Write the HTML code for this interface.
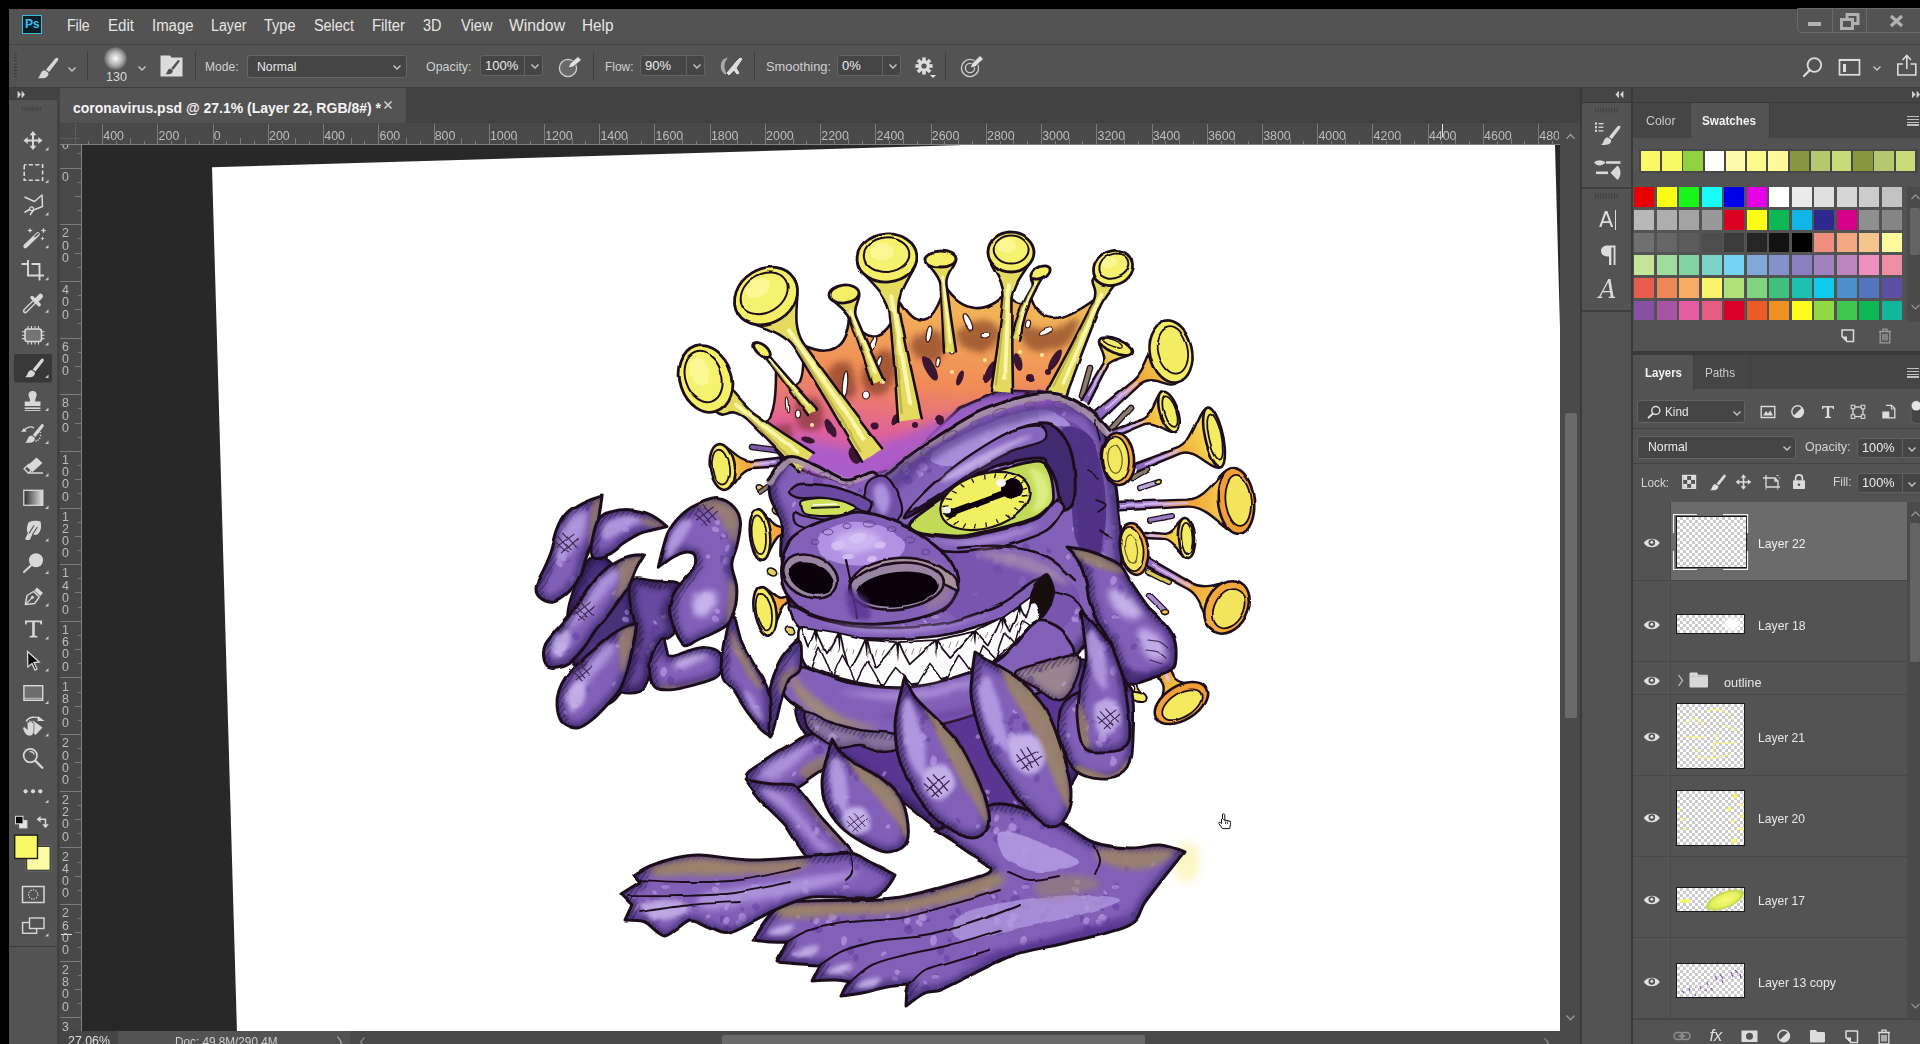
<!DOCTYPE html><html><head><meta charset="utf-8"><title>coronavirus.psd</title><style>
*{box-sizing:border-box;margin:0;padding:0}
html,body{width:1920px;height:1044px;overflow:hidden;background:#000}
body{font-family:"Liberation Sans",sans-serif;color:#ddd;position:relative}
.a{position:absolute}
.t{position:absolute;white-space:nowrap;line-height:1}
svg{position:absolute;overflow:visible}
</style></head><body>
<div class="a" style="left:9px;top:9px;width:1911px;height:1035px;background:#535353;"></div>
<div class="a" style="left:9px;top:44px;width:1911px;height:1px;background:#464646;"></div>
<div class="a" style="left:9px;top:87px;width:1911px;height:1px;background:#3c3c3c;"></div>
<div class="a" style="left:9px;top:88px;width:1911px;height:35px;background:#424242;"></div>
<div class="a" style="left:22px;top:15px;width:20px;height:19px;background:#0a1c26;border:1.5px solid #2fc1e6"></div>
<div class="t" style="left:25px;top:18px;font-size:12px;color:#31c5f0;font-weight:bold;letter-spacing:-0.3px">Ps</div>
<div class="t" style="left:67px;top:18px;font-size:16px;color:#e6e6e6;transform-origin:0 0;transform:scaleX(0.8804);">File</div>
<div class="t" style="left:108px;top:18px;font-size:16px;color:#e6e6e6;transform-origin:0 0;transform:scaleX(0.9430);">Edit</div>
<div class="t" style="left:152px;top:18px;font-size:16px;color:#e6e6e6;transform-origin:0 0;transform:scaleX(0.9332);">Image</div>
<div class="t" style="left:211px;top:18px;font-size:16px;color:#e6e6e6;transform-origin:0 0;transform:scaleX(0.8869);">Layer</div>
<div class="t" style="left:264px;top:18px;font-size:16px;color:#e6e6e6;transform-origin:0 0;transform:scaleX(0.9081);">Type</div>
<div class="t" style="left:314px;top:18px;font-size:16px;color:#e6e6e6;transform-origin:0 0;transform:scaleX(0.8995);">Select</div>
<div class="t" style="left:372px;top:18px;font-size:16px;color:#e6e6e6;transform-origin:0 0;transform:scaleX(0.9281);">Filter</div>
<div class="t" style="left:423px;top:18px;font-size:16px;color:#e6e6e6;transform-origin:0 0;transform:scaleX(0.9045);">3D</div>
<div class="t" style="left:461px;top:18px;font-size:16px;color:#e6e6e6;transform-origin:0 0;transform:scaleX(0.9159);">View</div>
<div class="t" style="left:509px;top:18px;font-size:16px;color:#e6e6e6;transform-origin:0 0;transform:scaleX(0.9841);">Window</div>
<div class="t" style="left:582px;top:18px;font-size:16px;color:#e6e6e6;transform-origin:0 0;transform:scaleX(0.9572);">Help</div>
<div class="a" style="left:1797px;top:8px;width:130px;height:25px;border:1px solid #6a6a6a;border-radius:0 0 0 5px"></div>
<div class="a" style="left:1832px;top:9px;width:1px;height:23px;background:#6a6a6a;"></div>
<div class="a" style="left:1866px;top:9px;width:1px;height:23px;background:#6a6a6a;"></div>
<div class="a" style="left:1808px;top:22px;width:13px;height:4px;background:#b0b0b0;"></div>
<svg style="left:1840px;top:13px" width="20" height="18"><rect x="7" y="1.5" width="11" height="9" fill="none" stroke="#b0b0b0" stroke-width="3"/><rect x="1.5" y="6.5" width="11" height="9" fill="#535353" stroke="#b0b0b0" stroke-width="3"/></svg>
<svg style="left:1889px;top:15px" width="16" height="12"><path d="M2 1 L13 11 M13 1 L2 11" stroke="#b0b0b0" stroke-width="3.2" fill="none"/></svg>
<div class="a" style="left:14px;top:54.0px;width:3px;height:1px;background:#3a3a3a;"></div>
<div class="a" style="left:14px;top:57.2px;width:3px;height:1px;background:#3a3a3a;"></div>
<div class="a" style="left:14px;top:60.4px;width:3px;height:1px;background:#3a3a3a;"></div>
<div class="a" style="left:14px;top:63.6px;width:3px;height:1px;background:#3a3a3a;"></div>
<div class="a" style="left:14px;top:66.8px;width:3px;height:1px;background:#3a3a3a;"></div>
<div class="a" style="left:14px;top:70.0px;width:3px;height:1px;background:#3a3a3a;"></div>
<div class="a" style="left:14px;top:73.2px;width:3px;height:1px;background:#3a3a3a;"></div>
<div class="a" style="left:14px;top:76.4px;width:3px;height:1px;background:#3a3a3a;"></div>
<svg style="left:37px;top:57px" width="22" height="22" viewBox="0 0 21 21"><path d="M19.5 0.8 C20.6 1.4 20.4 2.6 19.8 3.6 L11.6 14.2 L8.6 12.2 L17.2 1.6 C17.9 0.8 18.8 0.4 19.5 0.8 Z M8 13 L10.8 15 C11.4 17 10.2 19.2 7.6 20 C5.4 20.6 2.6 20.2 0.6 20.4 C2.8 18.8 3 16.6 4 14.8 C5 13 6.6 12.6 8 13 Z" fill="#d6d6d6"/></svg>
<svg style="left:68px;top:67px" width="8" height="5"><path d="M0.5 0.5 L4.0 4 L7.5 0.5" fill="none" stroke="#c8c8c8" stroke-width="1.4"/></svg>
<div class="a" style="left:87px;top:52px;width:1px;height:28px;background:#3e3e3e;"></div>
<div class="a" style="left:104px;top:47px;width:23px;height:23px;border-radius:50%;background:radial-gradient(circle,#fff 0%,#e8e8e8 12%,#b4b4b4 40%,#7c7c7c 62%,#535353 74%)"></div>
<div class="t" style="left:106px;top:71px;font-size:12.5px;color:#d8d8d8;">130</div>
<svg style="left:138px;top:66px" width="8" height="5"><path d="M0.5 0.5 L4.0 4 L7.5 0.5" fill="none" stroke="#c8c8c8" stroke-width="1.4"/></svg>
<svg style="left:160px;top:55px" width="23" height="22" viewBox="0 0 23 22"><path d="M0.5 0.5 H10 L11.5 2.5 H22.5 V21.5 H0.5 Z" fill="#dcdcdc"/><g transform="translate(5,4.5) scale(0.72)"><path d="M19.5 0.8 C20.6 1.4 20.4 2.6 19.8 3.6 L11.6 14.2 L8.6 12.2 L17.2 1.6 C17.9 0.8 18.8 0.4 19.5 0.8 Z M8 13 L10.8 15 C11.4 17 10.2 19.2 7.6 20 C5.4 20.6 2.6 20.2 0.6 20.4 C2.8 18.8 3 16.6 4 14.8 C5 13 6.6 12.6 8 13 Z" fill="#505050"/></g></svg>
<div class="a" style="left:195px;top:52px;width:1px;height:28px;background:#3e3e3e;"></div>
<div class="t" style="left:205px;top:59.5px;font-size:13px;color:#d0d0d0;transform-origin:0 0;transform:scaleX(0.9272);">Mode:</div>
<div class="a" style="left:247px;top:55px;width:160px;height:23px;background:#454545;border:1px solid #666;border-radius:3px"></div>
<div class="t" style="left:257px;top:59.5px;font-size:13px;color:#e8e8e8;transform-origin:0 0;transform:scaleX(0.9428);">Normal</div>
<svg style="left:393px;top:65px" width="8" height="5"><path d="M0.5 0.5 L4.0 4 L7.5 0.5" fill="none" stroke="#c8c8c8" stroke-width="1.4"/></svg>
<div class="t" style="left:425.5px;top:59.5px;font-size:13px;color:#d0d0d0;transform-origin:0 0;transform:scaleX(0.9542);">Opacity:</div>
<div class="a" style="left:480px;top:55px;width:63px;height:21px;background:#454545;border:1px solid #636363;border-radius:3px"></div>
<div class="a" style="left:524px;top:56px;width:1px;height:19px;background:#636363;"></div>
<div class="t" style="left:485px;top:59px;font-size:13px;color:#ececec;">100%</div>
<svg style="left:531px;top:64px" width="8" height="5"><path d="M0.5 0.5 L4.0 4 L7.5 0.5" fill="none" stroke="#c8c8c8" stroke-width="1.4"/></svg>
<svg style="left:557px;top:55px" width="28" height="24"><circle cx="11" cy="13" r="8.6" fill="#6a6a6a" stroke="#d0d0d0" stroke-width="1.3"/><path d="M11 13 L13 8.5 L21 1.5 L24.5 5 L16 12 Z" fill="#e0e0e0" stroke="#535353" stroke-width="0.8"/></svg>
<div class="a" style="left:593px;top:52px;width:1px;height:28px;background:#3e3e3e;"></div>
<div class="t" style="left:605px;top:59.5px;font-size:13px;color:#d0d0d0;transform-origin:0 0;transform:scaleX(0.9176);">Flow:</div>
<div class="a" style="left:640px;top:55px;width:65px;height:21px;background:#454545;border:1px solid #636363;border-radius:3px"></div>
<div class="a" style="left:686px;top:56px;width:1px;height:19px;background:#636363;"></div>
<div class="t" style="left:645px;top:59px;font-size:13px;color:#ececec;">90%</div>
<svg style="left:693px;top:64px" width="8" height="5"><path d="M0.5 0.5 L4.0 4 L7.5 0.5" fill="none" stroke="#c8c8c8" stroke-width="1.4"/></svg>
<svg style="left:717px;top:56px" width="28" height="22"><path d="M9 3 C3 5 3 15 9 18 C6 14 6 7 9 3 Z" fill="#a8a8a8" stroke="#a8a8a8" stroke-width="1.5"/><path d="M10 17 L20 5 L23 2 L25 3 L23 6 L19 12 L22 17 L20 18 L17 14 L12 19 Z" fill="#dcdcdc" stroke="#e6e6e6" stroke-width="1" stroke-linejoin="round"/></svg>
<div class="a" style="left:754px;top:52px;width:1px;height:28px;background:#3e3e3e;"></div>
<div class="t" style="left:766px;top:59.5px;font-size:13px;color:#d0d0d0;transform-origin:0 0;transform:scaleX(0.9884);">Smoothing:</div>
<div class="a" style="left:837px;top:55px;width:64px;height:21px;background:#454545;border:1px solid #636363;border-radius:3px"></div>
<div class="a" style="left:882px;top:56px;width:1px;height:19px;background:#636363;"></div>
<div class="t" style="left:842px;top:59px;font-size:13px;color:#ececec;">0%</div>
<svg style="left:889px;top:64px" width="8" height="5"><path d="M0.5 0.5 L4.0 4 L7.5 0.5" fill="none" stroke="#c8c8c8" stroke-width="1.4"/></svg>
<svg style="left:914px;top:56px" width="24" height="24"><g transform="translate(10,10)"><rect x="-1.8" y="-8.6" width="3.6" height="5" fill="#dcdcdc" transform="rotate(0)"/><rect x="-1.8" y="-8.6" width="3.6" height="5" fill="#dcdcdc" transform="rotate(45)"/><rect x="-1.8" y="-8.6" width="3.6" height="5" fill="#dcdcdc" transform="rotate(90)"/><rect x="-1.8" y="-8.6" width="3.6" height="5" fill="#dcdcdc" transform="rotate(135)"/><rect x="-1.8" y="-8.6" width="3.6" height="5" fill="#dcdcdc" transform="rotate(180)"/><rect x="-1.8" y="-8.6" width="3.6" height="5" fill="#dcdcdc" transform="rotate(225)"/><rect x="-1.8" y="-8.6" width="3.6" height="5" fill="#dcdcdc" transform="rotate(270)"/><rect x="-1.8" y="-8.6" width="3.6" height="5" fill="#dcdcdc" transform="rotate(315)"/><circle r="5.8" fill="#dcdcdc"/><circle r="2.6" fill="#535353"/></g><path d="M16 19 H22 L19 22 Z" fill="#e6e6e6"/></svg>
<div class="a" style="left:945px;top:52px;width:1px;height:28px;background:#3e3e3e;"></div>
<svg style="left:958px;top:53px" width="28" height="26"><circle cx="12" cy="15" r="8.6" fill="none" stroke="#d0d0d0" stroke-width="1.3"/><circle cx="12" cy="15" r="4.6" fill="none" stroke="#d0d0d0" stroke-width="1.3"/><path d="M12 15 L14 10.5 L22 2.5 L25.5 6 L17 14 Z" fill="#e0e0e0" stroke="#535353" stroke-width="0.9"/></svg>
<svg style="left:1802px;top:56px" width="22" height="22"><circle cx="12.4" cy="9" r="6.8" fill="none" stroke="#dcdcdc" stroke-width="1.8"/><path d="M7.8 14 L2 20" stroke="#dcdcdc" stroke-width="2.2" stroke-linecap="round"/></svg>
<svg style="left:1838px;top:58px" width="23" height="18"><rect x="1.5" y="1.8" width="20" height="15" fill="none" stroke="#dcdcdc" stroke-width="1.7"/><rect x="1" y="1" width="21" height="2" fill="#dcdcdc"/><rect x="5" y="6" width="3" height="8" fill="#dcdcdc"/></svg>
<svg style="left:1873px;top:66px" width="8" height="5"><path d="M0.5 0.5 L4.0 4 L7.5 0.5" fill="none" stroke="#c8c8c8" stroke-width="1.4"/></svg>
<svg style="left:1896px;top:54px" width="22" height="24"><path d="M7 10 H1.8 V21 H19.8 V10 H14.5" fill="none" stroke="#dcdcdc" stroke-width="1.6"/><path d="M10.8 15 V2 M6.5 6 L10.8 1.5 L15 6" fill="none" stroke="#dcdcdc" stroke-width="1.6"/></svg>
<div class="a" style="left:9px;top:100px;width:48px;height:846px;background:#535353;"></div>
<div class="a" style="left:9px;top:946px;width:48px;height:1px;background:#3c3c3c;"></div>
<div class="a" style="left:9px;top:947px;width:48px;height:97px;background:#535353;"></div>
<div class="a" style="left:57px;top:88px;width:3px;height:956px;background:#424242;"></div>
<div class="a" style="left:9px;top:99px;width:48px;height:1px;background:#3c3c3c;"></div>
<svg style="left:0;top:0" width="60" height="1044">
<path d="M18 91.5 L20.5 94.5 L18 97.5 Z M22 91.5 L24.5 94.5 L22 97.5 Z" fill="#d8d8d8" stroke="#d8d8d8" stroke-width="0.8"/>
<rect x="22.00" y="107" width="1" height="4" fill="#404040"/>
<rect x="24.55" y="107" width="1" height="4" fill="#404040"/>
<rect x="27.10" y="107" width="1" height="4" fill="#404040"/>
<rect x="29.65" y="107" width="1" height="4" fill="#404040"/>
<rect x="32.20" y="107" width="1" height="4" fill="#404040"/>
<rect x="34.75" y="107" width="1" height="4" fill="#404040"/>
<rect x="37.30" y="107" width="1" height="4" fill="#404040"/>
<rect x="39.85" y="107" width="1" height="4" fill="#404040"/>
<path d="M33 131 L36.4 135.2 H34 V139.5 H38.3 V137.1 L42.5 140.5 L38.3 143.9 V141.5 H34 V145.8 H36.4 L33 150 L29.6 145.8 H32 V141.5 H27.7 V143.9 L23.5 140.5 L27.7 137.1 V139.5 H32 V135.2 H29.6 Z" fill="#d8d8d8"/>
<path d="M48.5 147 V150.5 H45 Z" fill="#c8c8c8"/>
<rect x="24.2" y="164.8" width="18.4" height="15.4" fill="none" stroke="#d8d8d8" stroke-width="1.6" stroke-dasharray="4.2 2.3" stroke-dashoffset="2"/>
<path d="M48.5 179.5 V183.0 H45 Z" fill="#c8c8c8"/>
<path d="M24.5 197 L34.5 201.5 L42 195 L42.5 206.5 L33.5 210 L30 215 M32 208 L24.5 212.5" fill="none" stroke="#d8d8d8" stroke-width="1.5" stroke-linejoin="round"/><circle cx="31.6" cy="208.7" r="1.9" fill="#535353" stroke="#d8d8d8" stroke-width="1.2"/>
<path d="M48.5 212 V215.5 H45 Z" fill="#c8c8c8"/>
<path d="M25.3 246.3 L37.8 234.2" stroke="#d8d8d8" stroke-width="4" stroke-linecap="round"/><path d="M35 236.5 L38 233.8" stroke="#535353" stroke-width="1.6" stroke-linecap="round"/>
<path d="M30 227.7 L30.784 229.716 L32.8 230.5 L30.784 231.284 L30 233.3 L29.216 231.284 L27.2 230.5 L29.216 229.716 Z" fill="#d8d8d8"/>
<path d="M43.5 227.5 L44.34 229.66 L46.5 230.5 L44.34 231.34 L43.5 233.5 L42.66 231.34 L40.5 230.5 L42.66 229.66 Z" fill="#d8d8d8"/>
<path d="M42.5 236.3 L43.116 237.884 L44.7 238.5 L43.116 239.116 L42.5 240.7 L41.884 239.116 L40.3 238.5 L41.884 237.884 Z" fill="#d8d8d8"/>
<path d="M48.5 244.8 V248.3 H45 Z" fill="#c8c8c8"/>
<path d="M21.5 264 H28 M28 260 V275.5 H44 M31.5 264 H39.5 V280.5" fill="none" stroke="#d8d8d8" stroke-width="1.9"/>
<path d="M48.5 276.8 V280.3 H45 Z" fill="#c8c8c8"/>
<path d="M25.2 311 L35 301.2" stroke="#d8d8d8" stroke-width="4.6" stroke-linecap="round"/><path d="M25.4 310.8 L34.2 302" stroke="#535353" stroke-width="2" stroke-linecap="round"/><path d="M32 297.5 L39.2 304.7" stroke="#d8d8d8" stroke-width="3.4" stroke-linecap="round"/><path d="M36 300.7 L40.5 296.2" stroke="#d8d8d8" stroke-width="5" stroke-linecap="round"/>
<path d="M48.5 309.3 V312.8 H45 Z" fill="#c8c8c8"/>
<rect x="25" y="329" width="16.5" height="12.5" rx="2.5" fill="#747474" stroke="#d8d8d8" stroke-width="1.6"/>
<path d="M28.0 326 V329 M28.0 341.5 V344.5" stroke="#d8d8d8" stroke-width="1.1"/>
<path d="M31.5 326 V329 M31.5 341.5 V344.5" stroke="#d8d8d8" stroke-width="1.1"/>
<path d="M35.0 326 V329 M35.0 341.5 V344.5" stroke="#d8d8d8" stroke-width="1.1"/>
<path d="M38.5 326 V329 M38.5 341.5 V344.5" stroke="#d8d8d8" stroke-width="1.1"/>
<path d="M22 331.8 H25 M41.5 331.8 H44.5" stroke="#d8d8d8" stroke-width="1.1"/>
<path d="M22 335.2 H25 M41.5 335.2 H44.5" stroke="#d8d8d8" stroke-width="1.1"/>
<path d="M22 338.6 H25 M41.5 338.6 H44.5" stroke="#d8d8d8" stroke-width="1.1"/>
<path d="M48.5 342 V345.5 H45 Z" fill="#c8c8c8"/>
<rect x="14" y="354" width="38" height="28.5" rx="2" fill="#383838"/>
<g transform="translate(24.5,358) scale(0.95)"><path d="M19.5 0.8 C20.6 1.4 20.4 2.6 19.8 3.6 L11.6 14.2 L8.6 12.2 L17.2 1.6 C17.9 0.8 18.8 0.4 19.5 0.8 Z M8 13 L10.8 15 C11.4 17 10.2 19.2 7.6 20 C5.4 20.6 2.6 20.2 0.6 20.4 C2.8 18.8 3 16.6 4 14.8 C5 13 6.6 12.6 8 13 Z" fill="#d8d8d8"/></g>
<path d="M48.5 374.5 V378.0 H45 Z" fill="#c8c8c8"/>
<path d="M32.6 391 C35.6 391 37 393.2 36.6 395.6 C36.3 397.4 35.2 398.8 35.2 400.5 V401.5 H40.5 V406 H24.7 V401.5 H30 V400.5 C30 398.8 28.9 397.4 28.6 395.6 C28.2 393.2 29.6 391 32.6 391 Z" fill="#d8d8d8"/><rect x="24.7" y="407.4" width="15.8" height="1.6" fill="#d8d8d8"/><rect x="24.7" y="410" width="15.8" height="0.9" fill="#d8d8d8"/>
<path d="M48.5 407.5 V411.0 H45 Z" fill="#c8c8c8"/>
<g transform="translate(24.5,423.5) scale(0.95)"><path d="M19.5 0.8 C20.6 1.4 20.4 2.6 19.8 3.6 L11.6 14.2 L8.6 12.2 L17.2 1.6 C17.9 0.8 18.8 0.4 19.5 0.8 Z M8 13 L10.8 15 C11.4 17 10.2 19.2 7.6 20 C5.4 20.6 2.6 20.2 0.6 20.4 C2.8 18.8 3 16.6 4 14.8 C5 13 6.6 12.6 8 13 Z" fill="#d8d8d8"/></g>
<path d="M24.5 430.5 C26.5 427 31 426 34 428" fill="none" stroke="#d8d8d8" stroke-width="1.3"/><path d="M21 431.8 L26.5 431.8 L24 428 Z" fill="#d8d8d8"/>
<circle cx="40.3" cy="432.5" r="0.8" fill="#d8d8d8"/><circle cx="40.5" cy="435.5" r="0.8" fill="#d8d8d8"/><circle cx="39.7" cy="438.2" r="0.8" fill="#d8d8d8"/><circle cx="38" cy="440" r="0.8" fill="#d8d8d8"/><circle cx="36" cy="441" r="0.8" fill="#d8d8d8"/>
<path d="M48.5 440.5 V444.0 H45 Z" fill="#c8c8c8"/>
<path d="M36.5 457.5 L42.5 463 L32.5 472 L26.5 466.5 Z" fill="#d8d8d8"/><path d="M29.5 463.8 L24 468.8 L28.2 473 H43 M28.5 473 L34 468" fill="none" stroke="#d8d8d8" stroke-width="1.4" stroke-linejoin="round"/>
<path d="M48.5 473 V476.5 H45 Z" fill="#c8c8c8"/>
<defs><linearGradient id="gd" x1="0" y1="0" x2="1" y2="0"><stop offset="0" stop-color="#2c2c2c"/><stop offset="1" stop-color="#e2e2e2"/></linearGradient></defs>
<rect x="23.8" y="490.3" width="19" height="15" fill="url(#gd)" stroke="#d8d8d8" stroke-width="1.3"/>
<path d="M48.5 505.5 V509.0 H45 Z" fill="#c8c8c8"/>
<path d="M28.5 522.5 C31 520.5 38.5 520.5 40.5 521.5 C41.5 525 41.5 531 38 534 C36 535.5 33.5 535 32.5 534 L30 539.5 C28.5 540.5 25.5 540 25 539 L28 533 C26.5 531.5 26.5 527 28.5 522.5 Z" fill="#d8d8d8"/><path d="M29 533.5 L34 525.5 M32.5 534.5 L37.5 527" stroke="#535353" stroke-width="1.2" fill="none"/>
<path d="M48.5 538 V541.5 H45 Z" fill="#c8c8c8"/>
<circle cx="36" cy="560.3" r="7" fill="#d8d8d8"/><path d="M31 565.5 L24 572" stroke="#d8d8d8" stroke-width="2" stroke-linecap="round"/>
<path d="M48.5 570.5 V574.0 H45 Z" fill="#c8c8c8"/>
<path d="M37 587.5 L43 593 L40.3 596 L34.3 590.5 Z" fill="#d8d8d8"/><path d="M33.5 591.5 L27 595.5 L25.3 604.5 L34.5 603.5 L39.3 597 Z" fill="none" stroke="#d8d8d8" stroke-width="1.4" stroke-linejoin="round"/><path d="M25.8 604 L32 597.8" stroke="#d8d8d8" stroke-width="1.2"/><circle cx="32.4" cy="597.3" r="1.5" fill="#d8d8d8"/>
<path d="M48.5 603 V606.5 H45 Z" fill="#c8c8c8"/>
<path d="M25 620.5 H42 V624.5 H40.6 L40 622.3 H34.8 V635.5 L37.5 636.2 V637.6 H29.5 V636.2 L32.2 635.5 V622.3 H27 L26.4 624.5 H25 Z" fill="#d8d8d8"/>
<path d="M48.5 636 V639.5 H45 Z" fill="#c8c8c8"/>
<path d="M27.5 651.5 L39.3 662 L34 662.6 L37 669 L35 670 L32 663.6 L27.8 667 Z" fill="#0c0c0c" stroke="#d8d8d8" stroke-width="1.3" stroke-linejoin="miter"/>
<path d="M48.5 668 V671.5 H45 Z" fill="#c8c8c8"/>
<rect x="23.9" y="685.7" width="18.8" height="14.6" fill="#6c6c6c" stroke="#d8d8d8" stroke-width="1.4"/><path d="M24 698.3 H42.5" stroke="#d8d8d8" stroke-width="0.8"/>
<path d="M48.5 700.5 V704.0 H45 Z" fill="#c8c8c8"/>
<path d="M26 721.5 C29 716.5 36 716 40 719" fill="none" stroke="#d8d8d8" stroke-width="1.4"/><path d="M38 716 L44.5 721 H37.5 Z" fill="#d8d8d8"/>
<path d="M33 720.5 L42.5 727.5 L35.5 735 L28 727.5 Z" fill="#d8d8d8"/>
<path d="M25 727 L27.2 729.5 V722.5 C27.2 721.5 28.8 721.5 28.8 722.5 V721 C28.8 720 30.6 720 30.6 721 V721.6 C30.6 720.6 32.3 720.6 32.3 721.6 V723 C32.3 722.2 33.9 722.2 33.9 723 V731 C33.9 734 32 736 29.5 736 C27 736 25.8 734.6 24.5 732.5 L22.8 729 C22.4 727.6 24 726.4 25 727 Z" fill="#d8d8d8" stroke="#535353" stroke-width="0.7"/>
<path d="M48.5 733 V736.5 H45 Z" fill="#c8c8c8"/>
<circle cx="30.3" cy="755.6" r="6.7" fill="none" stroke="#d8d8d8" stroke-width="1.7"/><path d="M35.3 760.8 L42.3 767.8" stroke="#d8d8d8" stroke-width="2.3" stroke-linecap="round"/><path d="M29.5 751.8 C31.6 751.3 33.6 752.6 34.2 754.6" fill="none" stroke="#d8d8d8" stroke-width="1.1"/>
<circle cx="25.6" cy="791.3" r="2.1" fill="#d8d8d8"/>
<circle cx="33" cy="791.3" r="2.1" fill="#d8d8d8"/>
<circle cx="40.3" cy="791.3" r="2.1" fill="#d8d8d8"/>
<path d="M48.5 799.5 V803.0 H45 Z" fill="#c8c8c8"/>
<rect x="19.5" y="820.5" width="7.5" height="7.5" fill="#e4e4e4" stroke="#cfcfcf" stroke-width="1"/><rect x="15.5" y="816.3" width="7.5" height="7.5" fill="#0a0a0a" stroke="#d8d8d8" stroke-width="1"/>
<path d="M40 819.3 H45.5 V824.5" fill="none" stroke="#d8d8d8" stroke-width="1.5"/><path d="M36.6 819.3 L40.6 816 V822.6 Z M45.5 828.3 L42.2 824.2 H48.8 Z" fill="#d8d8d8"/>
<rect x="26.7" y="846.4" width="23.4" height="23.8" fill="#fdfba4" stroke="#2a2a2a" stroke-width="1"/><rect x="25.7" y="845.4" width="25.4" height="25.8" fill="none" stroke="#6a6a6a" stroke-width="0.8"/>
<rect x="14.7" y="835.1" width="22.8" height="23.4" fill="#fbf866" stroke="#1c1c1c" stroke-width="1.4"/>
<rect x="22.5" y="886.5" width="21.5" height="16" fill="none" stroke="#d8d8d8" stroke-width="1.5"/><circle cx="33.2" cy="894.5" r="4.6" fill="none" stroke="#d8d8d8" stroke-width="1.2" stroke-dasharray="1.3 1.3"/>
<rect x="22.6" y="922.5" width="14" height="10.8" fill="#535353" stroke="#d8d8d8" stroke-width="1.4"/><rect x="29.5" y="918" width="14.5" height="10.5" fill="#535353" stroke="#d8d8d8" stroke-width="1.4"/>
<path d="M48.5 933 V936.5 H45 Z" fill="#c8c8c8"/>
</svg>
<div class="a" style="left:60px;top:88px;width:346px;height:35px;background:#535353;"></div>
<div class="t" style="left:73px;top:101px;font-size:14px;color:#f4f4f4;transform-origin:0 0;transform:scaleX(1.0007);font-weight:bold;">coronavirus.psd @ 27.1% (Layer 22, RGB/8#) *</div>
<svg style="left:383px;top:100px" width="10" height="10"><path d="M1.5 1.5 L8.5 8.5 M8.5 1.5 L1.5 8.5" stroke="#d0d0d0" stroke-width="1.6"/></svg>
<div class="a" style="left:60px;top:123px;width:1500px;height:908px;background:#282828;"></div>
<svg style="left:0;top:0" width="1920" height="1044"><defs><clipPath id="cv"><rect x="82" y="145" width="1478" height="886"/></clipPath></defs><g clip-path="url(#cv)"><path id="page" d="M212 167.3 L1554.5 127.5 L1579.6 1040 L237.2 1040 Z" fill="#fff"/>
<filter id="sk" x="0" y="0" width="100%" height="100%" filterUnits="userSpaceOnUse"><feTurbulence type="fractalNoise" baseFrequency="0.035" numOctaves="2" seed="4" result="n"/><feDisplacementMap in="SourceGraphic" in2="n" scale="3.2" xChannelSelector="R" yChannelSelector="G"/></filter>
<g filter="url(#sk)">
<defs>
<filter id="b2" x="-30%" y="-30%" width="160%" height="160%"><feGaussianBlur stdDeviation="2"/></filter>
<filter id="b3" x="-30%" y="-30%" width="160%" height="160%"><feGaussianBlur stdDeviation="3"/></filter>
<filter id="b5" x="-30%" y="-30%" width="160%" height="160%"><feGaussianBlur stdDeviation="5"/></filter>
<filter id="b8" x="-30%" y="-30%" width="160%" height="160%"><feGaussianBlur stdDeviation="8"/></filter>
<linearGradient id="crg" gradientUnits="userSpaceOnUse" x1="900" y1="300" x2="880" y2="480"><stop offset="0" stop-color="#f2b458"/><stop offset="0.45" stop-color="#f08a58"/><stop offset="0.75" stop-color="#e0609a"/><stop offset="1" stop-color="#b060c8"/></linearGradient>
<linearGradient id="stg" x1="0" y1="0" x2="1" y2="0"><stop offset="0" stop-color="#8a5cc2"/><stop offset="0.55" stop-color="#b08ad8"/><stop offset="0.8" stop-color="#f2a63a"/><stop offset="1" stop-color="#f6d24a"/></linearGradient>
<pattern id="mot" width="90" height="90" patternUnits="userSpaceOnUse"><ellipse cx="40.7" cy="50.4" rx="5.2" ry="3.6" transform="rotate(91 40.7 50.4)" fill="#5a3896" opacity="0.45"/><ellipse cx="52.9" cy="16.6" rx="3.8" ry="2.9" transform="rotate(143 52.9 16.6)" fill="#5a3896" opacity="0.45"/><ellipse cx="8.5" cy="27.3" rx="2.3" ry="1.9" transform="rotate(125 8.5 27.3)" fill="#5a3896" opacity="0.45"/><ellipse cx="3.8" cy="88.4" rx="5.4" ry="4.1" transform="rotate(111 3.8 88.4)" fill="#5a3896" opacity="0.45"/><ellipse cx="14.2" cy="1.4" rx="3.8" ry="2.0" transform="rotate(34 14.2 1.4)" fill="#5a3896" opacity="0.45"/><ellipse cx="21.8" cy="2.7" rx="3.6" ry="2.5" transform="rotate(152 21.8 2.7)" fill="#5a3896" opacity="0.45"/><ellipse cx="46.7" cy="57.6" rx="3.7" ry="2.9" transform="rotate(82 46.7 57.6)" fill="#5a3896" opacity="0.45"/><ellipse cx="25.0" cy="89.8" rx="5.5" ry="4.6" transform="rotate(127 25.0 89.8)" fill="#5a3896" opacity="0.45"/><ellipse cx="28.4" cy="20.7" rx="3.0" ry="1.6" transform="rotate(138 28.4 20.7)" fill="#5a3896" opacity="0.45"/><ellipse cx="36.0" cy="76.2" rx="3.4" ry="3.0" transform="rotate(153 36.0 76.2)" fill="#5a3896" opacity="0.45"/><ellipse cx="0.0" cy="18.9" rx="5.2" ry="3.6" transform="rotate(176 0.0 18.9)" fill="#5a3896" opacity="0.45"/><ellipse cx="35.8" cy="6.6" rx="4.2" ry="3.4" transform="rotate(49 35.8 6.6)" fill="#5a3896" opacity="0.45"/><ellipse cx="7.8" cy="29.9" rx="5.4" ry="4.3" transform="rotate(21 7.8 29.9)" fill="#5a3896" opacity="0.45"/><ellipse cx="22.2" cy="9.1" rx="2.2" ry="1.8" transform="rotate(32 22.2 9.1)" fill="#5a3896" opacity="0.45"/><ellipse cx="50.3" cy="40.3" rx="2.7" ry="2.1" transform="rotate(24 50.3 40.3)" fill="#5a3896" opacity="0.45"/><ellipse cx="57.9" cy="10.5" rx="3.5" ry="2.0" transform="rotate(49 57.9 10.5)" fill="#5a3896" opacity="0.45"/><ellipse cx="87.4" cy="72.3" rx="2.9" ry="2.5" transform="rotate(38 87.4 72.3)" fill="#c9b0f0" opacity="0.5"/><ellipse cx="35.5" cy="76.9" rx="3.9" ry="2.1" transform="rotate(178 35.5 76.9)" fill="#c9b0f0" opacity="0.5"/><ellipse cx="19.2" cy="23.2" rx="4.3" ry="2.7" transform="rotate(53 19.2 23.2)" fill="#c9b0f0" opacity="0.5"/><ellipse cx="6.6" cy="8.1" rx="3.7" ry="2.2" transform="rotate(108 6.6 8.1)" fill="#c9b0f0" opacity="0.5"/><ellipse cx="33.5" cy="40.8" rx="4.9" ry="3.4" transform="rotate(103 33.5 40.8)" fill="#c9b0f0" opacity="0.5"/><ellipse cx="78.0" cy="16.5" rx="2.5" ry="2.1" transform="rotate(147 78.0 16.5)" fill="#c9b0f0" opacity="0.5"/><ellipse cx="22.5" cy="17.1" rx="4.2" ry="3.7" transform="rotate(35 22.5 17.1)" fill="#c9b0f0" opacity="0.5"/><ellipse cx="85.5" cy="79.4" rx="3.8" ry="2.5" transform="rotate(19 85.5 79.4)" fill="#c9b0f0" opacity="0.5"/><ellipse cx="3.5" cy="86.6" rx="2.7" ry="2.1" transform="rotate(46 3.5 86.6)" fill="#c9b0f0" opacity="0.5"/><ellipse cx="74.1" cy="53.7" rx="2.9" ry="1.6" transform="rotate(130 74.1 53.7)" fill="#c9b0f0" opacity="0.5"/><ellipse cx="6.2" cy="20.6" rx="3.7" ry="3.1" transform="rotate(111 6.2 20.6)" fill="#c9b0f0" opacity="0.5"/><ellipse cx="25.2" cy="82.6" rx="2.6" ry="1.3" transform="rotate(48 25.2 82.6)" fill="#c9b0f0" opacity="0.5"/></pattern>
<pattern id="hat" width="4" height="4" patternUnits="userSpaceOnUse" patternTransform="rotate(-55)"><rect x="0" y="0" width="4" height="0.9" fill="#22122e"/></pattern>
<pattern id="hat2" width="4" height="4" patternUnits="userSpaceOnUse" patternTransform="rotate(35)"><rect x="0" y="0" width="4" height="0.8" fill="#22122e"/></pattern>
</defs>
<ellipse cx="1186" cy="862" rx="14" ry="20" fill="#fbf0a0" opacity="0.6" filter="url(#b5)"/>
<clipPath id="c1"><path d="M800.0 705.0 C811.7 702.5 853.3 725.0 880.0 725.0 C906.7 725.0 933.3 712.5 960.0 705.0 C986.7 697.5 1019.2 687.5 1040.0 680.0 C1060.8 672.5 1075.0 656.7 1085.0 660.0 C1095.0 663.3 1100.0 683.3 1100.0 700.0 C1100.0 716.7 1091.7 743.3 1085.0 760.0 C1078.3 776.7 1070.8 788.3 1060.0 800.0 C1049.2 811.7 1036.7 823.3 1020.0 830.0 C1003.3 836.7 980.0 845.0 960.0 840.0 C940.0 835.0 918.3 812.5 900.0 800.0 C881.7 787.5 865.0 775.0 850.0 765.0 C835.0 755.0 818.3 750.0 810.0 740.0 C801.7 730.0 788.3 707.5 800.0 705.0 Z"/></clipPath>
<path d="M800.0 705.0 C811.7 702.5 853.3 725.0 880.0 725.0 C906.7 725.0 933.3 712.5 960.0 705.0 C986.7 697.5 1019.2 687.5 1040.0 680.0 C1060.8 672.5 1075.0 656.7 1085.0 660.0 C1095.0 663.3 1100.0 683.3 1100.0 700.0 C1100.0 716.7 1091.7 743.3 1085.0 760.0 C1078.3 776.7 1070.8 788.3 1060.0 800.0 C1049.2 811.7 1036.7 823.3 1020.0 830.0 C1003.3 836.7 980.0 845.0 960.0 840.0 C940.0 835.0 918.3 812.5 900.0 800.0 C881.7 787.5 865.0 775.0 850.0 765.0 C835.0 755.0 818.3 750.0 810.0 740.0 C801.7 730.0 788.3 707.5 800.0 705.0 Z" fill="#5a3692"/>
<g clip-path="url(#c1)">
<path d="M800.0 705.0 C811.7 702.5 853.3 725.0 880.0 725.0 C906.7 725.0 933.3 712.5 960.0 705.0 C986.7 697.5 1019.2 687.5 1040.0 680.0 C1060.8 672.5 1075.0 656.7 1085.0 660.0 C1095.0 663.3 1100.0 683.3 1100.0 700.0 C1100.0 716.7 1091.7 743.3 1085.0 760.0 C1078.3 776.7 1070.8 788.3 1060.0 800.0 C1049.2 811.7 1036.7 823.3 1020.0 830.0 C1003.3 836.7 980.0 845.0 960.0 840.0 C940.0 835.0 918.3 812.5 900.0 800.0 C881.7 787.5 865.0 775.0 850.0 765.0 C835.0 755.0 818.3 750.0 810.0 740.0 C801.7 730.0 788.3 707.5 800.0 705.0 Z" fill="url(#mot)"/>
<path d="M800.0 705.0 C811.7 702.5 853.3 725.0 880.0 725.0 C906.7 725.0 933.3 712.5 960.0 705.0 C986.7 697.5 1019.2 687.5 1040.0 680.0 C1060.8 672.5 1075.0 656.7 1085.0 660.0 C1095.0 663.3 1100.0 683.3 1100.0 700.0 C1100.0 716.7 1091.7 743.3 1085.0 760.0 C1078.3 776.7 1070.8 788.3 1060.0 800.0 C1049.2 811.7 1036.7 823.3 1020.0 830.0 C1003.3 836.7 980.0 845.0 960.0 840.0 C940.0 835.0 918.3 812.5 900.0 800.0 C881.7 787.5 865.0 775.0 850.0 765.0 C835.0 755.0 818.3 750.0 810.0 740.0 C801.7 730.0 788.3 707.5 800.0 705.0 Z" fill="none" stroke="#35205e" stroke-width="14" filter="url(#b3)" opacity="0.9"/>
<path d="M800.0 705.0 C811.7 702.5 853.3 725.0 880.0 725.0 C906.7 725.0 933.3 712.5 960.0 705.0 C986.7 697.5 1019.2 687.5 1040.0 680.0 C1060.8 672.5 1075.0 656.7 1085.0 660.0 C1095.0 663.3 1100.0 683.3 1100.0 700.0 C1100.0 716.7 1091.7 743.3 1085.0 760.0 C1078.3 776.7 1070.8 788.3 1060.0 800.0 C1049.2 811.7 1036.7 823.3 1020.0 830.0 C1003.3 836.7 980.0 845.0 960.0 840.0 C940.0 835.0 918.3 812.5 900.0 800.0 C881.7 787.5 865.0 775.0 850.0 765.0 C835.0 755.0 818.3 750.0 810.0 740.0 C801.7 730.0 788.3 707.5 800.0 705.0 Z" fill="none" stroke="url(#hat)" stroke-width="9" opacity="0.55" transform="translate(3 3)"/>
</g>
<path d="M800.0 705.0 C811.7 702.5 853.3 725.0 880.0 725.0 C906.7 725.0 933.3 712.5 960.0 705.0 C986.7 697.5 1019.2 687.5 1040.0 680.0 C1060.8 672.5 1075.0 656.7 1085.0 660.0 C1095.0 663.3 1100.0 683.3 1100.0 700.0 C1100.0 716.7 1091.7 743.3 1085.0 760.0 C1078.3 776.7 1070.8 788.3 1060.0 800.0 C1049.2 811.7 1036.7 823.3 1020.0 830.0 C1003.3 836.7 980.0 845.0 960.0 840.0 C940.0 835.0 918.3 812.5 900.0 800.0 C881.7 787.5 865.0 775.0 850.0 765.0 C835.0 755.0 818.3 750.0 810.0 740.0 C801.7 730.0 788.3 707.5 800.0 705.0 Z" fill="none" stroke="#1d0f1c" stroke-width="2.4" stroke-linejoin="round" stroke-linecap="round"/>
<clipPath id="c2"><path d="M936.0 831.0 C936.0 831.0 963.7 816.5 975.0 812.0 C986.3 807.5 990.3 802.5 1004.0 804.0 C1017.7 805.5 1042.2 814.7 1057.0 821.0 C1071.8 827.3 1080.8 837.5 1093.0 842.0 C1105.2 846.5 1118.8 847.5 1130.0 848.0 C1141.2 848.5 1151.0 844.3 1160.0 845.0 C1169.0 845.7 1184.0 852.0 1184.0 852.0 C1184.0 852.0 1171.5 867.7 1165.0 876.0 C1158.5 884.3 1151.0 893.8 1145.0 902.0 C1139.0 910.2 1141.5 918.3 1129.0 925.0 C1116.5 931.7 1089.2 937.0 1070.0 942.0 C1050.8 947.0 1031.5 949.0 1014.0 955.0 C996.5 961.0 977.3 972.2 965.0 978.0 C952.7 983.8 946.7 987.5 940.0 990.0 C933.3 992.5 930.7 990.3 925.0 993.0 C919.3 995.7 906.0 1006.0 906.0 1006.0 C906.0 1006.0 906.5 995.5 907.0 992.0 C907.5 988.5 909.0 985.0 909.0 985.0 C909.0 985.0 894.8 985.7 887.0 987.0 C879.2 988.3 869.7 991.5 862.0 993.0 C854.3 994.5 841.0 996.0 841.0 996.0 C841.0 996.0 844.5 988.3 846.0 986.0 C847.5 983.7 850.0 982.0 850.0 982.0 C850.0 982.0 841.3 980.2 835.0 980.0 C828.7 979.8 812.0 981.0 812.0 981.0 C812.0 981.0 815.7 973.7 817.0 971.0 C818.3 968.3 820.0 965.0 820.0 965.0 C820.0 965.0 807.2 964.5 800.0 964.0 C792.8 963.5 777.0 962.0 777.0 962.0 C777.0 962.0 781.3 953.3 783.0 950.0 C784.7 946.7 787.0 942.0 787.0 942.0 C787.0 942.0 775.5 942.3 770.0 942.0 C764.5 941.7 754.0 940.0 754.0 940.0 C754.0 940.0 758.5 930.0 762.0 925.0 C765.5 920.0 770.3 913.8 775.0 910.0 C779.7 906.2 777.5 903.7 790.0 902.0 C802.5 900.3 831.7 900.8 850.0 900.0 C868.3 899.2 881.7 900.0 900.0 897.0 C918.3 894.0 944.8 886.5 960.0 882.0 C975.2 877.5 990.2 875.3 991.0 870.0 C991.8 864.7 974.2 856.5 965.0 850.0 C955.8 843.5 936.0 831.0 936.0 831.0 Z"/></clipPath>
<path d="M936.0 831.0 C936.0 831.0 963.7 816.5 975.0 812.0 C986.3 807.5 990.3 802.5 1004.0 804.0 C1017.7 805.5 1042.2 814.7 1057.0 821.0 C1071.8 827.3 1080.8 837.5 1093.0 842.0 C1105.2 846.5 1118.8 847.5 1130.0 848.0 C1141.2 848.5 1151.0 844.3 1160.0 845.0 C1169.0 845.7 1184.0 852.0 1184.0 852.0 C1184.0 852.0 1171.5 867.7 1165.0 876.0 C1158.5 884.3 1151.0 893.8 1145.0 902.0 C1139.0 910.2 1141.5 918.3 1129.0 925.0 C1116.5 931.7 1089.2 937.0 1070.0 942.0 C1050.8 947.0 1031.5 949.0 1014.0 955.0 C996.5 961.0 977.3 972.2 965.0 978.0 C952.7 983.8 946.7 987.5 940.0 990.0 C933.3 992.5 930.7 990.3 925.0 993.0 C919.3 995.7 906.0 1006.0 906.0 1006.0 C906.0 1006.0 906.5 995.5 907.0 992.0 C907.5 988.5 909.0 985.0 909.0 985.0 C909.0 985.0 894.8 985.7 887.0 987.0 C879.2 988.3 869.7 991.5 862.0 993.0 C854.3 994.5 841.0 996.0 841.0 996.0 C841.0 996.0 844.5 988.3 846.0 986.0 C847.5 983.7 850.0 982.0 850.0 982.0 C850.0 982.0 841.3 980.2 835.0 980.0 C828.7 979.8 812.0 981.0 812.0 981.0 C812.0 981.0 815.7 973.7 817.0 971.0 C818.3 968.3 820.0 965.0 820.0 965.0 C820.0 965.0 807.2 964.5 800.0 964.0 C792.8 963.5 777.0 962.0 777.0 962.0 C777.0 962.0 781.3 953.3 783.0 950.0 C784.7 946.7 787.0 942.0 787.0 942.0 C787.0 942.0 775.5 942.3 770.0 942.0 C764.5 941.7 754.0 940.0 754.0 940.0 C754.0 940.0 758.5 930.0 762.0 925.0 C765.5 920.0 770.3 913.8 775.0 910.0 C779.7 906.2 777.5 903.7 790.0 902.0 C802.5 900.3 831.7 900.8 850.0 900.0 C868.3 899.2 881.7 900.0 900.0 897.0 C918.3 894.0 944.8 886.5 960.0 882.0 C975.2 877.5 990.2 875.3 991.0 870.0 C991.8 864.7 974.2 856.5 965.0 850.0 C955.8 843.5 936.0 831.0 936.0 831.0 Z" fill="#8360b8"/>
<g clip-path="url(#c2)">
<path d="M936.0 831.0 C936.0 831.0 963.7 816.5 975.0 812.0 C986.3 807.5 990.3 802.5 1004.0 804.0 C1017.7 805.5 1042.2 814.7 1057.0 821.0 C1071.8 827.3 1080.8 837.5 1093.0 842.0 C1105.2 846.5 1118.8 847.5 1130.0 848.0 C1141.2 848.5 1151.0 844.3 1160.0 845.0 C1169.0 845.7 1184.0 852.0 1184.0 852.0 C1184.0 852.0 1171.5 867.7 1165.0 876.0 C1158.5 884.3 1151.0 893.8 1145.0 902.0 C1139.0 910.2 1141.5 918.3 1129.0 925.0 C1116.5 931.7 1089.2 937.0 1070.0 942.0 C1050.8 947.0 1031.5 949.0 1014.0 955.0 C996.5 961.0 977.3 972.2 965.0 978.0 C952.7 983.8 946.7 987.5 940.0 990.0 C933.3 992.5 930.7 990.3 925.0 993.0 C919.3 995.7 906.0 1006.0 906.0 1006.0 C906.0 1006.0 906.5 995.5 907.0 992.0 C907.5 988.5 909.0 985.0 909.0 985.0 C909.0 985.0 894.8 985.7 887.0 987.0 C879.2 988.3 869.7 991.5 862.0 993.0 C854.3 994.5 841.0 996.0 841.0 996.0 C841.0 996.0 844.5 988.3 846.0 986.0 C847.5 983.7 850.0 982.0 850.0 982.0 C850.0 982.0 841.3 980.2 835.0 980.0 C828.7 979.8 812.0 981.0 812.0 981.0 C812.0 981.0 815.7 973.7 817.0 971.0 C818.3 968.3 820.0 965.0 820.0 965.0 C820.0 965.0 807.2 964.5 800.0 964.0 C792.8 963.5 777.0 962.0 777.0 962.0 C777.0 962.0 781.3 953.3 783.0 950.0 C784.7 946.7 787.0 942.0 787.0 942.0 C787.0 942.0 775.5 942.3 770.0 942.0 C764.5 941.7 754.0 940.0 754.0 940.0 C754.0 940.0 758.5 930.0 762.0 925.0 C765.5 920.0 770.3 913.8 775.0 910.0 C779.7 906.2 777.5 903.7 790.0 902.0 C802.5 900.3 831.7 900.8 850.0 900.0 C868.3 899.2 881.7 900.0 900.0 897.0 C918.3 894.0 944.8 886.5 960.0 882.0 C975.2 877.5 990.2 875.3 991.0 870.0 C991.8 864.7 974.2 856.5 965.0 850.0 C955.8 843.5 936.0 831.0 936.0 831.0 Z" fill="url(#mot)"/>
<path d="M936.0 831.0 C936.0 831.0 963.7 816.5 975.0 812.0 C986.3 807.5 990.3 802.5 1004.0 804.0 C1017.7 805.5 1042.2 814.7 1057.0 821.0 C1071.8 827.3 1080.8 837.5 1093.0 842.0 C1105.2 846.5 1118.8 847.5 1130.0 848.0 C1141.2 848.5 1151.0 844.3 1160.0 845.0 C1169.0 845.7 1184.0 852.0 1184.0 852.0 C1184.0 852.0 1171.5 867.7 1165.0 876.0 C1158.5 884.3 1151.0 893.8 1145.0 902.0 C1139.0 910.2 1141.5 918.3 1129.0 925.0 C1116.5 931.7 1089.2 937.0 1070.0 942.0 C1050.8 947.0 1031.5 949.0 1014.0 955.0 C996.5 961.0 977.3 972.2 965.0 978.0 C952.7 983.8 946.7 987.5 940.0 990.0 C933.3 992.5 930.7 990.3 925.0 993.0 C919.3 995.7 906.0 1006.0 906.0 1006.0 C906.0 1006.0 906.5 995.5 907.0 992.0 C907.5 988.5 909.0 985.0 909.0 985.0 C909.0 985.0 894.8 985.7 887.0 987.0 C879.2 988.3 869.7 991.5 862.0 993.0 C854.3 994.5 841.0 996.0 841.0 996.0 C841.0 996.0 844.5 988.3 846.0 986.0 C847.5 983.7 850.0 982.0 850.0 982.0 C850.0 982.0 841.3 980.2 835.0 980.0 C828.7 979.8 812.0 981.0 812.0 981.0 C812.0 981.0 815.7 973.7 817.0 971.0 C818.3 968.3 820.0 965.0 820.0 965.0 C820.0 965.0 807.2 964.5 800.0 964.0 C792.8 963.5 777.0 962.0 777.0 962.0 C777.0 962.0 781.3 953.3 783.0 950.0 C784.7 946.7 787.0 942.0 787.0 942.0 C787.0 942.0 775.5 942.3 770.0 942.0 C764.5 941.7 754.0 940.0 754.0 940.0 C754.0 940.0 758.5 930.0 762.0 925.0 C765.5 920.0 770.3 913.8 775.0 910.0 C779.7 906.2 777.5 903.7 790.0 902.0 C802.5 900.3 831.7 900.8 850.0 900.0 C868.3 899.2 881.7 900.0 900.0 897.0 C918.3 894.0 944.8 886.5 960.0 882.0 C975.2 877.5 990.2 875.3 991.0 870.0 C991.8 864.7 974.2 856.5 965.0 850.0 C955.8 843.5 936.0 831.0 936.0 831.0 Z" fill="none" stroke="#463079" stroke-width="12" filter="url(#b3)" opacity="0.9"/>
<path d="M936.0 831.0 C936.0 831.0 963.7 816.5 975.0 812.0 C986.3 807.5 990.3 802.5 1004.0 804.0 C1017.7 805.5 1042.2 814.7 1057.0 821.0 C1071.8 827.3 1080.8 837.5 1093.0 842.0 C1105.2 846.5 1118.8 847.5 1130.0 848.0 C1141.2 848.5 1151.0 844.3 1160.0 845.0 C1169.0 845.7 1184.0 852.0 1184.0 852.0 C1184.0 852.0 1171.5 867.7 1165.0 876.0 C1158.5 884.3 1151.0 893.8 1145.0 902.0 C1139.0 910.2 1141.5 918.3 1129.0 925.0 C1116.5 931.7 1089.2 937.0 1070.0 942.0 C1050.8 947.0 1031.5 949.0 1014.0 955.0 C996.5 961.0 977.3 972.2 965.0 978.0 C952.7 983.8 946.7 987.5 940.0 990.0 C933.3 992.5 930.7 990.3 925.0 993.0 C919.3 995.7 906.0 1006.0 906.0 1006.0 C906.0 1006.0 906.5 995.5 907.0 992.0 C907.5 988.5 909.0 985.0 909.0 985.0 C909.0 985.0 894.8 985.7 887.0 987.0 C879.2 988.3 869.7 991.5 862.0 993.0 C854.3 994.5 841.0 996.0 841.0 996.0 C841.0 996.0 844.5 988.3 846.0 986.0 C847.5 983.7 850.0 982.0 850.0 982.0 C850.0 982.0 841.3 980.2 835.0 980.0 C828.7 979.8 812.0 981.0 812.0 981.0 C812.0 981.0 815.7 973.7 817.0 971.0 C818.3 968.3 820.0 965.0 820.0 965.0 C820.0 965.0 807.2 964.5 800.0 964.0 C792.8 963.5 777.0 962.0 777.0 962.0 C777.0 962.0 781.3 953.3 783.0 950.0 C784.7 946.7 787.0 942.0 787.0 942.0 C787.0 942.0 775.5 942.3 770.0 942.0 C764.5 941.7 754.0 940.0 754.0 940.0 C754.0 940.0 758.5 930.0 762.0 925.0 C765.5 920.0 770.3 913.8 775.0 910.0 C779.7 906.2 777.5 903.7 790.0 902.0 C802.5 900.3 831.7 900.8 850.0 900.0 C868.3 899.2 881.7 900.0 900.0 897.0 C918.3 894.0 944.8 886.5 960.0 882.0 C975.2 877.5 990.2 875.3 991.0 870.0 C991.8 864.7 974.2 856.5 965.0 850.0 C955.8 843.5 936.0 831.0 936.0 831.0 Z" fill="none" stroke="url(#hat)" stroke-width="9" opacity="0.55" transform="translate(3 3)"/>
<path d="M775.0 912.0 C775.0 909.7 777.5 905.7 790.0 904.0 C802.5 902.3 830.8 902.8 850.0 902.0 C869.2 901.2 886.7 901.8 905.0 899.0 C923.3 896.2 945.0 889.3 960.0 885.0 C975.0 880.7 988.0 873.2 995.0 873.0 C1002.0 872.8 1007.8 879.5 1002.0 884.0 C996.2 888.5 977.0 895.3 960.0 900.0 C943.0 904.7 920.0 909.5 900.0 912.0 C880.0 914.5 858.3 914.0 840.0 915.0 C821.7 916.0 800.8 918.5 790.0 918.0 C779.2 917.5 775.0 914.3 775.0 912.0 Z" fill="#9c8468" opacity="0.95" filter="url(#b3)"/>
<path d="M1096.0 850.0 C1100.2 847.3 1121.8 850.0 1135.0 850.0 C1148.2 850.0 1172.5 847.0 1175.0 850.0 C1177.5 853.0 1160.8 865.3 1150.0 868.0 C1139.2 870.7 1119.0 869.0 1110.0 866.0 C1101.0 863.0 1091.8 852.7 1096.0 850.0 Z" fill="#9c8468" opacity="0.9" filter="url(#b3)"/>
<path d="M1000.0 832.0 C1005.8 829.3 1027.0 837.0 1040.0 842.0 C1053.0 847.0 1078.0 857.0 1078.0 862.0 C1078.0 867.0 1052.2 872.7 1040.0 872.0 C1027.8 871.3 1011.7 864.7 1005.0 858.0 C998.3 851.3 994.2 834.7 1000.0 832.0 Z" fill="#b29ae0" opacity="0.9" filter="url(#b4)"/>
<path d="M960.0 915.0 C970.0 908.3 1000.0 903.3 1020.0 900.0 C1040.0 896.7 1063.3 895.0 1080.0 895.0 C1096.7 895.0 1120.0 896.7 1120.0 900.0 C1120.0 903.3 1098.3 910.0 1080.0 915.0 C1061.7 920.0 1030.0 925.8 1010.0 930.0 C990.0 934.2 968.3 942.5 960.0 940.0 C951.7 937.5 950.0 921.7 960.0 915.0 Z" fill="#b29ae0" opacity="0.75" filter="url(#b4)"/>
<path d="M1040.0 880.0 C1046.7 876.7 1070.0 874.2 1080.0 875.0 C1090.0 875.8 1101.7 881.7 1100.0 885.0 C1098.3 888.3 1080.0 893.3 1070.0 895.0 C1060.0 896.7 1045.0 897.5 1040.0 895.0 C1035.0 892.5 1033.3 883.3 1040.0 880.0 Z" fill="#9c8468" opacity="0.6" filter="url(#b3)"/>
<path d="M960.0 962.0 C960.0 960.3 998.3 952.8 1020.0 947.0 C1041.7 941.2 1071.7 932.3 1090.0 927.0 C1108.3 921.7 1128.3 913.3 1130.0 915.0 C1131.7 916.7 1118.3 930.0 1100.0 937.0 C1081.7 944.0 1043.3 952.8 1020.0 957.0 C996.7 961.2 960.0 963.7 960.0 962.0 Z" fill="#5a3692" opacity="0.8" filter="url(#b3)"/>
</g>
<path d="M936.0 831.0 C936.0 831.0 963.7 816.5 975.0 812.0 C986.3 807.5 990.3 802.5 1004.0 804.0 C1017.7 805.5 1042.2 814.7 1057.0 821.0 C1071.8 827.3 1080.8 837.5 1093.0 842.0 C1105.2 846.5 1118.8 847.5 1130.0 848.0 C1141.2 848.5 1151.0 844.3 1160.0 845.0 C1169.0 845.7 1184.0 852.0 1184.0 852.0 C1184.0 852.0 1171.5 867.7 1165.0 876.0 C1158.5 884.3 1151.0 893.8 1145.0 902.0 C1139.0 910.2 1141.5 918.3 1129.0 925.0 C1116.5 931.7 1089.2 937.0 1070.0 942.0 C1050.8 947.0 1031.5 949.0 1014.0 955.0 C996.5 961.0 977.3 972.2 965.0 978.0 C952.7 983.8 946.7 987.5 940.0 990.0 C933.3 992.5 930.7 990.3 925.0 993.0 C919.3 995.7 906.0 1006.0 906.0 1006.0 C906.0 1006.0 906.5 995.5 907.0 992.0 C907.5 988.5 909.0 985.0 909.0 985.0 C909.0 985.0 894.8 985.7 887.0 987.0 C879.2 988.3 869.7 991.5 862.0 993.0 C854.3 994.5 841.0 996.0 841.0 996.0 C841.0 996.0 844.5 988.3 846.0 986.0 C847.5 983.7 850.0 982.0 850.0 982.0 C850.0 982.0 841.3 980.2 835.0 980.0 C828.7 979.8 812.0 981.0 812.0 981.0 C812.0 981.0 815.7 973.7 817.0 971.0 C818.3 968.3 820.0 965.0 820.0 965.0 C820.0 965.0 807.2 964.5 800.0 964.0 C792.8 963.5 777.0 962.0 777.0 962.0 C777.0 962.0 781.3 953.3 783.0 950.0 C784.7 946.7 787.0 942.0 787.0 942.0 C787.0 942.0 775.5 942.3 770.0 942.0 C764.5 941.7 754.0 940.0 754.0 940.0 C754.0 940.0 758.5 930.0 762.0 925.0 C765.5 920.0 770.3 913.8 775.0 910.0 C779.7 906.2 777.5 903.7 790.0 902.0 C802.5 900.3 831.7 900.8 850.0 900.0 C868.3 899.2 881.7 900.0 900.0 897.0 C918.3 894.0 944.8 886.5 960.0 882.0 C975.2 877.5 990.2 875.3 991.0 870.0 C991.8 864.7 974.2 856.5 965.0 850.0 C955.8 843.5 936.0 831.0 936.0 831.0 Z" fill="none" stroke="#1d0f1c" stroke-width="3" stroke-linejoin="round" stroke-linecap="round"/>
<path d="M787.0 942.0 C790.8 940.0 799.5 933.3 810.0 930.0 C820.5 926.7 835.0 924.0 850.0 922.0 C865.0 920.0 883.3 920.8 900.0 918.0 C916.7 915.2 933.3 909.7 950.0 905.0 C966.7 900.3 991.7 892.5 1000.0 890.0" fill="none" stroke="#1d0f1c" stroke-width="2" stroke-linecap="round" stroke-linejoin="round" />
<path d="M820.0 965.0 C824.2 962.5 834.2 954.2 845.0 950.0 C855.8 945.8 870.8 942.5 885.0 940.0 C899.2 937.5 914.2 938.3 930.0 935.0 C945.8 931.7 965.0 925.0 980.0 920.0 C995.0 915.0 1013.3 907.5 1020.0 905.0" fill="none" stroke="#1d0f1c" stroke-width="2" stroke-linecap="round" stroke-linejoin="round" />
<path d="M850.0 982.0 C853.7 979.2 862.8 969.5 872.0 965.0 C881.2 960.5 892.0 958.3 905.0 955.0 C918.0 951.7 934.2 949.2 950.0 945.0 C965.8 940.8 991.7 932.5 1000.0 930.0" fill="none" stroke="#1d0f1c" stroke-width="2" stroke-linecap="round" stroke-linejoin="round" />
<path d="M909.0 985.0 C911.7 982.5 918.2 973.8 925.0 970.0 C931.8 966.2 939.2 965.3 950.0 962.0 C960.8 958.7 983.3 952.0 990.0 950.0" fill="none" stroke="#1d0f1c" stroke-width="2" stroke-linecap="round" stroke-linejoin="round" />
<path d="M1008.0 872.0 C1011.7 873.3 1021.3 879.3 1030.0 880.0 C1038.7 880.7 1055.0 876.7 1060.0 876.0" fill="none" stroke="#1d0f1c" stroke-width="2" stroke-linecap="round" stroke-linejoin="round" />
<path d="M1093.0 842.0 C1094.2 845.0 1099.7 854.5 1100.0 860.0 C1100.3 865.5 1095.8 872.5 1095.0 875.0" fill="none" stroke="#1d0f1c" stroke-width="2" stroke-linecap="round" stroke-linejoin="round" />
<path d="M768.0 934.0 C766.7 932.8 773.7 928.5 778.0 927.0 C782.3 925.5 792.7 923.8 794.0 925.0 C795.3 926.2 790.3 932.5 786.0 934.0 C781.7 935.5 769.3 935.2 768.0 934.0 Z" fill="#cbb8ee" opacity="0.85" filter="url(#b2)"/>
<path d="M793.0 955.0 C791.7 953.8 798.7 949.5 803.0 948.0 C807.3 946.5 817.7 944.8 819.0 946.0 C820.3 947.2 815.3 953.5 811.0 955.0 C806.7 956.5 794.3 956.2 793.0 955.0 Z" fill="#cbb8ee" opacity="0.85" filter="url(#b2)"/>
<path d="M827.0 973.0 C825.7 971.8 832.7 967.5 837.0 966.0 C841.3 964.5 851.7 962.8 853.0 964.0 C854.3 965.2 849.3 971.5 845.0 973.0 C840.7 974.5 828.3 974.2 827.0 973.0 Z" fill="#cbb8ee" opacity="0.85" filter="url(#b2)"/>
<path d="M855.0 987.0 C853.7 985.8 860.7 981.5 865.0 980.0 C869.3 978.5 879.7 976.8 881.0 978.0 C882.3 979.2 877.3 985.5 873.0 987.0 C868.7 988.5 856.3 988.2 855.0 987.0 Z" fill="#cbb8ee" opacity="0.85" filter="url(#b2)"/>
<clipPath id="c3"><path d="M746.0 777.0 C745.3 771.2 758.7 765.3 766.0 760.0 C773.3 754.7 782.3 749.3 790.0 745.0 C797.7 740.7 804.3 734.5 812.0 734.0 C819.7 733.5 831.7 738.0 836.0 742.0 C840.3 746.0 841.5 752.5 838.0 758.0 C834.5 763.5 822.7 769.7 815.0 775.0 C807.3 780.3 799.5 786.7 792.0 790.0 C784.5 793.3 777.7 797.2 770.0 795.0 C762.3 792.8 746.7 782.8 746.0 777.0 Z"/></clipPath>
<path d="M746.0 777.0 C745.3 771.2 758.7 765.3 766.0 760.0 C773.3 754.7 782.3 749.3 790.0 745.0 C797.7 740.7 804.3 734.5 812.0 734.0 C819.7 733.5 831.7 738.0 836.0 742.0 C840.3 746.0 841.5 752.5 838.0 758.0 C834.5 763.5 822.7 769.7 815.0 775.0 C807.3 780.3 799.5 786.7 792.0 790.0 C784.5 793.3 777.7 797.2 770.0 795.0 C762.3 792.8 746.7 782.8 746.0 777.0 Z" fill="#8360b8"/>
<g clip-path="url(#c3)">
<path d="M746.0 777.0 C745.3 771.2 758.7 765.3 766.0 760.0 C773.3 754.7 782.3 749.3 790.0 745.0 C797.7 740.7 804.3 734.5 812.0 734.0 C819.7 733.5 831.7 738.0 836.0 742.0 C840.3 746.0 841.5 752.5 838.0 758.0 C834.5 763.5 822.7 769.7 815.0 775.0 C807.3 780.3 799.5 786.7 792.0 790.0 C784.5 793.3 777.7 797.2 770.0 795.0 C762.3 792.8 746.7 782.8 746.0 777.0 Z" fill="url(#mot)"/>
<path d="M746.0 777.0 C745.3 771.2 758.7 765.3 766.0 760.0 C773.3 754.7 782.3 749.3 790.0 745.0 C797.7 740.7 804.3 734.5 812.0 734.0 C819.7 733.5 831.7 738.0 836.0 742.0 C840.3 746.0 841.5 752.5 838.0 758.0 C834.5 763.5 822.7 769.7 815.0 775.0 C807.3 780.3 799.5 786.7 792.0 790.0 C784.5 793.3 777.7 797.2 770.0 795.0 C762.3 792.8 746.7 782.8 746.0 777.0 Z" fill="none" stroke="#463079" stroke-width="12" filter="url(#b3)" opacity="0.9"/>
<path d="M746.0 777.0 C745.3 771.2 758.7 765.3 766.0 760.0 C773.3 754.7 782.3 749.3 790.0 745.0 C797.7 740.7 804.3 734.5 812.0 734.0 C819.7 733.5 831.7 738.0 836.0 742.0 C840.3 746.0 841.5 752.5 838.0 758.0 C834.5 763.5 822.7 769.7 815.0 775.0 C807.3 780.3 799.5 786.7 792.0 790.0 C784.5 793.3 777.7 797.2 770.0 795.0 C762.3 792.8 746.7 782.8 746.0 777.0 Z" fill="none" stroke="url(#hat)" stroke-width="9" opacity="0.55" transform="translate(3 3)"/>
<path d="M760.0 772.0 C763.0 767.3 780.8 757.0 790.0 752.0 C799.2 747.0 813.3 740.7 815.0 742.0 C816.7 743.3 807.2 753.7 800.0 760.0 C792.8 766.3 778.7 778.0 772.0 780.0 C765.3 782.0 757.0 776.7 760.0 772.0 Z" fill="#b29ae0" opacity="0.85" filter="url(#b3)"/>
<path d="M800.0 770.0 C802.2 765.8 819.0 756.7 825.0 755.0 C831.0 753.3 838.2 755.8 836.0 760.0 C833.8 764.2 818.0 778.3 812.0 780.0 C806.0 781.7 797.8 774.2 800.0 770.0 Z" fill="#9c8468" opacity="0.7" filter="url(#b2)"/>
</g>
<path d="M746.0 777.0 C745.3 771.2 758.7 765.3 766.0 760.0 C773.3 754.7 782.3 749.3 790.0 745.0 C797.7 740.7 804.3 734.5 812.0 734.0 C819.7 733.5 831.7 738.0 836.0 742.0 C840.3 746.0 841.5 752.5 838.0 758.0 C834.5 763.5 822.7 769.7 815.0 775.0 C807.3 780.3 799.5 786.7 792.0 790.0 C784.5 793.3 777.7 797.2 770.0 795.0 C762.3 792.8 746.7 782.8 746.0 777.0 Z" fill="none" stroke="#1d0f1c" stroke-width="2.8" stroke-linejoin="round" stroke-linecap="round"/>
<clipPath id="c4"><path d="M745.0 780.0 C745.0 780.0 766.9 783.4 772.0 784.0 C777.1 784.6 791.0 782.6 796.0 786.0 C801.0 789.4 816.4 811.4 822.0 818.0 C827.6 824.6 849.7 847.6 852.0 852.0 C854.3 856.4 849.4 861.4 845.0 862.0 C840.6 862.6 813.9 861.6 808.0 858.0 C802.1 854.4 790.8 831.8 786.0 826.0 C781.2 820.2 764.1 804.6 760.0 800.0 C755.9 795.4 745.0 780.0 745.0 780.0 Z"/></clipPath>
<path d="M745.0 780.0 C745.0 780.0 766.9 783.4 772.0 784.0 C777.1 784.6 791.0 782.6 796.0 786.0 C801.0 789.4 816.4 811.4 822.0 818.0 C827.6 824.6 849.7 847.6 852.0 852.0 C854.3 856.4 849.4 861.4 845.0 862.0 C840.6 862.6 813.9 861.6 808.0 858.0 C802.1 854.4 790.8 831.8 786.0 826.0 C781.2 820.2 764.1 804.6 760.0 800.0 C755.9 795.4 745.0 780.0 745.0 780.0 Z" fill="#8360b8"/>
<g clip-path="url(#c4)">
<path d="M745.0 780.0 C745.0 780.0 766.9 783.4 772.0 784.0 C777.1 784.6 791.0 782.6 796.0 786.0 C801.0 789.4 816.4 811.4 822.0 818.0 C827.6 824.6 849.7 847.6 852.0 852.0 C854.3 856.4 849.4 861.4 845.0 862.0 C840.6 862.6 813.9 861.6 808.0 858.0 C802.1 854.4 790.8 831.8 786.0 826.0 C781.2 820.2 764.1 804.6 760.0 800.0 C755.9 795.4 745.0 780.0 745.0 780.0 Z" fill="url(#mot)"/>
<path d="M745.0 780.0 C745.0 780.0 766.9 783.4 772.0 784.0 C777.1 784.6 791.0 782.6 796.0 786.0 C801.0 789.4 816.4 811.4 822.0 818.0 C827.6 824.6 849.7 847.6 852.0 852.0 C854.3 856.4 849.4 861.4 845.0 862.0 C840.6 862.6 813.9 861.6 808.0 858.0 C802.1 854.4 790.8 831.8 786.0 826.0 C781.2 820.2 764.1 804.6 760.0 800.0 C755.9 795.4 745.0 780.0 745.0 780.0 Z" fill="none" stroke="#463079" stroke-width="12" filter="url(#b3)" opacity="0.9"/>
<path d="M745.0 780.0 C745.0 780.0 766.9 783.4 772.0 784.0 C777.1 784.6 791.0 782.6 796.0 786.0 C801.0 789.4 816.4 811.4 822.0 818.0 C827.6 824.6 849.7 847.6 852.0 852.0 C854.3 856.4 849.4 861.4 845.0 862.0 C840.6 862.6 813.9 861.6 808.0 858.0 C802.1 854.4 790.8 831.8 786.0 826.0 C781.2 820.2 764.1 804.6 760.0 800.0 C755.9 795.4 745.0 780.0 745.0 780.0 Z" fill="none" stroke="url(#hat)" stroke-width="9" opacity="0.55" transform="translate(3 3)"/>
<path d="M760.0 790.0 C758.7 786.7 773.3 788.3 782.0 795.0 C790.7 801.7 803.7 820.5 812.0 830.0 C820.3 839.5 831.5 849.5 832.0 852.0 C832.5 854.5 822.0 851.2 815.0 845.0 C808.0 838.8 799.2 824.2 790.0 815.0 C780.8 805.8 761.3 793.3 760.0 790.0 Z" fill="#b29ae0" opacity="0.85" filter="url(#b3)"/>
<path d="M800.0 796.0 C802.3 797.7 817.7 813.0 826.0 822.0 C834.3 831.0 848.0 846.7 850.0 850.0 C852.0 853.3 844.3 848.3 838.0 842.0 C831.7 835.7 818.3 819.7 812.0 812.0 C805.7 804.3 797.7 794.3 800.0 796.0 Z" fill="#9c8468" opacity="0.85" filter="url(#b2)"/>
</g>
<path d="M745.0 780.0 C745.0 780.0 766.9 783.4 772.0 784.0 C777.1 784.6 791.0 782.6 796.0 786.0 C801.0 789.4 816.4 811.4 822.0 818.0 C827.6 824.6 849.7 847.6 852.0 852.0 C854.3 856.4 849.4 861.4 845.0 862.0 C840.6 862.6 813.9 861.6 808.0 858.0 C802.1 854.4 790.8 831.8 786.0 826.0 C781.2 820.2 764.1 804.6 760.0 800.0 C755.9 795.4 745.0 780.0 745.0 780.0 Z" fill="none" stroke="#1d0f1c" stroke-width="2.8" stroke-linejoin="round" stroke-linecap="round"/>
<clipPath id="c5"><path d="M650.0 866.0 C655.5 863.7 668.3 859.5 675.0 858.0 C681.7 856.5 690.0 854.7 700.0 855.0 C710.0 855.3 736.0 859.7 750.0 860.0 C764.0 860.3 791.7 857.9 805.0 857.0 C818.3 856.1 841.3 852.3 850.0 853.0 C858.7 853.7 864.0 859.1 870.0 862.0 C876.0 864.9 895.0 875.0 895.0 875.0 C895.0 875.0 886.1 894.1 875.0 897.0 C863.9 899.9 825.3 895.3 812.0 897.0 C798.7 898.7 785.9 905.3 775.0 910.0 C764.1 914.7 738.7 929.7 730.0 932.0 C721.3 934.3 715.3 928.6 710.0 927.0 C704.7 925.4 696.0 918.8 690.0 920.0 C684.0 921.2 671.0 935.7 665.0 936.0 C659.0 936.3 650.3 924.1 645.0 922.0 C639.7 919.9 625.0 920.0 625.0 920.0 C625.0 920.0 632.0 905.0 632.0 905.0 C632.0 905.0 621.0 894.0 621.0 894.0 C621.0 894.0 640.0 882.0 640.0 882.0 C640.0 882.0 634.0 875.0 634.0 875.0 C634.0 875.0 644.5 868.3 650.0 866.0 Z"/></clipPath>
<path d="M650.0 866.0 C655.5 863.7 668.3 859.5 675.0 858.0 C681.7 856.5 690.0 854.7 700.0 855.0 C710.0 855.3 736.0 859.7 750.0 860.0 C764.0 860.3 791.7 857.9 805.0 857.0 C818.3 856.1 841.3 852.3 850.0 853.0 C858.7 853.7 864.0 859.1 870.0 862.0 C876.0 864.9 895.0 875.0 895.0 875.0 C895.0 875.0 886.1 894.1 875.0 897.0 C863.9 899.9 825.3 895.3 812.0 897.0 C798.7 898.7 785.9 905.3 775.0 910.0 C764.1 914.7 738.7 929.7 730.0 932.0 C721.3 934.3 715.3 928.6 710.0 927.0 C704.7 925.4 696.0 918.8 690.0 920.0 C684.0 921.2 671.0 935.7 665.0 936.0 C659.0 936.3 650.3 924.1 645.0 922.0 C639.7 919.9 625.0 920.0 625.0 920.0 C625.0 920.0 632.0 905.0 632.0 905.0 C632.0 905.0 621.0 894.0 621.0 894.0 C621.0 894.0 640.0 882.0 640.0 882.0 C640.0 882.0 634.0 875.0 634.0 875.0 C634.0 875.0 644.5 868.3 650.0 866.0 Z" fill="#8360b8"/>
<g clip-path="url(#c5)">
<path d="M650.0 866.0 C655.5 863.7 668.3 859.5 675.0 858.0 C681.7 856.5 690.0 854.7 700.0 855.0 C710.0 855.3 736.0 859.7 750.0 860.0 C764.0 860.3 791.7 857.9 805.0 857.0 C818.3 856.1 841.3 852.3 850.0 853.0 C858.7 853.7 864.0 859.1 870.0 862.0 C876.0 864.9 895.0 875.0 895.0 875.0 C895.0 875.0 886.1 894.1 875.0 897.0 C863.9 899.9 825.3 895.3 812.0 897.0 C798.7 898.7 785.9 905.3 775.0 910.0 C764.1 914.7 738.7 929.7 730.0 932.0 C721.3 934.3 715.3 928.6 710.0 927.0 C704.7 925.4 696.0 918.8 690.0 920.0 C684.0 921.2 671.0 935.7 665.0 936.0 C659.0 936.3 650.3 924.1 645.0 922.0 C639.7 919.9 625.0 920.0 625.0 920.0 C625.0 920.0 632.0 905.0 632.0 905.0 C632.0 905.0 621.0 894.0 621.0 894.0 C621.0 894.0 640.0 882.0 640.0 882.0 C640.0 882.0 634.0 875.0 634.0 875.0 C634.0 875.0 644.5 868.3 650.0 866.0 Z" fill="url(#mot)"/>
<path d="M650.0 866.0 C655.5 863.7 668.3 859.5 675.0 858.0 C681.7 856.5 690.0 854.7 700.0 855.0 C710.0 855.3 736.0 859.7 750.0 860.0 C764.0 860.3 791.7 857.9 805.0 857.0 C818.3 856.1 841.3 852.3 850.0 853.0 C858.7 853.7 864.0 859.1 870.0 862.0 C876.0 864.9 895.0 875.0 895.0 875.0 C895.0 875.0 886.1 894.1 875.0 897.0 C863.9 899.9 825.3 895.3 812.0 897.0 C798.7 898.7 785.9 905.3 775.0 910.0 C764.1 914.7 738.7 929.7 730.0 932.0 C721.3 934.3 715.3 928.6 710.0 927.0 C704.7 925.4 696.0 918.8 690.0 920.0 C684.0 921.2 671.0 935.7 665.0 936.0 C659.0 936.3 650.3 924.1 645.0 922.0 C639.7 919.9 625.0 920.0 625.0 920.0 C625.0 920.0 632.0 905.0 632.0 905.0 C632.0 905.0 621.0 894.0 621.0 894.0 C621.0 894.0 640.0 882.0 640.0 882.0 C640.0 882.0 634.0 875.0 634.0 875.0 C634.0 875.0 644.5 868.3 650.0 866.0 Z" fill="none" stroke="#463079" stroke-width="10" filter="url(#b3)" opacity="0.9"/>
<path d="M650.0 866.0 C655.5 863.7 668.3 859.5 675.0 858.0 C681.7 856.5 690.0 854.7 700.0 855.0 C710.0 855.3 736.0 859.7 750.0 860.0 C764.0 860.3 791.7 857.9 805.0 857.0 C818.3 856.1 841.3 852.3 850.0 853.0 C858.7 853.7 864.0 859.1 870.0 862.0 C876.0 864.9 895.0 875.0 895.0 875.0 C895.0 875.0 886.1 894.1 875.0 897.0 C863.9 899.9 825.3 895.3 812.0 897.0 C798.7 898.7 785.9 905.3 775.0 910.0 C764.1 914.7 738.7 929.7 730.0 932.0 C721.3 934.3 715.3 928.6 710.0 927.0 C704.7 925.4 696.0 918.8 690.0 920.0 C684.0 921.2 671.0 935.7 665.0 936.0 C659.0 936.3 650.3 924.1 645.0 922.0 C639.7 919.9 625.0 920.0 625.0 920.0 C625.0 920.0 632.0 905.0 632.0 905.0 C632.0 905.0 621.0 894.0 621.0 894.0 C621.0 894.0 640.0 882.0 640.0 882.0 C640.0 882.0 634.0 875.0 634.0 875.0 C634.0 875.0 644.5 868.3 650.0 866.0 Z" fill="none" stroke="url(#hat)" stroke-width="9" opacity="0.55" transform="translate(3 3)"/>
<path d="M655.0 866.0 C662.5 863.0 684.2 858.7 700.0 858.0 C715.8 857.3 732.0 861.7 750.0 862.0 C768.0 862.3 801.3 858.3 808.0 860.0 C814.7 861.7 801.3 869.5 790.0 872.0 C778.7 874.5 756.7 874.5 740.0 875.0 C723.3 875.5 704.2 874.8 690.0 875.0 C675.8 875.2 660.8 877.5 655.0 876.0 C649.2 874.5 647.5 869.0 655.0 866.0 Z" fill="#9c8468" opacity="0.95" filter="url(#b3)"/>
<path d="M700.0 895.0 C708.3 890.8 740.0 888.3 760.0 885.0 C780.0 881.7 803.3 877.2 820.0 875.0 C836.7 872.8 860.0 869.8 860.0 872.0 C860.0 874.2 836.7 883.3 820.0 888.0 C803.3 892.7 778.3 896.3 760.0 900.0 C741.7 903.7 720.0 910.8 710.0 910.0 C700.0 909.2 691.7 899.2 700.0 895.0 Z" fill="#b29ae0" opacity="0.85" filter="url(#b3)"/>
<path d="M640.0 905.0 C641.7 901.7 661.7 899.2 670.0 900.0 C678.3 900.8 691.7 906.7 690.0 910.0 C688.3 913.3 668.3 920.8 660.0 920.0 C651.7 919.2 638.3 908.3 640.0 905.0 Z" fill="#cbb8ee" opacity="0.8" filter="url(#b2)"/>
</g>
<path d="M650.0 866.0 C655.5 863.7 668.3 859.5 675.0 858.0 C681.7 856.5 690.0 854.7 700.0 855.0 C710.0 855.3 736.0 859.7 750.0 860.0 C764.0 860.3 791.7 857.9 805.0 857.0 C818.3 856.1 841.3 852.3 850.0 853.0 C858.7 853.7 864.0 859.1 870.0 862.0 C876.0 864.9 895.0 875.0 895.0 875.0 C895.0 875.0 886.1 894.1 875.0 897.0 C863.9 899.9 825.3 895.3 812.0 897.0 C798.7 898.7 785.9 905.3 775.0 910.0 C764.1 914.7 738.7 929.7 730.0 932.0 C721.3 934.3 715.3 928.6 710.0 927.0 C704.7 925.4 696.0 918.8 690.0 920.0 C684.0 921.2 671.0 935.7 665.0 936.0 C659.0 936.3 650.3 924.1 645.0 922.0 C639.7 919.9 625.0 920.0 625.0 920.0 C625.0 920.0 632.0 905.0 632.0 905.0 C632.0 905.0 621.0 894.0 621.0 894.0 C621.0 894.0 640.0 882.0 640.0 882.0 C640.0 882.0 634.0 875.0 634.0 875.0 C634.0 875.0 644.5 868.3 650.0 866.0 Z" fill="none" stroke="#1d0f1c" stroke-width="3" stroke-linejoin="round" stroke-linecap="round"/>
<path d="M640.0 880.0 C648.3 880.3 673.3 882.0 690.0 882.0 C706.7 882.0 721.7 882.3 740.0 880.0 C758.3 877.7 790.0 870.0 800.0 868.0" fill="none" stroke="#1d0f1c" stroke-width="1.8" stroke-linecap="round" stroke-linejoin="round" />
<path d="M628.0 896.0 C636.7 896.0 662.2 896.5 680.0 896.0 C697.8 895.5 716.7 895.3 735.0 893.0 C753.3 890.7 780.8 883.8 790.0 882.0" fill="none" stroke="#1d0f1c" stroke-width="1.8" stroke-linecap="round" stroke-linejoin="round" />
<path d="M640.0 912.0 C648.3 910.8 673.3 906.7 690.0 905.0 C706.7 903.3 731.7 902.5 740.0 902.0" fill="none" stroke="#1d0f1c" stroke-width="1.8" stroke-linecap="round" stroke-linejoin="round" />
<path d="M850.0 853.0 C850.3 856.2 852.7 867.5 852.0 872.0 C851.3 876.5 847.0 878.7 846.0 880.0" fill="none" stroke="#1d0f1c" stroke-width="2" stroke-linecap="round" stroke-linejoin="round" />
<path d="M1082.0 396.0 C1083.3 391.3 1088.7 372.7 1090.0 368.0" fill="none" stroke="#1d0f1c" stroke-width="6.6" stroke-linecap="round" stroke-linejoin="round" />
<path d="M1082.0 396.0 C1083.3 391.3 1088.7 372.7 1090.0 368.0" fill="none" stroke="#8a7c6a" stroke-width="4" stroke-linecap="round" stroke-linejoin="round" />
<path d="M1112.0 428.0 C1115.0 424.7 1127.0 411.3 1130.0 408.0" fill="none" stroke="#1d0f1c" stroke-width="6.6" stroke-linecap="round" stroke-linejoin="round" />
<path d="M1112.0 428.0 C1115.0 424.7 1127.0 411.3 1130.0 408.0" fill="none" stroke="#8a7c6a" stroke-width="4" stroke-linecap="round" stroke-linejoin="round" />
<path d="M1132.0 478.0 C1134.3 476.7 1143.7 471.3 1146.0 470.0" fill="none" stroke="#1d0f1c" stroke-width="6.6" stroke-linecap="round" stroke-linejoin="round" />
<path d="M1132.0 478.0 C1134.3 476.7 1143.7 471.3 1146.0 470.0" fill="none" stroke="#8a7c6a" stroke-width="4" stroke-linecap="round" stroke-linejoin="round" />
<path d="M1140.0 488.0 C1143.0 487.0 1155.0 483.0 1158.0 482.0" fill="none" stroke="#1d0f1c" stroke-width="6.1" stroke-linecap="round" stroke-linejoin="round" />
<path d="M1140.0 488.0 C1143.0 487.0 1155.0 483.0 1158.0 482.0" fill="none" stroke="#b9a8d8" stroke-width="3.5" stroke-linecap="round" stroke-linejoin="round" />
<ellipse cx="1158" cy="482" rx="3.15" ry="2.1" transform="rotate(0 1158 482)" fill="#e8d85a" stroke="#1d0f1c" stroke-width="1.4" />
<path d="M1150.0 520.0 C1153.7 519.3 1168.3 516.7 1172.0 516.0" fill="none" stroke="#1d0f1c" stroke-width="6.1" stroke-linecap="round" stroke-linejoin="round" />
<path d="M1150.0 520.0 C1153.7 519.3 1168.3 516.7 1172.0 516.0" fill="none" stroke="#9a7cc0" stroke-width="3.5" stroke-linecap="round" stroke-linejoin="round" />
<path d="M1148.0 572.0 C1151.3 573.7 1164.7 580.3 1168.0 582.0" fill="none" stroke="#1d0f1c" stroke-width="6.1" stroke-linecap="round" stroke-linejoin="round" />
<path d="M1148.0 572.0 C1151.3 573.7 1164.7 580.3 1168.0 582.0" fill="none" stroke="#d8c95a" stroke-width="3.5" stroke-linecap="round" stroke-linejoin="round" />
<path d="M1150.0 596.0 C1152.7 598.7 1163.3 609.3 1166.0 612.0" fill="none" stroke="#1d0f1c" stroke-width="6.6" stroke-linecap="round" stroke-linejoin="round" />
<path d="M1150.0 596.0 C1152.7 598.7 1163.3 609.3 1166.0 612.0" fill="none" stroke="#a888d0" stroke-width="4" stroke-linecap="round" stroke-linejoin="round" />
<ellipse cx="1166" cy="612" rx="3.6" ry="2.4" transform="rotate(0 1166 612)" fill="#f0c04a" stroke="#1d0f1c" stroke-width="1.4" />
<linearGradient id="sg1" gradientUnits="userSpaceOnUse" x1="1085.0" y1="402.0" x2="1116.0" y2="346.0"><stop offset="0" stop-color="#8360b8"/><stop offset="0.40" stop-color="#a888d0"/><stop offset="0.66" stop-color="#e8b74a"/><stop offset="1" stop-color="#f3e45a"/></linearGradient>
<path d="M1088.5 403.9 Q1098.0 385.0 1107.7 366.1 C1112.7 357.7 1129.8 358.0 1132.7 352.7 L1099.3 339.3 C1096.4 344.5 1107.8 355.1 1103.4 363.7 Q1092.6 381.9 1081.5 400.1" fill="url(#sg1)" stroke="#1d0f1c" stroke-width="2.4" stroke-linejoin="round" stroke-linecap="round"/>
<path d="M1088.7 395.3 Q1095.3 383.4 1105.5 364.9" fill="none" stroke="#d8c2f0" stroke-width="1.5" stroke-linecap="round" opacity="0.8"/>
<ellipse cx="1116" cy="346" rx="18" ry="7" transform="rotate(22 1116 346)" fill="#f4ec62" stroke="#1d0f1c" stroke-width="2.6" />
<ellipse cx="1113" cy="343" rx="11" ry="3.2" transform="rotate(22 1113 343)" fill="none" stroke="#1d0f1c" stroke-width="1.3" />
<linearGradient id="sg2" gradientUnits="userSpaceOnUse" x1="1098.0" y1="416.0" x2="1171.0" y2="352.0"><stop offset="0" stop-color="#8360b8"/><stop offset="0.31" stop-color="#b48ad6"/><stop offset="0.52" stop-color="#f0a23a"/><stop offset="1" stop-color="#f5d850"/></linearGradient>
<path d="M1101.6 420.1 Q1119.9 402.6 1138.3 385.3 C1154.3 371.8 1167.7 390.9 1177.4 382.3 L1164.6 321.7 C1154.8 330.3 1149.2 366.0 1133.7 380.0 Q1114.2 396.1 1094.4 411.9" fill="url(#sg2)" stroke="#1d0f1c" stroke-width="2.4" stroke-linejoin="round" stroke-linecap="round"/>
<path d="M1106.8 408.3 Q1117.0 399.3 1136.0 382.7" fill="none" stroke="#d8c2f0" stroke-width="2.1" stroke-linecap="round" opacity="0.8"/>
<ellipse cx="1171" cy="352" rx="31" ry="21" transform="rotate(78 1171 352)" fill="#f4ec62" stroke="#1d0f1c" stroke-width="2.6" />
<ellipse cx="1172.8948844046965" cy="350.3387314808141" rx="23.56" ry="14.7" transform="rotate(78 1172.8948844046965 350.3387314808141)" fill="#f4ec62" stroke="#1d0f1c" stroke-width="1.7999999999999998" />
<linearGradient id="sg3" gradientUnits="userSpaceOnUse" x1="1112.0" y1="434.0" x2="1169.0" y2="412.0"><stop offset="0" stop-color="#8360b8"/><stop offset="0.33" stop-color="#c0a0e0"/><stop offset="0.55" stop-color="#f2b33e"/><stop offset="1" stop-color="#f6d94e"/></linearGradient>
<path d="M1113.3 437.3 Q1128.8 430.6 1144.4 424.2 C1156.0 420.0 1168.4 434.7 1175.5 432.0 L1162.5 392.0 C1155.4 394.8 1154.0 414.8 1142.6 419.5 Q1126.7 425.2 1110.7 430.7" fill="url(#sg3)" stroke="#1d0f1c" stroke-width="2.4" stroke-linejoin="round" stroke-linecap="round"/>
<path d="M1118.8 431.4 Q1127.8 427.9 1143.5 421.8" fill="none" stroke="#d8c2f0" stroke-width="1.5" stroke-linecap="round" opacity="0.8"/>
<ellipse cx="1169" cy="412" rx="21" ry="9" transform="rotate(72 1169 412)" fill="#f4ec62" stroke="#1d0f1c" stroke-width="2.6" />
<ellipse cx="1170.007556980446" cy="411.61111835842433" rx="15.96" ry="6.3" transform="rotate(72 1170.007556980446 411.61111835842433)" fill="#f4ec62" stroke="#1d0f1c" stroke-width="1.7999999999999998" />
<linearGradient id="sg4" gradientUnits="userSpaceOnUse" x1="1135.0" y1="468.0" x2="1214.0" y2="437.0"><stop offset="0" stop-color="#8360b8"/><stop offset="0.34" stop-color="#b48ad6"/><stop offset="0.56" stop-color="#f2a93a"/><stop offset="1" stop-color="#f4e25a"/></linearGradient>
<path d="M1136.5 471.7 Q1158.4 462.5 1180.5 453.4 C1196.2 447.5 1210.7 471.1 1220.4 467.3 L1207.6 406.7 C1197.9 410.5 1193.7 441.4 1178.3 447.8 Q1155.9 456.1 1133.5 464.3" fill="url(#sg4)" stroke="#1d0f1c" stroke-width="2.4" stroke-linejoin="round" stroke-linecap="round"/>
<path d="M1144.5 464.3 Q1157.2 459.3 1179.4 450.6" fill="none" stroke="#d8c2f0" stroke-width="1.8" stroke-linecap="round" opacity="0.8"/>
<ellipse cx="1214" cy="437" rx="31" ry="9" transform="rotate(78 1214 437)" fill="#f4ec62" stroke="#1d0f1c" stroke-width="2.6" />
<ellipse cx="1215.0053662183457" cy="436.60548920545926" rx="23.56" ry="6.3" transform="rotate(78 1215.0053662183457 436.60548920545926)" fill="#f4ec62" stroke="#1d0f1c" stroke-width="1.7999999999999998" />
<linearGradient id="sg5" gradientUnits="userSpaceOnUse" x1="1100.0" y1="507.0" x2="1236.0" y2="501.0"><stop offset="0" stop-color="#8360b8"/><stop offset="0.39" stop-color="#b48ad6"/><stop offset="0.65" stop-color="#f0a23a"/><stop offset="1" stop-color="#f5d850"/></linearGradient>
<path d="M1100.2 511.5 Q1144.3 509.0 1188.4 506.6 C1209.9 506.0 1226.1 534.4 1239.4 533.8 L1232.6 468.2 C1219.2 468.8 1209.5 498.3 1188.0 499.6 Q1143.9 501.2 1099.8 502.5" fill="url(#sg5)" stroke="#1d0f1c" stroke-width="2.4" stroke-linejoin="round" stroke-linecap="round"/>
<path d="M1116.3 506.3 Q1144.1 505.1 1188.2 503.1" fill="none" stroke="#d8c2f0" stroke-width="2.1" stroke-linecap="round" opacity="0.8"/>
<ellipse cx="1236" cy="501" rx="33" ry="18" transform="rotate(84 1236 501)" fill="#f29e38" stroke="#1d0f1c" stroke-width="2.6" />
<ellipse cx="1238.1579009874652" cy="500.90479848584715" rx="25.080000000000002" ry="12.6" transform="rotate(84 1238.1579009874652 500.90479848584715)" fill="#f4e45c" stroke="#1d0f1c" stroke-width="1.7999999999999998" />
<linearGradient id="sg6" gradientUnits="userSpaceOnUse" x1="1145.0" y1="535.0" x2="1187.0" y2="538.0"><stop offset="0" stop-color="#c9a0c0"/><stop offset="0.29" stop-color="#e8b0a0"/><stop offset="0.48" stop-color="#f2c44a"/><stop offset="1" stop-color="#f5e055"/></linearGradient>
<path d="M1144.8 538.0 Q1154.8 538.4 1164.9 538.9 C1174.7 539.9 1182.3 557.5 1188.4 558.0 L1185.6 518.0 C1179.5 517.6 1175.1 534.4 1165.2 533.9 Q1155.2 533.0 1145.2 532.0" fill="url(#sg6)" stroke="#1d0f1c" stroke-width="2.4" stroke-linejoin="round" stroke-linecap="round"/>
<path d="M1150.0 535.4 Q1155.0 535.7 1165.1 536.4" fill="none" stroke="#d8c2f0" stroke-width="1.5" stroke-linecap="round" opacity="0.8"/>
<ellipse cx="1187" cy="538" rx="20" ry="8" transform="rotate(86 1187 538)" fill="#f4ec62" stroke="#1d0f1c" stroke-width="2.6" />
<ellipse cx="1187.9575603518374" cy="538.0683971679883" rx="15.2" ry="5.6" transform="rotate(86 1187.9575603518374 538.0683971679883)" fill="#f4ec62" stroke="#1d0f1c" stroke-width="1.7999999999999998" />
<linearGradient id="sg7" gradientUnits="userSpaceOnUse" x1="1143.0" y1="560.0" x2="1227.0" y2="607.0"><stop offset="0" stop-color="#8360b8"/><stop offset="0.34" stop-color="#b48ad6"/><stop offset="0.56" stop-color="#f0a23a"/><stop offset="1" stop-color="#f5d850"/></linearGradient>
<path d="M1140.8 563.9 Q1164.8 576.6 1188.6 589.5 C1205.0 599.1 1203.6 626.0 1213.9 631.7 L1240.1 582.3 C1229.9 576.5 1208.7 592.4 1192.1 583.4 Q1168.6 569.8 1145.2 556.1" fill="url(#sg7)" stroke="#1d0f1c" stroke-width="2.4" stroke-linejoin="round" stroke-linecap="round"/>
<path d="M1153.1 565.6 Q1166.7 573.2 1190.3 586.5" fill="none" stroke="#d8c2f0" stroke-width="2.1" stroke-linecap="round" opacity="0.8"/>
<ellipse cx="1227" cy="607" rx="28" ry="21" transform="rotate(118 1227 607)" fill="#f2a83a" stroke="#1d0f1c" stroke-width="2.6" />
<ellipse cx="1229.1991614552628" cy="608.2304831952066" rx="21.28" ry="14.7" transform="rotate(118 1229.1991614552628 608.2304831952066)" fill="#f4e45c" stroke="#1d0f1c" stroke-width="1.7999999999999998" />
<linearGradient id="sg8" gradientUnits="userSpaceOnUse" x1="1158.0" y1="662.0" x2="1181.0" y2="703.0"><stop offset="0" stop-color="#a888d0"/><stop offset="0.27" stop-color="#e3a03a"/><stop offset="0.44" stop-color="#f2b13c"/><stop offset="1" stop-color="#f4d44c"/></linearGradient>
<path d="M1151.0 665.9 Q1156.9 674.6 1162.6 683.4 C1167.7 694.0 1152.8 712.0 1156.4 718.4 L1205.6 687.6 C1202.0 681.3 1180.2 687.0 1173.9 677.1 Q1169.3 667.6 1165.0 658.1" fill="url(#sg8)" stroke="#1d0f1c" stroke-width="2.4" stroke-linejoin="round" stroke-linecap="round"/>
<path d="M1160.8 666.9 Q1163.1 671.1 1168.2 680.2" fill="none" stroke="#d8c2f0" stroke-width="3.9" stroke-linecap="round" opacity="0.8"/>
<ellipse cx="1181" cy="703" rx="29" ry="17" transform="rotate(-32 1181 703)" fill="#f29e38" stroke="#1d0f1c" stroke-width="2.6" />
<ellipse cx="1181.9980719875377" cy="704.7791718038718" rx="22.04" ry="11.899999999999999" transform="rotate(-32 1181.9980719875377 704.7791718038718)" fill="#f4e85c" stroke="#1d0f1c" stroke-width="1.7999999999999998" />
<linearGradient id="sg9" gradientUnits="userSpaceOnUse" x1="1133.0" y1="676.0" x2="1138.0" y2="697.0"><stop offset="0" stop-color="#d8c95a"/><stop offset="0.33" stop-color="#d8c95a"/><stop offset="0.56" stop-color="#e8d75a"/><stop offset="1" stop-color="#f0e060"/></linearGradient>
<path d="M1131.1 676.5 Q1132.7 682.2 1134.3 688.0 C1135.2 692.2 1129.9 691.6 1130.5 694.3 L1145.5 699.7 C1144.9 697.1 1138.4 691.5 1137.2 687.3 Q1136.0 681.4 1134.9 675.5" fill="url(#sg9)" stroke="#1d0f1c" stroke-width="1.8" stroke-linejoin="round" stroke-linecap="round"/>
<path d="M1133.6 678.5 Q1134.4 681.8 1135.8 687.7" fill="none" stroke="#d8c2f0" stroke-width="1.2" stroke-linecap="round" opacity="0.8"/>
<ellipse cx="1138" cy="697" rx="8" ry="4.5" transform="rotate(20 1138 697)" fill="#f4ec62" stroke="#1d0f1c" stroke-width="2.0" />
<linearGradient id="sg10" gradientUnits="userSpaceOnUse" x1="782.0" y1="462.0" x2="722.0" y2="467.0"><stop offset="0" stop-color="#8360b8"/><stop offset="0.30" stop-color="#b48ad6"/><stop offset="0.50" stop-color="#f0a23a"/><stop offset="1" stop-color="#f5d850"/></linearGradient>
<path d="M781.6 457.5 Q766.6 459.4 751.5 461.0 C738.1 461.8 727.1 443.5 718.8 444.2 L725.2 489.8 C733.5 489.1 738.7 469.5 752.1 468.0 Q767.2 467.1 782.4 466.5" fill="url(#sg10)" stroke="#1d0f1c" stroke-width="2.4" stroke-linejoin="round" stroke-linecap="round"/>
<path d="M774.8 462.6 Q766.9 463.3 751.8 464.5" fill="none" stroke="#d8c2f0" stroke-width="2.1" stroke-linecap="round" opacity="0.8"/>
<ellipse cx="722" cy="467" rx="23" ry="12" transform="rotate(82 722 467)" fill="#f4ec62" stroke="#1d0f1c" stroke-width="2.6" />
<ellipse cx="720.5649741081273" cy="467.1195854909894" rx="17.48" ry="8.399999999999999" transform="rotate(82 720.5649741081273 467.1195854909894)" fill="#f4ec62" stroke="#1d0f1c" stroke-width="1.7999999999999998" />
<linearGradient id="sg11" gradientUnits="userSpaceOnUse" x1="792.0" y1="528.0" x2="760.0" y2="535.0"><stop offset="0" stop-color="#b48ad6"/><stop offset="0.19" stop-color="#e8a0a0"/><stop offset="0.31" stop-color="#f2983a"/><stop offset="1" stop-color="#f5c84a"/></linearGradient>
<path d="M791.0 523.6 Q786.2 525.3 781.2 526.8 C771.3 528.6 763.5 508.8 757.4 510.1 L762.6 559.9 C768.8 558.5 772.9 536.1 782.7 533.6 Q787.8 532.9 793.0 532.4" fill="url(#sg11)" stroke="#1d0f1c" stroke-width="2.4" stroke-linejoin="round" stroke-linecap="round"/>
<path d="M788.2 528.8 Q787.0 529.1 782.0 530.2" fill="none" stroke="#d8c2f0" stroke-width="2.1" stroke-linecap="round" opacity="0.8"/>
<ellipse cx="760" cy="535" rx="25" ry="10" transform="rotate(84 760 535)" fill="#f4ec62" stroke="#1d0f1c" stroke-width="2.6" />
<ellipse cx="758.8277199791245" cy="535.2564362545666" rx="19.0" ry="7.0" transform="rotate(84 758.8277199791245 535.2564362545666)" fill="#f4ec62" stroke="#1d0f1c" stroke-width="1.7999999999999998" />
<linearGradient id="sg12" gradientUnits="userSpaceOnUse" x1="802.0" y1="592.0" x2="765.0" y2="611.0"><stop offset="0" stop-color="#b48ad6"/><stop offset="0.24" stop-color="#e8a0a0"/><stop offset="0.40" stop-color="#f2983a"/><stop offset="1" stop-color="#f5c84a"/></linearGradient>
<path d="M800.2 588.4 Q793.1 592.8 785.9 596.9 C775.7 601.8 766.9 583.2 760.7 586.4 L769.3 635.6 C775.6 632.4 778.7 607.7 788.6 602.2 Q796.2 598.8 803.8 595.6" fill="url(#sg12)" stroke="#1d0f1c" stroke-width="2.4" stroke-linejoin="round" stroke-linecap="round"/>
<path d="M797.6 594.3 Q794.6 595.8 787.2 599.6" fill="none" stroke="#d8c2f0" stroke-width="1.8" stroke-linecap="round" opacity="0.8"/>
<ellipse cx="765" cy="611" rx="25" ry="11" transform="rotate(80 765 611)" fill="#f4ec62" stroke="#1d0f1c" stroke-width="2.6" />
<ellipse cx="763.8257715360505" cy="611.6029821841903" rx="19.0" ry="7.699999999999999" transform="rotate(80 763.8257715360505 611.6029821841903)" fill="#f4ec62" stroke="#1d0f1c" stroke-width="1.7999999999999998" />
<ellipse cx="777" cy="511" rx="5" ry="3.5" transform="rotate(30 777 511)" fill="#ddd25a" stroke="#1d0f1c" stroke-width="1.6" />
<ellipse cx="772" cy="572" rx="5" ry="3.5" transform="rotate(30 772 572)" fill="#ddd25a" stroke="#1d0f1c" stroke-width="1.6" />
<ellipse cx="790" cy="631" rx="5" ry="3.5" transform="rotate(30 790 631)" fill="#ddd25a" stroke="#1d0f1c" stroke-width="1.6" />
<ellipse cx="760" cy="488" rx="4" ry="2.8" transform="rotate(30 760 488)" fill="#ddd25a" stroke="#1d0f1c" stroke-width="1.6" />
<path d="M790.0 452.0 C783.7 451.2 758.3 447.8 752.0 447.0" fill="none" stroke="#1d0f1c" stroke-width="6.6" stroke-linecap="round" stroke-linejoin="round" />
<path d="M790.0 452.0 C783.7 451.2 758.3 447.8 752.0 447.0" fill="none" stroke="#7a5aa8" stroke-width="4" stroke-linecap="round" stroke-linejoin="round" />
<path d="M792.0 470.0 C786.7 473.7 765.3 488.3 760.0 492.0" fill="none" stroke="#1d0f1c" stroke-width="5.6" stroke-linecap="round" stroke-linejoin="round" />
<path d="M792.0 470.0 C786.7 473.7 765.3 488.3 760.0 492.0" fill="none" stroke="#8a7c6a" stroke-width="3" stroke-linecap="round" stroke-linejoin="round" />
<clipPath id="c6"><path d="M772.0 478.0 C775.3 470.7 778.7 460.3 790.0 452.0 C801.3 443.7 818.3 436.3 840.0 428.0 C861.7 419.7 893.3 408.7 920.0 402.0 C946.7 395.3 978.3 389.7 1000.0 388.0 C1021.7 386.3 1035.7 388.7 1050.0 392.0 C1064.3 395.3 1077.0 401.3 1086.0 408.0 C1095.0 414.7 1099.5 422.3 1104.0 432.0 C1108.5 441.7 1110.7 453.8 1113.0 466.0 C1115.3 478.2 1116.5 491.3 1118.0 505.0 C1119.5 518.7 1122.0 534.7 1122.0 548.0 C1122.0 561.3 1121.7 572.7 1118.0 585.0 C1114.3 597.3 1107.2 609.8 1100.0 622.0 C1092.8 634.2 1085.0 647.0 1075.0 658.0 C1065.0 669.0 1054.2 679.7 1040.0 688.0 C1025.8 696.3 1006.7 702.3 990.0 708.0 C973.3 713.7 956.7 717.7 940.0 722.0 C923.3 726.3 906.3 732.7 890.0 734.0 C873.7 735.3 856.0 733.7 842.0 730.0 C828.0 726.3 815.7 718.0 806.0 712.0 C796.3 706.0 787.7 702.0 784.0 694.0 C780.3 686.0 781.3 674.3 784.0 664.0 C786.7 653.7 799.0 642.0 800.0 632.0 C801.0 622.0 793.2 616.0 790.0 604.0 C786.8 592.0 782.5 573.3 781.0 560.0 C779.5 546.7 782.8 534.7 781.0 524.0 C779.2 513.3 771.5 503.7 770.0 496.0 C768.5 488.3 768.7 485.3 772.0 478.0 Z"/></clipPath>
<path d="M772.0 478.0 C775.3 470.7 778.7 460.3 790.0 452.0 C801.3 443.7 818.3 436.3 840.0 428.0 C861.7 419.7 893.3 408.7 920.0 402.0 C946.7 395.3 978.3 389.7 1000.0 388.0 C1021.7 386.3 1035.7 388.7 1050.0 392.0 C1064.3 395.3 1077.0 401.3 1086.0 408.0 C1095.0 414.7 1099.5 422.3 1104.0 432.0 C1108.5 441.7 1110.7 453.8 1113.0 466.0 C1115.3 478.2 1116.5 491.3 1118.0 505.0 C1119.5 518.7 1122.0 534.7 1122.0 548.0 C1122.0 561.3 1121.7 572.7 1118.0 585.0 C1114.3 597.3 1107.2 609.8 1100.0 622.0 C1092.8 634.2 1085.0 647.0 1075.0 658.0 C1065.0 669.0 1054.2 679.7 1040.0 688.0 C1025.8 696.3 1006.7 702.3 990.0 708.0 C973.3 713.7 956.7 717.7 940.0 722.0 C923.3 726.3 906.3 732.7 890.0 734.0 C873.7 735.3 856.0 733.7 842.0 730.0 C828.0 726.3 815.7 718.0 806.0 712.0 C796.3 706.0 787.7 702.0 784.0 694.0 C780.3 686.0 781.3 674.3 784.0 664.0 C786.7 653.7 799.0 642.0 800.0 632.0 C801.0 622.0 793.2 616.0 790.0 604.0 C786.8 592.0 782.5 573.3 781.0 560.0 C779.5 546.7 782.8 534.7 781.0 524.0 C779.2 513.3 771.5 503.7 770.0 496.0 C768.5 488.3 768.7 485.3 772.0 478.0 Z" fill="#8360b8"/>
<g clip-path="url(#c6)">
<path d="M772.0 478.0 C775.3 470.7 778.7 460.3 790.0 452.0 C801.3 443.7 818.3 436.3 840.0 428.0 C861.7 419.7 893.3 408.7 920.0 402.0 C946.7 395.3 978.3 389.7 1000.0 388.0 C1021.7 386.3 1035.7 388.7 1050.0 392.0 C1064.3 395.3 1077.0 401.3 1086.0 408.0 C1095.0 414.7 1099.5 422.3 1104.0 432.0 C1108.5 441.7 1110.7 453.8 1113.0 466.0 C1115.3 478.2 1116.5 491.3 1118.0 505.0 C1119.5 518.7 1122.0 534.7 1122.0 548.0 C1122.0 561.3 1121.7 572.7 1118.0 585.0 C1114.3 597.3 1107.2 609.8 1100.0 622.0 C1092.8 634.2 1085.0 647.0 1075.0 658.0 C1065.0 669.0 1054.2 679.7 1040.0 688.0 C1025.8 696.3 1006.7 702.3 990.0 708.0 C973.3 713.7 956.7 717.7 940.0 722.0 C923.3 726.3 906.3 732.7 890.0 734.0 C873.7 735.3 856.0 733.7 842.0 730.0 C828.0 726.3 815.7 718.0 806.0 712.0 C796.3 706.0 787.7 702.0 784.0 694.0 C780.3 686.0 781.3 674.3 784.0 664.0 C786.7 653.7 799.0 642.0 800.0 632.0 C801.0 622.0 793.2 616.0 790.0 604.0 C786.8 592.0 782.5 573.3 781.0 560.0 C779.5 546.7 782.8 534.7 781.0 524.0 C779.2 513.3 771.5 503.7 770.0 496.0 C768.5 488.3 768.7 485.3 772.0 478.0 Z" fill="url(#mot)"/>
<path d="M772.0 478.0 C775.3 470.7 778.7 460.3 790.0 452.0 C801.3 443.7 818.3 436.3 840.0 428.0 C861.7 419.7 893.3 408.7 920.0 402.0 C946.7 395.3 978.3 389.7 1000.0 388.0 C1021.7 386.3 1035.7 388.7 1050.0 392.0 C1064.3 395.3 1077.0 401.3 1086.0 408.0 C1095.0 414.7 1099.5 422.3 1104.0 432.0 C1108.5 441.7 1110.7 453.8 1113.0 466.0 C1115.3 478.2 1116.5 491.3 1118.0 505.0 C1119.5 518.7 1122.0 534.7 1122.0 548.0 C1122.0 561.3 1121.7 572.7 1118.0 585.0 C1114.3 597.3 1107.2 609.8 1100.0 622.0 C1092.8 634.2 1085.0 647.0 1075.0 658.0 C1065.0 669.0 1054.2 679.7 1040.0 688.0 C1025.8 696.3 1006.7 702.3 990.0 708.0 C973.3 713.7 956.7 717.7 940.0 722.0 C923.3 726.3 906.3 732.7 890.0 734.0 C873.7 735.3 856.0 733.7 842.0 730.0 C828.0 726.3 815.7 718.0 806.0 712.0 C796.3 706.0 787.7 702.0 784.0 694.0 C780.3 686.0 781.3 674.3 784.0 664.0 C786.7 653.7 799.0 642.0 800.0 632.0 C801.0 622.0 793.2 616.0 790.0 604.0 C786.8 592.0 782.5 573.3 781.0 560.0 C779.5 546.7 782.8 534.7 781.0 524.0 C779.2 513.3 771.5 503.7 770.0 496.0 C768.5 488.3 768.7 485.3 772.0 478.0 Z" fill="none" stroke="#463079" stroke-width="16" filter="url(#b3)" opacity="0.9"/>
<path d="M772.0 478.0 C775.3 470.7 778.7 460.3 790.0 452.0 C801.3 443.7 818.3 436.3 840.0 428.0 C861.7 419.7 893.3 408.7 920.0 402.0 C946.7 395.3 978.3 389.7 1000.0 388.0 C1021.7 386.3 1035.7 388.7 1050.0 392.0 C1064.3 395.3 1077.0 401.3 1086.0 408.0 C1095.0 414.7 1099.5 422.3 1104.0 432.0 C1108.5 441.7 1110.7 453.8 1113.0 466.0 C1115.3 478.2 1116.5 491.3 1118.0 505.0 C1119.5 518.7 1122.0 534.7 1122.0 548.0 C1122.0 561.3 1121.7 572.7 1118.0 585.0 C1114.3 597.3 1107.2 609.8 1100.0 622.0 C1092.8 634.2 1085.0 647.0 1075.0 658.0 C1065.0 669.0 1054.2 679.7 1040.0 688.0 C1025.8 696.3 1006.7 702.3 990.0 708.0 C973.3 713.7 956.7 717.7 940.0 722.0 C923.3 726.3 906.3 732.7 890.0 734.0 C873.7 735.3 856.0 733.7 842.0 730.0 C828.0 726.3 815.7 718.0 806.0 712.0 C796.3 706.0 787.7 702.0 784.0 694.0 C780.3 686.0 781.3 674.3 784.0 664.0 C786.7 653.7 799.0 642.0 800.0 632.0 C801.0 622.0 793.2 616.0 790.0 604.0 C786.8 592.0 782.5 573.3 781.0 560.0 C779.5 546.7 782.8 534.7 781.0 524.0 C779.2 513.3 771.5 503.7 770.0 496.0 C768.5 488.3 768.7 485.3 772.0 478.0 Z" fill="none" stroke="url(#hat)" stroke-width="9" opacity="0.55" transform="translate(3 3)"/>
</g>
<path d="M772.0 478.0 C775.3 470.7 778.7 460.3 790.0 452.0 C801.3 443.7 818.3 436.3 840.0 428.0 C861.7 419.7 893.3 408.7 920.0 402.0 C946.7 395.3 978.3 389.7 1000.0 388.0 C1021.7 386.3 1035.7 388.7 1050.0 392.0 C1064.3 395.3 1077.0 401.3 1086.0 408.0 C1095.0 414.7 1099.5 422.3 1104.0 432.0 C1108.5 441.7 1110.7 453.8 1113.0 466.0 C1115.3 478.2 1116.5 491.3 1118.0 505.0 C1119.5 518.7 1122.0 534.7 1122.0 548.0 C1122.0 561.3 1121.7 572.7 1118.0 585.0 C1114.3 597.3 1107.2 609.8 1100.0 622.0 C1092.8 634.2 1085.0 647.0 1075.0 658.0 C1065.0 669.0 1054.2 679.7 1040.0 688.0 C1025.8 696.3 1006.7 702.3 990.0 708.0 C973.3 713.7 956.7 717.7 940.0 722.0 C923.3 726.3 906.3 732.7 890.0 734.0 C873.7 735.3 856.0 733.7 842.0 730.0 C828.0 726.3 815.7 718.0 806.0 712.0 C796.3 706.0 787.7 702.0 784.0 694.0 C780.3 686.0 781.3 674.3 784.0 664.0 C786.7 653.7 799.0 642.0 800.0 632.0 C801.0 622.0 793.2 616.0 790.0 604.0 C786.8 592.0 782.5 573.3 781.0 560.0 C779.5 546.7 782.8 534.7 781.0 524.0 C779.2 513.3 771.5 503.7 770.0 496.0 C768.5 488.3 768.7 485.3 772.0 478.0 Z" fill="none" stroke="#1d0f1c" stroke-width="3" stroke-linejoin="round" stroke-linecap="round"/>
<path d="M742 408 Q777.0 451.0 776 370 Q806.5 410.5 803 345 Q845.5 364.5 850 318 Q880.5 362.0 901 302 Q927.0 346.0 945 286 Q973.5 327.0 1008 292 Q1021.0 314.0 1030 296 Q1042.0 338.0 1094 300 L1072 372 L1066 398 L1040 392 L1000 390 L960 408 L930 436 L900 468 L872 474 L845 484 L812 474 L786 462 L766 436 Z" fill="url(#crg)" stroke="#1d0f1c" stroke-width="2.6" stroke-linejoin="round"/>
<path d="M862.0 372.0 C864.3 365.0 876.0 352.0 882.0 350.0 C888.0 348.0 897.3 353.0 898.0 360.0 C898.7 367.0 891.0 386.7 886.0 392.0 C881.0 397.3 872.0 395.3 868.0 392.0 C864.0 388.7 859.7 379.0 862.0 372.0 Z" fill="#6a2c1c" opacity="0.55" filter="url(#b3)"/>
<path d="M912.0 340.0 C915.3 335.8 929.3 329.2 935.0 330.0 C940.7 330.8 946.0 339.7 946.0 345.0 C946.0 350.3 940.2 360.3 935.0 362.0 C929.8 363.7 918.8 358.7 915.0 355.0 C911.2 351.3 908.7 344.2 912.0 340.0 Z" fill="#6a2c1c" opacity="0.55" filter="url(#b3)"/>
<path d="M958.0 330.0 C961.8 325.7 978.0 319.2 985.0 320.0 C992.0 320.8 1000.0 329.7 1000.0 335.0 C1000.0 340.3 991.3 350.2 985.0 352.0 C978.7 353.8 966.5 349.7 962.0 346.0 C957.5 342.3 954.2 334.3 958.0 330.0 Z" fill="#6a2c1c" opacity="0.55" filter="url(#b3)"/>
<path d="M1018.0 325.0 C1021.0 321.7 1040.0 331.2 1050.0 330.0 C1060.0 328.8 1075.3 315.5 1078.0 318.0 C1080.7 320.5 1073.7 339.7 1066.0 345.0 C1058.3 350.3 1040.0 353.3 1032.0 350.0 C1024.0 346.7 1015.0 328.3 1018.0 325.0 Z" fill="#6a2c1c" opacity="0.55" filter="url(#b3)"/>
<path d="M796.0 402.0 C799.0 397.3 813.7 396.2 818.0 400.0 C822.3 403.8 825.0 420.3 822.0 425.0 C819.0 429.7 804.3 431.8 800.0 428.0 C795.7 424.2 793.0 406.7 796.0 402.0 Z" fill="#6a2c1c" opacity="0.55" filter="url(#b3)"/>
<path d="M828.0 372.0 C829.7 365.7 843.3 358.7 848.0 362.0 C852.7 365.3 857.7 385.7 856.0 392.0 C854.3 398.3 842.7 403.3 838.0 400.0 C833.3 396.7 826.3 378.3 828.0 372.0 Z" fill="#6a2c1c" opacity="0.55" filter="url(#b3)"/>
<path d="M770.0 430.0 C772.5 426.2 786.7 422.5 790.0 425.0 C793.3 427.5 792.5 441.2 790.0 445.0 C787.5 448.8 778.3 450.5 775.0 448.0 C771.7 445.5 767.5 433.8 770.0 430.0 Z" fill="#6a2c1c" opacity="0.55" filter="url(#b3)"/>
<path d="M800.0 440.0 C810.0 437.5 836.7 453.3 860.0 450.0 C883.3 446.7 916.7 428.7 940.0 420.0 C963.3 411.3 980.0 402.2 1000.0 398.0 C1020.0 393.8 1050.0 393.8 1060.0 395.0 C1070.0 396.2 1071.7 402.2 1060.0 405.0 C1048.3 407.8 1011.7 405.3 990.0 412.0 C968.3 418.7 948.3 434.3 930.0 445.0 C911.7 455.7 895.0 469.8 880.0 476.0 C865.0 482.2 853.3 483.8 840.0 482.0 C826.7 480.2 806.7 472.0 800.0 465.0 C793.3 458.0 790.0 442.5 800.0 440.0 Z" fill="#a85ccc" opacity="0.85" filter="url(#b5)"/>
<ellipse cx="845" cy="385" rx="2.5" ry="14" transform="rotate(5 845 385)" fill="#fff" stroke="#3a1a18" stroke-width="1.2" />
<ellipse cx="872" cy="345" rx="3" ry="9" transform="rotate(25 872 345)" fill="#fff" stroke="#3a1a18" stroke-width="1.2" />
<ellipse cx="879" cy="362" rx="2" ry="6" transform="rotate(20 879 362)" fill="#fff" stroke="#3a1a18" stroke-width="1.2" />
<ellipse cx="928" cy="334" rx="2.5" ry="8" transform="rotate(10 928 334)" fill="#fff" stroke="#3a1a18" stroke-width="1.2" />
<ellipse cx="968" cy="322" rx="3" ry="9" transform="rotate(-25 968 322)" fill="#fff" stroke="#3a1a18" stroke-width="1.2" />
<ellipse cx="985" cy="336" rx="4" ry="3" transform="rotate(0 985 336)" fill="#fff" stroke="#3a1a18" stroke-width="1.2" />
<ellipse cx="1046" cy="332" rx="7" ry="3" transform="rotate(-25 1046 332)" fill="#fff" stroke="#3a1a18" stroke-width="1.2" />
<ellipse cx="1028" cy="324" rx="2.5" ry="4" transform="rotate(10 1028 324)" fill="#fff" stroke="#3a1a18" stroke-width="1.2" />
<ellipse cx="866" cy="395" rx="3.5" ry="4" transform="rotate(0 866 395)" fill="#fff" stroke="#3a1a18" stroke-width="1.2" />
<ellipse cx="798" cy="414" rx="2.5" ry="4" transform="rotate(0 798 414)" fill="#fff" stroke="#3a1a18" stroke-width="1.2" />
<ellipse cx="938" cy="362" rx="2" ry="5" transform="rotate(10 938 362)" fill="#fff" stroke="#3a1a18" stroke-width="1.2" />
<ellipse cx="1008" cy="348" rx="2.5" ry="3.5" transform="rotate(0 1008 348)" fill="#fff" stroke="#3a1a18" stroke-width="1.2" />
<ellipse cx="952" cy="350" rx="2.5" ry="4" transform="rotate(0 952 350)" fill="#fff" stroke="#3a1a18" stroke-width="1.2" />
<ellipse cx="788" cy="405" rx="1.5" ry="8" transform="rotate(-5 788 405)" fill="#fff" stroke="#3a1a18" stroke-width="1.2" />
<ellipse cx="930" cy="368" rx="5" ry="14" transform="rotate(-28 930 368)" fill="#3a1230" stroke="none" stroke-width="0" />
<ellipse cx="905" cy="398" rx="3" ry="6" transform="rotate(10 905 398)" fill="#3a1230" stroke="none" stroke-width="0" />
<ellipse cx="990" cy="372" rx="4" ry="12" transform="rotate(25 990 372)" fill="#3a1230" stroke="none" stroke-width="0" />
<ellipse cx="1018" cy="362" rx="4" ry="9" transform="rotate(-15 1018 362)" fill="#3a1230" stroke="none" stroke-width="0" />
<ellipse cx="1055" cy="360" rx="4" ry="12" transform="rotate(30 1055 360)" fill="#3a1230" stroke="none" stroke-width="0" />
<ellipse cx="940" cy="420" rx="4" ry="5" transform="rotate(0 940 420)" fill="#3a1230" stroke="none" stroke-width="0" />
<ellipse cx="1030" cy="378" rx="4" ry="4" transform="rotate(0 1030 378)" fill="#3a1230" stroke="none" stroke-width="0" />
<ellipse cx="1028" cy="395" rx="3.5" ry="3.5" transform="rotate(0 1028 395)" fill="#3a1230" stroke="none" stroke-width="0" />
<ellipse cx="1048" cy="372" rx="3" ry="3" transform="rotate(0 1048 372)" fill="#3a1230" stroke="none" stroke-width="0" />
<ellipse cx="895" cy="420" rx="3" ry="6" transform="rotate(20 895 420)" fill="#3a1230" stroke="none" stroke-width="0" />
<ellipse cx="875" cy="425" rx="3.5" ry="3.5" transform="rotate(0 875 425)" fill="#3a1230" stroke="none" stroke-width="0" />
<ellipse cx="830" cy="428" rx="4" ry="10" transform="rotate(-25 830 428)" fill="#3a1230" stroke="none" stroke-width="0" />
<ellipse cx="808" cy="440" rx="7" ry="3" transform="rotate(15 808 440)" fill="#3a1230" stroke="none" stroke-width="0" />
<ellipse cx="855" cy="455" rx="6" ry="9" transform="rotate(-20 855 455)" fill="#3a1230" stroke="none" stroke-width="0" />
<ellipse cx="915" cy="425" rx="3" ry="3" transform="rotate(0 915 425)" fill="#3a1230" stroke="none" stroke-width="0" />
<ellipse cx="960" cy="378" rx="3" ry="8" transform="rotate(20 960 378)" fill="#3a1230" stroke="none" stroke-width="0" />
<ellipse cx="952" cy="372" rx="2" ry="2" transform="rotate(0 952 372)" fill="#fbe89a" stroke="none" stroke-width="0" />
<ellipse cx="985" cy="360" rx="2" ry="2" transform="rotate(0 985 360)" fill="#fbe89a" stroke="none" stroke-width="0" />
<ellipse cx="1020" cy="352" rx="2" ry="2" transform="rotate(0 1020 352)" fill="#fbe89a" stroke="none" stroke-width="0" />
<ellipse cx="1042" cy="355" rx="2" ry="2" transform="rotate(0 1042 355)" fill="#fbe89a" stroke="none" stroke-width="0" />
<ellipse cx="882" cy="382" rx="2" ry="2" transform="rotate(0 882 382)" fill="#fbe89a" stroke="none" stroke-width="0" />
<ellipse cx="812" cy="425" rx="2" ry="2" transform="rotate(0 812 425)" fill="#fbe89a" stroke="none" stroke-width="0" />
<ellipse cx="1004" cy="372" rx="2" ry="2" transform="rotate(0 1004 372)" fill="#fbe89a" stroke="none" stroke-width="0" />
<path d="M813.7 452.8 Q782.8 433.5 753.4 412.5 C733.6 395.5 707.9 357.0 695.5 346.7 L716.5 411.3 C729.0 421.7 727.3 403.1 747.6 419.4 Q773.7 444.4 798.3 471.2" fill="#e4da60" stroke="#1d0f1c" stroke-width="2.6" stroke-linejoin="round" stroke-linecap="round"/>
<path d="M797.5 451.9 Q779.1 437.9 737.1 404.8" fill="none" stroke="#fbf8b0" stroke-width="3.8" stroke-linecap="round" opacity="0.95"/>
<path d="M796.4 463.4 Q775.3 442.5 748.8 418.0" fill="none" stroke="#b9a84a" stroke-width="2.2" stroke-linecap="round" opacity="0.8"/>
<ellipse cx="706" cy="379" rx="34" ry="26" transform="rotate(72 706 379)" fill="#f4ef66" stroke="#1d0f1c" stroke-width="2.8" />
<ellipse cx="703.5992185534151" cy="377.00735139933454" rx="25.84" ry="18.2" transform="rotate(72 703.5992185534151 377.00735139933454)" fill="#f6f270" stroke="#1d0f1c" stroke-width="2" />
<path d="M815.9 408.9 Q794.4 385.3 773.6 361.2 C769.2 355.5 772.5 359.9 769.7 356.4 L754.3 343.6 C757.2 347.1 765.8 358.2 770.5 363.7 Q789.6 389.1 808.1 415.1" fill="#e4da60" stroke="#1d0f1c" stroke-width="2.6" stroke-linejoin="round" stroke-linecap="round"/>
<path d="M807.8 405.2 Q792.5 386.8 769.0 358.7" fill="none" stroke="#fbf8b0" stroke-width="1.8" stroke-linecap="round" opacity="0.95"/>
<path d="M807.2 410.8 Q790.5 388.5 771.1 363.2" fill="none" stroke="#b9a84a" stroke-width="1.2" stroke-linecap="round" opacity="0.8"/>
<ellipse cx="762" cy="350" rx="10" ry="5" transform="rotate(40 762 350)" fill="#f4ef66" stroke="#1d0f1c" stroke-width="2.8" />
<path d="M882.0 448.3 Q841.7 396.1 803.1 342.7 C788.7 320.1 803.2 292.4 794.0 278.5 L738.0 313.5 C747.2 327.3 779.5 326.2 794.8 348.2 Q829.3 404.3 862.0 461.7" fill="#e4da60" stroke="#1d0f1c" stroke-width="2.6" stroke-linejoin="round" stroke-linecap="round"/>
<path d="M863.4 437.8 Q836.7 399.4 789.1 330.6" fill="none" stroke="#fbf8b0" stroke-width="4.2" stroke-linecap="round" opacity="0.95"/>
<path d="M860.7 451.0 Q831.5 402.9 796.5 347.1" fill="none" stroke="#b9a84a" stroke-width="2.5" stroke-linecap="round" opacity="0.8"/>
<ellipse cx="766" cy="296" rx="33" ry="27" transform="rotate(-32 766 296)" fill="#f4ef66" stroke="#1d0f1c" stroke-width="2.8" />
<ellipse cx="764.2027713642302" cy="293.3041570463454" rx="25.080000000000002" ry="18.9" transform="rotate(-32 764.2027713642302 293.3041570463454)" fill="#f6f270" stroke="#1d0f1c" stroke-width="2" />
<path d="M883.6 379.8 Q869.4 348.4 856.0 316.7 C852.1 305.9 861.5 299.4 858.9 292.7 L829.1 295.3 C831.6 302.0 846.0 308.3 850.4 318.9 Q861.8 351.4 872.4 384.2" fill="#e4da60" stroke="#1d0f1c" stroke-width="2.6" stroke-linejoin="round" stroke-linecap="round"/>
<path d="M875.7 372.8 Q866.4 349.6 850.4 310.7" fill="none" stroke="#fbf8b0" stroke-width="2.5" stroke-linecap="round" opacity="0.95"/>
<path d="M872.9 378.9 Q863.2 350.8 851.5 318.4" fill="none" stroke="#b9a84a" stroke-width="1.5" stroke-linecap="round" opacity="0.8"/>
<ellipse cx="844" cy="294" rx="15" ry="9" transform="rotate(-5 844 294)" fill="#f4ef66" stroke="#1d0f1c" stroke-width="2.8" />
<path d="M921.9 418.3 Q909.7 364.7 899.5 310.8 C896.6 286.6 919.0 270.4 916.9 255.4 L857.1 260.6 C859.2 275.6 885.7 288.2 889.6 312.2 Q894.9 366.8 898.1 421.7" fill="#e4da60" stroke="#1d0f1c" stroke-width="2.6" stroke-linejoin="round" stroke-linecap="round"/>
<path d="M910.1 403.5 Q903.8 365.5 892.3 295.4" fill="none" stroke="#fbf8b0" stroke-width="4.2" stroke-linecap="round" opacity="0.95"/>
<path d="M901.7 412.9 Q897.6 366.4 891.6 311.9" fill="none" stroke="#b9a84a" stroke-width="2.5" stroke-linecap="round" opacity="0.8"/>
<ellipse cx="887" cy="258" rx="30" ry="24" transform="rotate(-5 887 258)" fill="#f4ef66" stroke="#1d0f1c" stroke-width="2.8" />
<ellipse cx="886.5951708237595" cy="255.14859449778456" rx="22.8" ry="16.799999999999997" transform="rotate(-5 886.5951708237595 255.14859449778456)" fill="#f6f270" stroke="#1d0f1c" stroke-width="2" />
<path d="M956.0 351.4 Q950.8 317.8 946.4 284.1 C945.6 272.6 956.7 266.1 956.0 259.0 L926.0 259.0 C926.7 266.1 939.1 273.3 940.5 284.7 Q942.7 318.6 944.0 352.6" fill="#e4da60" stroke="#1d0f1c" stroke-width="2.6" stroke-linejoin="round" stroke-linecap="round"/>
<path d="M950.3 342.6 Q947.5 318.1 942.7 276.8" fill="none" stroke="#fbf8b0" stroke-width="2.5" stroke-linecap="round" opacity="0.95"/>
<path d="M946.0 347.7 Q944.1 318.4 941.7 284.6" fill="none" stroke="#b9a84a" stroke-width="1.5" stroke-linecap="round" opacity="0.8"/>
<ellipse cx="941" cy="259" rx="15" ry="8" transform="rotate(0 941 259)" fill="#f4ef66" stroke="#1d0f1c" stroke-width="2.8" />
<path d="M1013.0 392.7 Q1011.8 345.4 1012.5 298.2 C1014.3 277.6 1033.2 264.9 1034.0 252.0 L988.0 252.0 C987.2 264.9 1004.4 276.9 1003.6 297.6 Q998.3 344.5 991.0 391.3" fill="#e4da60" stroke="#1d0f1c" stroke-width="2.6" stroke-linejoin="round" stroke-linecap="round"/>
<path d="M1005.1 378.1 Q1006.4 345.0 1008.9 284.1" fill="none" stroke="#fbf8b0" stroke-width="3.8" stroke-linecap="round" opacity="0.95"/>
<path d="M995.9 384.6 Q1000.7 344.7 1005.4 297.7" fill="none" stroke="#b9a84a" stroke-width="2.2" stroke-linecap="round" opacity="0.8"/>
<ellipse cx="1011" cy="252" rx="23" ry="20" transform="rotate(0 1011 252)" fill="#f4ef66" stroke="#1d0f1c" stroke-width="2.8" />
<ellipse cx="1011.153967894362" cy="249.6049438654792" rx="17.48" ry="14.0" transform="rotate(0 1011.153967894362 249.6049438654792)" fill="#f6f270" stroke="#1d0f1c" stroke-width="2" />
<path d="M1020.2 339.6 Q1023.4 312.3 1036.6 288.8 C1039.3 282.1 1047.1 272.2 1048.7 268.0 L1031.3 278.0 C1029.8 282.2 1034.6 280.4 1032.3 287.2 Q1017.7 310.2 1011.8 336.4" fill="#e4da60" stroke="#1d0f1c" stroke-width="2.6" stroke-linejoin="round" stroke-linecap="round"/>
<path d="M1019.2 331.8 Q1021.1 311.5 1036.1 283.5" fill="none" stroke="#fbf8b0" stroke-width="1.9" stroke-linecap="round" opacity="0.95"/>
<path d="M1014.7 333.8 Q1018.7 310.6 1033.2 287.5" fill="none" stroke="#b9a84a" stroke-width="1.2" stroke-linecap="round" opacity="0.8"/>
<ellipse cx="1040" cy="273" rx="10" ry="6" transform="rotate(-30 1040 273)" fill="#f4ef66" stroke="#1d0f1c" stroke-width="2.8" />
<path d="M1065.1 399.1 Q1081.9 352.2 1100.3 306.0 C1108.0 289.8 1127.9 270.3 1132.5 260.1 L1093.5 275.9 C1089.0 286.1 1100.0 286.2 1093.0 302.8 Q1070.8 347.2 1046.9 390.9" fill="#e4da60" stroke="#1d0f1c" stroke-width="2.6" stroke-linejoin="round" stroke-linecap="round"/>
<path d="M1063.5 383.1 Q1077.4 350.2 1101.6 293.5" fill="none" stroke="#fbf8b0" stroke-width="3.4" stroke-linecap="round" opacity="0.95"/>
<path d="M1053.4 386.2 Q1072.8 348.1 1094.5 303.4" fill="none" stroke="#b9a84a" stroke-width="2.0" stroke-linecap="round" opacity="0.8"/>
<ellipse cx="1113" cy="268" rx="21" ry="17" transform="rotate(-22 1113 268)" fill="#f4ef66" stroke="#1d0f1c" stroke-width="2.8" />
<ellipse cx="1113.835315513702" cy="266.1388584168396" rx="15.96" ry="11.899999999999999" transform="rotate(-22 1113.835315513702 266.1388584168396)" fill="#f6f270" stroke="#1d0f1c" stroke-width="2" />
<ellipse cx="758" cy="288" rx="13" ry="9" transform="rotate(-30 758 288)" fill="#fbf99a" stroke="none" stroke-width="0" opacity="0.85"/>
<ellipse cx="882" cy="252" rx="12" ry="8" transform="rotate(-5 882 252)" fill="#fbf99a" stroke="none" stroke-width="0" opacity="0.85"/>
<ellipse cx="1007" cy="246" rx="9" ry="7" transform="rotate(0 1007 246)" fill="#fbf99a" stroke="none" stroke-width="0" opacity="0.85"/>
<ellipse cx="1109" cy="263" rx="8" ry="6" transform="rotate(-20 1109 263)" fill="#fbf99a" stroke="none" stroke-width="0" opacity="0.85"/>
<ellipse cx="699" cy="372" rx="9" ry="14" transform="rotate(-18 699 372)" fill="#fbf99a" stroke="none" stroke-width="0" opacity="0.85"/>
<path d="M878.0 484.0 C882.5 480.3 895.5 469.2 905.0 462.0 C914.5 454.8 921.7 449.3 935.0 441.0 C948.3 432.7 966.3 419.5 985.0 412.0 C1003.7 404.5 1030.3 396.3 1047.0 396.0 C1063.7 395.7 1074.8 404.0 1085.0 410.0 C1095.2 416.0 1104.2 428.3 1108.0 432.0" fill="none" stroke="#a894a8" stroke-width="9" stroke-linecap="round" stroke-linejoin="round" opacity="0.9"/>
<path d="M878.0 482.0 C882.5 478.2 895.5 466.3 905.0 459.0 C914.5 451.7 921.7 446.3 935.0 438.0 C948.3 429.7 966.3 416.5 985.0 409.0 C1003.7 401.5 1030.2 393.3 1047.0 393.0 C1063.8 392.7 1075.5 400.8 1086.0 407.0 C1096.5 413.2 1106.0 426.2 1110.0 430.0" fill="none" stroke="#1d0f1c" stroke-width="3.2" stroke-linecap="round" stroke-linejoin="round" />
<path d="M770.0 482.0 C773.3 478.3 782.5 462.3 790.0 460.0 C797.5 457.7 805.8 464.5 815.0 468.0 C824.2 471.5 835.8 480.0 845.0 481.0 C854.2 482.0 865.8 475.2 870.0 474.0" fill="none" stroke="#a894a8" stroke-width="7" stroke-linecap="round" stroke-linejoin="round" opacity="0.9"/>
<path d="M768.0 480.0 C771.3 476.2 780.2 459.5 788.0 457.0 C795.8 454.5 805.5 461.2 815.0 465.0 C824.5 468.8 835.5 478.8 845.0 480.0 C854.5 481.2 866.2 472.0 872.0 472.0 C877.8 472.0 878.7 478.7 880.0 480.0" fill="none" stroke="#1d0f1c" stroke-width="3" stroke-linecap="round" stroke-linejoin="round" />
<ellipse cx="905" cy="468" rx="7" ry="3.5" transform="rotate(-38 905 468)" fill="none" stroke="#6a5a78" stroke-width="1" />
<ellipse cx="925" cy="452" rx="5" ry="3" transform="rotate(-35 925 452)" fill="none" stroke="#6a5a78" stroke-width="1" />
<ellipse cx="950" cy="436" rx="8" ry="4" transform="rotate(-30 950 436)" fill="none" stroke="#6a5a78" stroke-width="1" />
<ellipse cx="975" cy="424" rx="5" ry="3" transform="rotate(-25 975 424)" fill="none" stroke="#6a5a78" stroke-width="1" />
<ellipse cx="1000" cy="413" rx="8" ry="4" transform="rotate(-18 1000 413)" fill="none" stroke="#6a5a78" stroke-width="1" />
<ellipse cx="1030" cy="405" rx="6" ry="3" transform="rotate(-8 1030 405)" fill="none" stroke="#6a5a78" stroke-width="1" />
<ellipse cx="1060" cy="405" rx="7" ry="3.5" transform="rotate(10 1060 405)" fill="none" stroke="#6a5a78" stroke-width="1" />
<ellipse cx="800" cy="470" rx="5" ry="3" transform="rotate(10 800 470)" fill="none" stroke="#6a5a78" stroke-width="1" />
<ellipse cx="825" cy="476" rx="6" ry="3" transform="rotate(15 825 476)" fill="none" stroke="#6a5a78" stroke-width="1" />
<ellipse cx="850" cy="484" rx="4" ry="2.5" transform="rotate(10 850 484)" fill="none" stroke="#6a5a78" stroke-width="1" />
<path d="M1060.0 420.0 C1063.0 415.0 1084.7 426.7 1092.0 440.0 C1099.3 453.3 1102.7 480.0 1104.0 500.0 C1105.3 520.0 1104.0 553.3 1100.0 560.0 C1096.0 566.7 1084.3 555.0 1080.0 540.0 C1075.7 525.0 1077.3 490.0 1074.0 470.0 C1070.7 450.0 1057.0 425.0 1060.0 420.0 Z" fill="#6a4aa0" opacity="0.8" filter="url(#b4)"/>
<path d="M880.0 540.0 C880.0 527.5 933.3 541.7 960.0 545.0 C986.7 548.3 1020.0 550.8 1040.0 560.0 C1060.0 569.2 1080.0 586.7 1080.0 600.0 C1080.0 613.3 1060.0 636.7 1040.0 640.0 C1020.0 643.3 986.7 636.7 960.0 620.0 C933.3 603.3 880.0 552.5 880.0 540.0 Z" fill="#7552ac" opacity="0.7" filter="url(#b6)"/>
<path d="M930.0 455.0 C934.2 448.3 966.7 432.5 985.0 425.0 C1003.3 417.5 1025.8 410.0 1040.0 410.0 C1054.2 410.0 1070.0 421.7 1070.0 425.0 C1070.0 428.3 1058.3 423.3 1040.0 430.0 C1021.7 436.7 978.3 460.8 960.0 465.0 C941.7 469.2 925.8 461.7 930.0 455.0 Z" fill="#b29ae0" opacity="0.8" filter="url(#b4)"/>
<path d="M1062.0 430.0 C1065.3 422.7 1083.3 429.3 1090.0 436.0 C1096.7 442.7 1099.3 456.0 1102.0 470.0 C1104.7 484.0 1107.0 505.0 1106.0 520.0 C1105.0 535.0 1101.0 556.7 1096.0 560.0 C1091.0 563.3 1080.3 553.3 1076.0 540.0 C1071.7 526.7 1072.3 498.3 1070.0 480.0 C1067.7 461.7 1058.7 437.3 1062.0 430.0 Z" fill="#4a3080" opacity="0.85" filter="url(#b4)"/>
<path d="M880.0 478.0 C885.8 470.7 912.5 455.7 930.0 446.0 C947.5 436.3 966.7 427.0 985.0 420.0 C1003.3 413.0 1024.2 405.3 1040.0 404.0 C1055.8 402.7 1080.0 410.0 1080.0 412.0 C1080.0 414.0 1055.8 412.7 1040.0 416.0 C1024.2 419.3 1002.5 425.0 985.0 432.0 C967.5 439.0 950.0 448.3 935.0 458.0 C920.0 467.7 904.2 486.7 895.0 490.0 C885.8 493.3 874.2 485.3 880.0 478.0 Z" fill="#4a3080" opacity="0.6" filter="url(#b3)"/>
<path d="M868.0 482.0 C871.0 478.0 879.3 474.7 884.0 476.0 C888.7 477.3 893.0 484.0 896.0 490.0 C899.0 496.0 903.0 505.7 902.0 512.0 C901.0 518.3 894.3 526.7 890.0 528.0 C885.7 529.3 880.0 524.7 876.0 520.0 C872.0 515.3 867.3 506.3 866.0 500.0 C864.7 493.7 865.0 486.0 868.0 482.0 Z" fill="#7150a8" stroke="#1d0f1c" stroke-width="2.2" stroke-linejoin="round" stroke-linecap="round" />
<path d="M874.0 488.0 C875.3 484.5 881.3 482.0 884.0 484.0 C886.7 486.0 890.0 494.8 890.0 500.0 C890.0 505.2 886.3 514.2 884.0 515.0 C881.7 515.8 877.7 509.5 876.0 505.0 C874.3 500.5 872.7 491.5 874.0 488.0 Z" fill="#b29ae0" opacity="0.9" filter="url(#b2)"/>
<path d="M904.0 518.0 C902.3 516.3 919.8 497.7 930.0 488.0 C940.2 478.3 951.7 469.3 965.0 460.0 C978.3 450.7 996.3 438.0 1010.0 432.0 C1023.7 426.0 1037.7 422.7 1047.0 424.0 C1056.3 425.3 1061.5 433.0 1066.0 440.0 C1070.5 447.0 1072.7 456.0 1074.0 466.0 C1075.3 476.0 1076.0 493.0 1074.0 500.0 C1072.0 507.0 1065.0 511.0 1062.0 508.0 C1059.0 505.0 1058.3 489.0 1056.0 482.0 C1053.7 475.0 1051.3 470.0 1048.0 466.0 C1044.7 462.0 1046.5 457.3 1036.0 458.0 C1025.5 458.7 1001.0 463.3 985.0 470.0 C969.0 476.7 953.5 490.0 940.0 498.0 C926.5 506.0 905.7 519.7 904.0 518.0 Z" fill="#43296f" stroke="#1d0f1c" stroke-width="3" stroke-linejoin="round" stroke-linecap="round" />
<path d="M908.0 512.0 C907.5 510.0 922.3 495.0 932.0 486.0 C941.7 477.0 953.0 467.0 966.0 458.0 C979.0 449.0 997.7 437.3 1010.0 432.0 C1022.3 426.7 1034.3 424.7 1040.0 426.0 C1045.7 427.3 1049.0 435.7 1044.0 440.0 C1039.0 444.3 1022.3 446.3 1010.0 452.0 C997.7 457.7 982.5 466.3 970.0 474.0 C957.5 481.7 945.3 491.7 935.0 498.0 C924.7 504.3 908.5 514.0 908.0 512.0 Z" fill="#8868be" stroke="#1d0f1c" stroke-width="2.2" stroke-linejoin="round" stroke-linecap="round" />
<path d="M940.0 480.0 C942.5 477.0 962.5 464.7 975.0 458.0 C987.5 451.3 1005.5 443.7 1015.0 440.0 C1024.5 436.3 1032.8 434.7 1032.0 436.0 C1031.2 437.3 1022.0 441.3 1010.0 448.0 C998.0 454.7 971.7 470.7 960.0 476.0 C948.3 481.3 937.5 483.0 940.0 480.0 Z" fill="#cbb8ee" opacity="0.85" filter="url(#b2)"/>
<path d="M910.0 523.0 C912.3 519.3 931.8 505.5 940.0 500.0 C948.2 494.5 968.7 480.6 980.0 476.0 C991.3 471.4 1028.8 461.2 1037.0 461.0 C1045.2 460.8 1048.1 469.4 1050.0 474.0 C1051.9 478.6 1054.6 495.0 1053.0 500.0 C1051.4 505.0 1042.2 513.7 1036.0 517.0 C1029.8 520.3 1008.9 525.8 1000.0 528.0 C991.1 530.2 969.3 535.5 960.0 536.0 C950.7 536.5 925.8 533.5 920.0 532.0 C914.2 530.5 907.7 526.7 910.0 523.0 Z" fill="#c3da58" stroke="#1d0f1c" stroke-width="2.8" stroke-linejoin="round" stroke-linecap="round" />
<path d="M1030.0 468.0 C1031.7 466.0 1043.0 472.7 1046.0 478.0 C1049.0 483.3 1050.0 494.3 1048.0 500.0 C1046.0 505.7 1036.0 513.7 1034.0 512.0 C1032.0 510.3 1036.7 497.3 1036.0 490.0 C1035.3 482.7 1028.3 470.0 1030.0 468.0 Z" fill="#dff08a" opacity="0.9" filter="url(#b2)"/>
<ellipse cx="985" cy="501" rx="46" ry="27" transform="rotate(-17 985 501)" fill="#f2ef62" stroke="#1d0f1c" stroke-width="2.2" />
<path d="M1021.3 489.9 L1027.1 488.1" stroke="#1d0f1c" stroke-width="1.3"/>
<path d="M1021.6 496.0 L1027.5 495.5" stroke="#1d0f1c" stroke-width="1.3"/>
<path d="M1018.9 502.5 L1024.4 503.4" stroke="#1d0f1c" stroke-width="1.3"/>
<path d="M1013.4 508.9 L1018.2 511.0" stroke="#1d0f1c" stroke-width="1.3"/>
<path d="M1005.7 514.7 L1009.3 517.8" stroke="#1d0f1c" stroke-width="1.3"/>
<path d="M996.2 519.3 L998.4 523.3" stroke="#1d0f1c" stroke-width="1.3"/>
<path d="M985.9 522.5 L986.4 527.0" stroke="#1d0f1c" stroke-width="1.3"/>
<path d="M975.5 523.9 L974.3 528.5" stroke="#1d0f1c" stroke-width="1.3"/>
<path d="M965.8 523.5 L963.1 527.9" stroke="#1d0f1c" stroke-width="1.3"/>
<path d="M957.7 521.2 L953.6 525.0" stroke="#1d0f1c" stroke-width="1.3"/>
<path d="M951.9 517.3 L946.7 520.2" stroke="#1d0f1c" stroke-width="1.3"/>
<path d="M948.7 512.1 L942.9 513.9" stroke="#1d0f1c" stroke-width="1.3"/>
<path d="M948.4 506.0 L942.5 506.5" stroke="#1d0f1c" stroke-width="1.3"/>
<path d="M951.1 499.5 L945.6 498.6" stroke="#1d0f1c" stroke-width="1.3"/>
<path d="M956.6 493.1 L951.8 491.0" stroke="#1d0f1c" stroke-width="1.3"/>
<path d="M964.3 487.3 L960.7 484.2" stroke="#1d0f1c" stroke-width="1.3"/>
<path d="M973.8 482.7 L971.6 478.7" stroke="#1d0f1c" stroke-width="1.3"/>
<path d="M984.1 479.5 L983.6 475.0" stroke="#1d0f1c" stroke-width="1.3"/>
<path d="M994.5 478.1 L995.7 473.5" stroke="#1d0f1c" stroke-width="1.3"/>
<path d="M1004.2 478.5 L1006.9 474.1" stroke="#1d0f1c" stroke-width="1.3"/>
<path d="M1012.3 480.8 L1016.4 477.0" stroke="#1d0f1c" stroke-width="1.3"/>
<path d="M1018.1 484.7 L1023.3 481.8" stroke="#1d0f1c" stroke-width="1.3"/>
<path d="M950.0 513.0 C960.0 509.3 1000.0 494.7 1010.0 491.0" fill="none" stroke="#0c060c" stroke-width="6.5" stroke-linecap="round" stroke-linejoin="round" />
<ellipse cx="1012" cy="489" rx="11" ry="10" transform="rotate(0 1012 489)" fill="#0c060c" stroke="none" stroke-width="0" />
<ellipse cx="950" cy="513" rx="6" ry="5" transform="rotate(0 950 513)" fill="#0c060c" stroke="none" stroke-width="0" />
<ellipse cx="1001" cy="483" rx="5" ry="4" transform="rotate(0 1001 483)" fill="#f6f6f6" stroke="none" stroke-width="0" />
<ellipse cx="947" cy="510" rx="4" ry="3.5" transform="rotate(0 947 510)" fill="#f2f2f2" stroke="none" stroke-width="0" />
<path d="M906.0 526.0 C906.3 524.4 912.8 531.4 920.0 533.0 C927.2 534.6 949.3 538.4 960.0 538.0 C970.7 537.6 989.6 532.7 1000.0 530.0 C1010.4 527.3 1030.5 522.0 1038.0 518.0 C1045.5 514.0 1052.5 501.3 1056.0 500.0 C1059.5 498.7 1065.1 504.0 1064.0 508.0 C1062.9 512.0 1055.9 524.9 1048.0 530.0 C1040.1 535.1 1017.4 543.1 1005.0 546.0 C992.6 548.9 966.6 552.1 955.0 552.0 C943.4 551.9 924.5 548.5 918.0 545.0 C911.5 541.5 905.7 527.6 906.0 526.0 Z" fill="#8360b8" stroke="#1d0f1c" stroke-width="2.6" stroke-linejoin="round" stroke-linecap="round" />
<path d="M930.0 540.0 C931.7 540.7 956.7 545.3 970.0 545.0 C983.3 544.7 998.3 541.3 1010.0 538.0 C1021.7 534.7 1041.7 525.5 1040.0 525.0 C1038.3 524.5 1013.3 532.3 1000.0 535.0 C986.7 537.7 971.7 540.2 960.0 541.0 C948.3 541.8 928.3 539.3 930.0 540.0 Z" fill="#b29ae0" opacity="0.8" filter="url(#b2)"/>
<path d="M790.0 492.0 C790.0 490.1 794.7 484.8 800.0 484.0 C805.3 483.2 822.5 484.7 830.0 486.0 C837.5 487.3 850.4 491.9 856.0 494.0 C861.6 496.1 870.4 499.6 872.0 502.0 C873.6 504.4 870.9 511.5 868.0 512.0 C865.1 512.5 855.9 507.9 850.0 506.0 C844.1 504.1 830.7 499.1 824.0 498.0 C817.3 496.9 804.5 498.8 800.0 498.0 C795.5 497.2 790.0 493.9 790.0 492.0 Z" fill="#6a4aa2" stroke="#1d0f1c" stroke-width="2.4" stroke-linejoin="round" stroke-linecap="round" />
<path d="M802.0 501.0 C804.1 499.2 817.3 498.0 822.0 498.0 C826.7 498.0 838.0 499.8 842.0 501.0 C846.0 502.2 856.0 506.4 856.0 508.0 C856.0 509.6 846.2 514.1 842.0 515.0 C837.8 515.9 824.4 516.2 820.0 516.0 C815.6 515.8 806.1 514.8 804.0 513.0 C801.9 511.2 799.9 502.8 802.0 501.0 Z" fill="#cfe05c" stroke="#1d0f1c" stroke-width="2.2" stroke-linejoin="round" stroke-linecap="round" />
<path d="M812.0 508.0 C816.3 507.8 833.7 507.2 838.0 507.0" fill="none" stroke="#222" stroke-width="2.2" stroke-linecap="round" stroke-linejoin="round" />
<path d="M814.0 505.0 C817.7 504.8 832.3 504.2 836.0 504.0" fill="none" stroke="#fafafa" stroke-width="1.4" stroke-linecap="round" stroke-linejoin="round" />
<path d="M794.0 512.0 C795.1 510.9 799.2 514.9 804.0 516.0 C808.8 517.1 823.1 520.0 830.0 520.0 C836.9 520.0 850.9 515.7 856.0 516.0 C861.1 516.3 868.8 520.1 868.0 522.0 C867.2 523.9 857.1 528.9 850.0 530.0 C842.9 531.1 822.2 530.8 815.0 530.0 C807.8 529.2 798.8 526.4 796.0 524.0 C793.2 521.6 792.9 513.1 794.0 512.0 Z" fill="#8360b8" stroke="#1d0f1c" stroke-width="2.2" stroke-linejoin="round" stroke-linecap="round" />
<path d="M782.0 560.0 C783.4 554.3 786.4 544.8 790.0 540.0 C793.6 535.2 799.7 531.3 806.0 528.0 C812.3 524.7 823.9 520.4 832.0 518.0 C840.1 515.6 851.0 511.7 860.0 512.0 C869.0 512.3 882.1 516.1 892.0 520.0 C901.9 523.9 917.3 532.0 926.0 538.0 C934.7 544.0 945.2 553.0 950.0 560.0 C954.8 567.0 958.3 578.1 958.0 585.0 C957.7 591.9 953.7 601.0 948.0 606.0 C942.3 611.0 930.2 615.3 920.0 618.0 C909.8 620.7 892.0 623.4 880.0 624.0 C868.0 624.6 851.1 623.8 840.0 622.0 C828.9 620.2 813.8 615.9 806.0 612.0 C798.2 608.1 791.8 601.1 788.0 596.0 C784.2 590.9 781.9 583.4 781.0 578.0 C780.1 572.6 780.6 565.7 782.0 560.0 Z" fill="#8360b8" stroke="#1d0f1c" stroke-width="3" stroke-linejoin="round" stroke-linecap="round" />
<path d="M820.0 535.0 C824.7 529.5 839.2 523.2 850.0 522.0 C860.8 520.8 875.8 524.2 885.0 528.0 C894.2 531.8 904.2 539.3 905.0 545.0 C905.8 550.7 899.2 558.7 890.0 562.0 C880.8 565.3 861.3 566.2 850.0 565.0 C838.7 563.8 827.0 560.0 822.0 555.0 C817.0 550.0 815.3 540.5 820.0 535.0 Z" fill="#b595e6" opacity="0.95" filter="url(#b4)"/>
<path d="M835.0 538.0 C837.5 534.3 852.5 530.0 860.0 530.0 C867.5 530.0 878.3 534.7 880.0 538.0 C881.7 541.3 875.8 547.7 870.0 550.0 C864.2 552.3 850.8 554.0 845.0 552.0 C839.2 550.0 832.5 541.7 835.0 538.0 Z" fill="#d0baf4" opacity="0.9" filter="url(#b3)"/>
<path d="M925.0 560.0 C927.2 557.8 943.8 565.7 948.0 572.0 C952.2 578.3 953.8 591.7 950.0 598.0 C946.2 604.3 927.5 612.2 925.0 610.0 C922.5 607.8 935.0 593.3 935.0 585.0 C935.0 576.7 922.8 562.2 925.0 560.0 Z" fill="#9a7a9a" opacity="0.8" filter="url(#b3)"/>
<ellipse cx="828" cy="532" rx="5" ry="3" transform="rotate(0 828 532)" fill="none" stroke="#5a4080" stroke-width="0.9" />
<ellipse cx="846" cy="526" rx="4" ry="2.5" transform="rotate(0 846 526)" fill="none" stroke="#5a4080" stroke-width="0.9" />
<ellipse cx="870" cy="524" rx="6" ry="3" transform="rotate(0 870 524)" fill="none" stroke="#5a4080" stroke-width="0.9" />
<ellipse cx="892" cy="530" rx="4" ry="2.5" transform="rotate(0 892 530)" fill="none" stroke="#5a4080" stroke-width="0.9" />
<ellipse cx="910" cy="540" rx="5" ry="3" transform="rotate(0 910 540)" fill="none" stroke="#5a4080" stroke-width="0.9" />
<ellipse cx="926" cy="552" rx="4" ry="2.5" transform="rotate(0 926 552)" fill="none" stroke="#5a4080" stroke-width="0.9" />
<ellipse cx="815" cy="542" rx="4" ry="2.5" transform="rotate(0 815 542)" fill="none" stroke="#5a4080" stroke-width="0.9" />
<ellipse cx="838" cy="545" rx="7" ry="4" transform="rotate(-10 838 545)" fill="#d6c6f4" stroke="none" stroke-width="0" opacity="0.8"/>
<ellipse cx="858" cy="538" rx="9" ry="5" transform="rotate(-10 858 538)" fill="#d6c6f4" stroke="none" stroke-width="0" opacity="0.8"/>
<ellipse cx="880" cy="545" rx="6" ry="3.5" transform="rotate(-10 880 545)" fill="#d6c6f4" stroke="none" stroke-width="0" opacity="0.8"/>
<ellipse cx="848" cy="556" rx="6" ry="3" transform="rotate(-10 848 556)" fill="#d6c6f4" stroke="none" stroke-width="0" opacity="0.8"/>
<ellipse cx="872" cy="558" rx="5" ry="3" transform="rotate(-10 872 558)" fill="#d6c6f4" stroke="none" stroke-width="0" opacity="0.8"/>
<ellipse cx="810" cy="576" rx="29" ry="21" transform="rotate(24 810 576)" fill="#9a84a4" stroke="#1d0f1c" stroke-width="2.6" />
<ellipse cx="811" cy="578" rx="24" ry="15" transform="rotate(24 811 578)" fill="#0e0610" stroke="none" stroke-width="0" />
<path d="M852.0 580.0 C851.3 578.7 858.5 569.7 866.0 566.0 C873.5 562.3 886.3 558.7 897.0 558.0 C907.7 557.3 920.8 559.0 930.0 562.0 C939.2 565.0 947.3 571.3 952.0 576.0 C956.7 580.7 959.3 588.7 958.0 590.0 C956.7 591.3 950.3 587.0 944.0 584.0 C937.7 581.0 928.2 574.7 920.0 572.0 C911.8 569.3 903.3 567.7 895.0 568.0 C886.7 568.3 877.2 572.0 870.0 574.0 C862.8 576.0 852.7 581.3 852.0 580.0 Z" fill="#a8909e" stroke="#1d0f1c" stroke-width="2.4" stroke-linejoin="round" stroke-linecap="round" />
<ellipse cx="897" cy="586" rx="47" ry="23" transform="rotate(-6 897 586)" fill="#9a84a4" stroke="#1d0f1c" stroke-width="2.6" />
<ellipse cx="898" cy="589" rx="41" ry="17" transform="rotate(-6 898 589)" fill="#0e0610" stroke="none" stroke-width="0" />
<path d="M846.0 560.0 C847.0 565.0 850.3 580.3 852.0 590.0 C853.7 599.7 855.3 613.3 856.0 618.0" fill="none" stroke="#1d0f1c" stroke-width="2.2" stroke-linecap="round" stroke-linejoin="round" />
<path d="M848.0 590.0 C850.7 587.3 862.3 595.3 866.0 600.0 C869.7 604.7 872.7 615.3 870.0 618.0 C867.3 620.7 853.7 620.7 850.0 616.0 C846.3 611.3 845.3 592.7 848.0 590.0 Z" fill="#5a3590" opacity="0.8" filter="url(#b2)"/>
<path d="M790.0 606.0 C791.6 604.4 804.0 613.3 812.0 616.0 C820.0 618.7 838.3 624.4 850.0 626.0 C861.7 627.6 886.7 628.5 900.0 628.0 C913.3 627.5 936.7 625.2 950.0 622.0 C963.3 618.8 988.0 609.9 1000.0 604.0 C1012.0 598.1 1033.1 579.9 1040.0 578.0 C1046.9 576.1 1052.8 586.8 1052.0 590.0 C1051.2 593.2 1040.9 598.1 1034.0 602.0 C1027.1 605.9 1011.2 614.7 1000.0 619.0 C988.8 623.3 963.3 631.3 950.0 634.0 C936.7 636.7 914.7 638.6 900.0 639.0 C885.3 639.4 853.3 638.5 840.0 637.0 C826.7 635.5 806.7 632.1 800.0 628.0 C793.3 623.9 788.4 607.6 790.0 606.0 Z" fill="#8360b8" stroke="#1d0f1c" stroke-width="2.6" stroke-linejoin="round" stroke-linecap="round" />
<path d="M820.0 622.0 C820.0 622.7 851.7 630.7 870.0 632.0 C888.3 633.3 910.0 633.0 930.0 630.0 C950.0 627.0 990.0 614.7 990.0 614.0 C990.0 613.3 950.0 623.7 930.0 626.0 C910.0 628.3 888.3 628.7 870.0 628.0 C851.7 627.3 820.0 621.3 820.0 622.0 Z" fill="#b29ae0" opacity="0.8" filter="url(#b2)"/>
<path d="M958.0 548.0 C965.0 547.7 985.5 544.7 1000.0 546.0 C1014.5 547.3 1032.5 550.3 1045.0 556.0 C1057.5 561.7 1070.0 576.0 1075.0 580.0" fill="none" stroke="#1d0f1c" stroke-width="2.6" stroke-linecap="round" stroke-linejoin="round" />
<path d="M975.0 552.0 C976.7 550.3 997.5 549.7 1010.0 552.0 C1022.5 554.3 1040.0 560.5 1050.0 566.0 C1060.0 571.5 1071.7 583.5 1070.0 585.0 C1068.3 586.5 1051.7 578.8 1040.0 575.0 C1028.3 571.2 1010.8 565.8 1000.0 562.0 C989.2 558.2 973.3 553.7 975.0 552.0 Z" fill="#a88fb0" opacity="0.8" filter="url(#b3)"/>
<path d="M1054.0 592.0 C1057.5 593.3 1069.0 594.5 1075.0 600.0 C1081.0 605.5 1087.5 620.8 1090.0 625.0" fill="none" stroke="#1d0f1c" stroke-width="2" stroke-linecap="round" stroke-linejoin="round" />
<path d="M1030.0 602.0 C1029.5 597.5 1033.7 587.7 1036.0 584.0 C1038.3 580.3 1044.6 573.2 1047.0 574.0 C1049.4 574.8 1053.6 585.7 1054.0 590.0 C1054.4 594.3 1051.9 602.3 1050.0 606.0 C1048.1 609.7 1042.7 618.5 1040.0 618.0 C1037.3 617.5 1030.5 606.5 1030.0 602.0 Z" fill="#120810" stroke="#1d0f1c" stroke-width="2" stroke-linejoin="round" stroke-linecap="round" />
<path d="M800.0 628.0 C804.0 624.6 828.3 635.7 840.0 637.0 C851.7 638.3 887.2 639.4 900.0 639.0 C912.8 638.6 938.3 636.3 950.0 634.0 C961.7 631.7 990.2 622.7 1000.0 619.0 C1009.8 615.3 1029.3 602.1 1034.0 602.0 C1038.7 601.9 1041.6 613.6 1040.0 618.0 C1038.4 622.4 1024.7 635.5 1020.0 640.0 C1015.3 644.5 1008.2 652.7 1000.0 657.0 C991.8 661.3 961.7 673.6 950.0 677.0 C938.3 680.4 911.7 685.5 900.0 686.0 C888.3 686.5 861.0 683.3 850.0 681.0 C839.0 678.7 811.8 672.2 806.0 666.0 C800.2 659.8 796.0 631.4 800.0 628.0 Z" fill="#fbfbfb" stroke="#1d0f1c" stroke-width="2.6" stroke-linejoin="round" stroke-linecap="round" />
<path d="M801.9 626.9 L816.7 628.8 Q813.8 637.6 807.8 646.4 Q803.8 636.6 801.9 626.9 Z" fill="#ffffff" stroke="#1d0f1c" stroke-width="1.8" stroke-linejoin="round"/>
<path d="M816.7 629.2 L838.6 632.8 Q834.2 643.1 826.9 653.4 Q820.8 641.3 816.7 629.2 Z" fill="#ffffff" stroke="#1d0f1c" stroke-width="1.8" stroke-linejoin="round"/>
<path d="M840.2 633.4 L865.6 639.1 Q859.1 655.2 849.5 671.4 Q843.8 652.4 840.2 633.4 Z" fill="#ffffff" stroke="#1d0f1c" stroke-width="1.8" stroke-linejoin="round"/>
<path d="M867.2 640.0 L896.4 642.2 Q887.4 654.8 875.3 667.5 Q870.2 653.8 867.2 640.0 Z" fill="#ffffff" stroke="#1d0f1c" stroke-width="1.8" stroke-linejoin="round"/>
<path d="M898.8 642.2 L934.7 640.2 Q923.7 652.3 909.7 664.4 Q903.2 653.3 898.8 642.2 Z" fill="#ffffff" stroke="#1d0f1c" stroke-width="1.8" stroke-linejoin="round"/>
<path d="M936.2 640.0 L973.8 631.6 Q963.5 644.8 950.3 658.1 Q942.3 649.1 936.2 640.0 Z" fill="#ffffff" stroke="#1d0f1c" stroke-width="1.8" stroke-linejoin="round"/>
<path d="M975.3 630.8 L1001.9 617.5 Q996.3 631.6 987.8 645.6 Q980.6 638.2 975.3 630.8 Z" fill="#ffffff" stroke="#1d0f1c" stroke-width="1.8" stroke-linejoin="round"/>
<path d="M1002.7 616.9 L1019.1 605.8 Q1015.9 618.7 1009.7 631.6 Q1005.2 624.2 1002.7 616.9 Z" fill="#ffffff" stroke="#1d0f1c" stroke-width="1.8" stroke-linejoin="round"/>
<path d="M1019.8 605.0 L1031.6 596.4 Q1030.3 607.0 1026.1 617.5 Q1022.0 611.2 1019.8 605.0 Z" fill="#ffffff" stroke="#1d0f1c" stroke-width="1.8" stroke-linejoin="round"/>
<path d="M811.2 667.5 L831.6 675.3 Q826.3 661.2 819.1 647.2 Q814.2 657.3 811.2 667.5 Z" fill="#fbfbfb" stroke="#1d0f1c" stroke-width="1.5" stroke-linejoin="round"/>
<path d="M833.1 676.1 L855.0 681.6 Q849.8 668.3 842.5 655.0 Q836.8 665.5 833.1 676.1 Z" fill="#fbfbfb" stroke="#1d0f1c" stroke-width="1.5" stroke-linejoin="round"/>
<path d="M856.6 681.9 L881.6 686.2 Q875.5 673.8 867.5 661.2 Q861.0 671.6 856.6 681.9 Z" fill="#fbfbfb" stroke="#1d0f1c" stroke-width="1.5" stroke-linejoin="round"/>
<path d="M883.1 686.6 L914.4 687.8 Q906.0 677.7 895.6 667.5 Q888.4 677.0 883.1 686.6 Z" fill="#fbfbfb" stroke="#1d0f1c" stroke-width="1.5" stroke-linejoin="round"/>
<path d="M915.9 687.5 L944.1 683.1 Q938.0 673.8 930.0 664.4 Q922.0 675.9 915.9 687.5 Z" fill="#fbfbfb" stroke="#1d0f1c" stroke-width="1.5" stroke-linejoin="round"/>
<path d="M945.6 682.3 L972.2 672.2 Q966.9 663.6 959.7 655.0 Q951.7 668.7 945.6 682.3 Z" fill="#fbfbfb" stroke="#1d0f1c" stroke-width="1.5" stroke-linejoin="round"/>
<path d="M973.8 671.4 L995.6 658.1 Q990.4 651.9 983.1 645.6 Q977.4 658.5 973.8 671.4 Z" fill="#fbfbfb" stroke="#1d0f1c" stroke-width="1.5" stroke-linejoin="round"/>
<path d="M997.2 657.3 L1014.4 642.5 Q1010.7 637.8 1005.0 633.1 Q1000.1 645.2 997.2 657.3 Z" fill="#fbfbfb" stroke="#1d0f1c" stroke-width="1.5" stroke-linejoin="round"/>
<path d="M1015.2 641.7 L1030.0 625.3 Q1027.1 623.0 1022.2 620.6 Q1017.7 631.2 1015.2 641.7 Z" fill="#fbfbfb" stroke="#1d0f1c" stroke-width="1.5" stroke-linejoin="round"/>
<path d="M815.1 629.1 L818.5 629.1 L817.3 643.1 Z" fill="#140a14"/>
<path d="M837.5 633.1 L840.9 633.1 L839.7 650.3 Z" fill="#140a14"/>
<path d="M864.6 639.7 L868.0 639.7 L866.9 658.4 Z" fill="#140a14"/>
<path d="M895.9 642.2 L899.3 642.2 L898.1 662.5 Z" fill="#140a14"/>
<path d="M933.9 640.3 L937.3 640.3 L936.1 659.1 Z" fill="#140a14"/>
<path d="M972.9 631.2 L976.3 631.2 L975.1 646.9 Z" fill="#140a14"/>
<path d="M1000.6 617.2 L1004.0 617.2 L1002.8 629.7 Z" fill="#140a14"/>
<path d="M1017.8 605.3 L1021.2 605.3 L1020.0 614.7 Z" fill="#140a14"/>
<path d="M808.0 649.0 l2.4 -6" stroke="#555" stroke-width="0.7"/>
<path d="M815.4 650.0 l2.4 -6" stroke="#555" stroke-width="0.7"/>
<path d="M822.8 650.9 l2.4 -6" stroke="#555" stroke-width="0.7"/>
<path d="M830.2 651.9 l2.4 -6" stroke="#555" stroke-width="0.7"/>
<path d="M837.6 652.7 l2.4 -6" stroke="#555" stroke-width="0.7"/>
<path d="M845.0 653.5 l2.4 -6" stroke="#555" stroke-width="0.7"/>
<path d="M852.4 654.2 l2.4 -6" stroke="#555" stroke-width="0.7"/>
<path d="M859.8 654.7 l2.4 -6" stroke="#555" stroke-width="0.7"/>
<path d="M867.2 655.2 l2.4 -6" stroke="#555" stroke-width="0.7"/>
<path d="M874.6 655.5 l2.4 -6" stroke="#555" stroke-width="0.7"/>
<path d="M882.0 655.6 l2.4 -6" stroke="#555" stroke-width="0.7"/>
<path d="M889.4 655.5 l2.4 -6" stroke="#555" stroke-width="0.7"/>
<path d="M896.8 655.3 l2.4 -6" stroke="#555" stroke-width="0.7"/>
<path d="M904.2 654.9 l2.4 -6" stroke="#555" stroke-width="0.7"/>
<path d="M911.6 654.3 l2.4 -6" stroke="#555" stroke-width="0.7"/>
<path d="M919.0 653.5 l2.4 -6" stroke="#555" stroke-width="0.7"/>
<path d="M926.4 652.5 l2.4 -6" stroke="#555" stroke-width="0.7"/>
<path d="M933.8 651.3 l2.4 -6" stroke="#555" stroke-width="0.7"/>
<path d="M941.2 649.9 l2.4 -6" stroke="#555" stroke-width="0.7"/>
<path d="M948.6 648.3 l2.4 -6" stroke="#555" stroke-width="0.7"/>
<path d="M956.0 646.6 l2.4 -6" stroke="#555" stroke-width="0.7"/>
<path d="M963.4 644.7 l2.4 -6" stroke="#555" stroke-width="0.7"/>
<path d="M970.8 642.6 l2.4 -6" stroke="#555" stroke-width="0.7"/>
<path d="M978.2 640.3 l2.4 -6" stroke="#555" stroke-width="0.7"/>
<path d="M985.6 638.0 l2.4 -6" stroke="#555" stroke-width="0.7"/>
<path d="M993.0 635.5 l2.4 -6" stroke="#555" stroke-width="0.7"/>
<path d="M1000.4 632.9 l2.4 -6" stroke="#555" stroke-width="0.7"/>
<path d="M1007.8 630.3 l2.4 -6" stroke="#555" stroke-width="0.7"/>
<path d="M1015.2 627.5 l2.4 -6" stroke="#555" stroke-width="0.7"/>
<path d="M1022.6 624.8 l2.4 -6" stroke="#555" stroke-width="0.7"/>
<path d="M786.0 662.0 C788.9 658.5 797.5 665.2 806.0 668.0 C814.5 670.8 837.5 680.3 850.0 683.0 C862.5 685.7 886.7 688.5 900.0 688.0 C913.3 687.5 936.7 682.9 950.0 679.0 C963.3 675.1 988.5 666.6 1000.0 659.0 C1011.5 651.4 1027.7 625.9 1036.0 622.0 C1044.3 618.1 1056.8 625.5 1062.0 630.0 C1067.2 634.5 1077.1 648.3 1075.0 656.0 C1072.9 663.7 1056.0 681.3 1046.0 688.0 C1036.0 694.7 1012.8 701.5 1000.0 706.0 C987.2 710.5 963.9 718.3 950.0 722.0 C936.1 725.7 910.4 732.9 896.0 734.0 C881.6 735.1 854.0 732.9 842.0 730.0 C830.0 727.1 813.7 716.8 806.0 712.0 C798.3 707.2 786.7 700.7 784.0 694.0 C781.3 687.3 783.1 665.5 786.0 662.0 Z" fill="#8360b8" stroke="#1d0f1c" stroke-width="2.8" stroke-linejoin="round" stroke-linecap="round" />
<path d="M790.0 670.0 C789.0 671.7 793.3 691.3 800.0 700.0 C806.7 708.7 816.7 717.0 830.0 722.0 C843.3 727.0 878.3 731.2 880.0 730.0 C881.7 728.8 852.3 721.7 840.0 715.0 C827.7 708.3 814.3 697.5 806.0 690.0 C797.7 682.5 791.0 668.3 790.0 670.0 Z" fill="#a58d72" opacity="0.9" filter="url(#b3)"/>
<path d="M840.0 692.0 C840.0 693.3 880.0 700.3 900.0 700.0 C920.0 699.7 941.7 695.0 960.0 690.0 C978.3 685.0 1010.0 671.3 1010.0 670.0 C1010.0 668.7 978.3 678.3 960.0 682.0 C941.7 685.7 920.0 690.3 900.0 692.0 C880.0 693.7 840.0 690.7 840.0 692.0 Z" fill="#b29ae0" opacity="0.8" filter="url(#b3)"/>
<path d="M880.0 715.0 C880.0 713.3 920.0 715.3 940.0 712.0 C960.0 708.7 981.7 701.7 1000.0 695.0 C1018.3 688.3 1048.3 671.2 1050.0 672.0 C1051.7 672.8 1028.3 691.7 1010.0 700.0 C991.7 708.3 961.7 719.5 940.0 722.0 C918.3 724.5 880.0 716.7 880.0 715.0 Z" fill="#6a409f" opacity="0.7" filter="url(#b3)"/>
<ellipse cx="1118" cy="459" rx="26" ry="16" transform="rotate(86 1118 459)" fill="#f0a83a" stroke="#1d0f1c" stroke-width="2.6" />
<ellipse cx="1116" cy="459" rx="22.36" ry="12.8" transform="rotate(86 1116 459)" fill="#f4e860" stroke="#1d0f1c" stroke-width="1.8" />
<ellipse cx="1115" cy="459" rx="14.3" ry="7.2" transform="rotate(86 1115 459)" fill="none" stroke="#6a5a20" stroke-width="1.2" />
<ellipse cx="1134" cy="549" rx="26" ry="14" transform="rotate(82 1134 549)" fill="#f0a83a" stroke="#1d0f1c" stroke-width="2.6" />
<ellipse cx="1132" cy="549" rx="22.36" ry="11.200000000000001" transform="rotate(82 1132 549)" fill="#f4e860" stroke="#1d0f1c" stroke-width="1.8" />
<ellipse cx="1131" cy="549" rx="14.3" ry="6.3" transform="rotate(82 1131 549)" fill="none" stroke="#6a5a20" stroke-width="1.2" />
<path d="M1095.0 420.0 C1095.8 423.3 1099.2 436.7 1100.0 440.0" fill="none" stroke="#1d0f1c" stroke-width="1.6" stroke-linecap="round" stroke-linejoin="round" />
<path d="M1088.0 470.0 C1089.7 471.3 1096.3 476.7 1098.0 478.0" fill="none" stroke="#1d0f1c" stroke-width="1.6" stroke-linecap="round" stroke-linejoin="round" />
<path d="M1096.0 500.0 C1097.7 500.8 1105.7 503.0 1106.0 505.0 C1106.3 507.0 1099.3 510.8 1098.0 512.0" fill="none" stroke="#1d0f1c" stroke-width="1.6" stroke-linecap="round" stroke-linejoin="round" />
<path d="M1100.0 530.0 C1102.0 531.3 1110.0 536.7 1112.0 538.0" fill="none" stroke="#1d0f1c" stroke-width="1.6" stroke-linecap="round" stroke-linejoin="round" />
<clipPath id="c7"><path d="M806.0 712.0 C809.7 711.0 821.0 719.0 830.0 722.0 C839.0 725.0 849.2 728.0 860.0 730.0 C870.8 732.0 887.5 731.5 895.0 734.0 C902.5 736.5 906.7 742.0 905.0 745.0 C903.3 748.0 892.5 752.0 885.0 752.0 C877.5 752.0 867.8 745.7 860.0 745.0 C852.2 744.3 844.7 749.2 838.0 748.0 C831.3 746.8 825.0 741.3 820.0 738.0 C815.0 734.7 810.3 732.3 808.0 728.0 C805.7 723.7 802.3 713.0 806.0 712.0 Z"/></clipPath>
<path d="M806.0 712.0 C809.7 711.0 821.0 719.0 830.0 722.0 C839.0 725.0 849.2 728.0 860.0 730.0 C870.8 732.0 887.5 731.5 895.0 734.0 C902.5 736.5 906.7 742.0 905.0 745.0 C903.3 748.0 892.5 752.0 885.0 752.0 C877.5 752.0 867.8 745.7 860.0 745.0 C852.2 744.3 844.7 749.2 838.0 748.0 C831.3 746.8 825.0 741.3 820.0 738.0 C815.0 734.7 810.3 732.3 808.0 728.0 C805.7 723.7 802.3 713.0 806.0 712.0 Z" fill="#8a74a0"/>
<g clip-path="url(#c7)">
<path d="M806.0 712.0 C809.7 711.0 821.0 719.0 830.0 722.0 C839.0 725.0 849.2 728.0 860.0 730.0 C870.8 732.0 887.5 731.5 895.0 734.0 C902.5 736.5 906.7 742.0 905.0 745.0 C903.3 748.0 892.5 752.0 885.0 752.0 C877.5 752.0 867.8 745.7 860.0 745.0 C852.2 744.3 844.7 749.2 838.0 748.0 C831.3 746.8 825.0 741.3 820.0 738.0 C815.0 734.7 810.3 732.3 808.0 728.0 C805.7 723.7 802.3 713.0 806.0 712.0 Z" fill="url(#mot)"/>
<path d="M806.0 712.0 C809.7 711.0 821.0 719.0 830.0 722.0 C839.0 725.0 849.2 728.0 860.0 730.0 C870.8 732.0 887.5 731.5 895.0 734.0 C902.5 736.5 906.7 742.0 905.0 745.0 C903.3 748.0 892.5 752.0 885.0 752.0 C877.5 752.0 867.8 745.7 860.0 745.0 C852.2 744.3 844.7 749.2 838.0 748.0 C831.3 746.8 825.0 741.3 820.0 738.0 C815.0 734.7 810.3 732.3 808.0 728.0 C805.7 723.7 802.3 713.0 806.0 712.0 Z" fill="none" stroke="#5a4470" stroke-width="6" filter="url(#b3)" opacity="0.9"/>
<path d="M806.0 712.0 C809.7 711.0 821.0 719.0 830.0 722.0 C839.0 725.0 849.2 728.0 860.0 730.0 C870.8 732.0 887.5 731.5 895.0 734.0 C902.5 736.5 906.7 742.0 905.0 745.0 C903.3 748.0 892.5 752.0 885.0 752.0 C877.5 752.0 867.8 745.7 860.0 745.0 C852.2 744.3 844.7 749.2 838.0 748.0 C831.3 746.8 825.0 741.3 820.0 738.0 C815.0 734.7 810.3 732.3 808.0 728.0 C805.7 723.7 802.3 713.0 806.0 712.0 Z" fill="none" stroke="url(#hat)" stroke-width="9" opacity="0.55" transform="translate(3 3)"/>
</g>
<path d="M806.0 712.0 C809.7 711.0 821.0 719.0 830.0 722.0 C839.0 725.0 849.2 728.0 860.0 730.0 C870.8 732.0 887.5 731.5 895.0 734.0 C902.5 736.5 906.7 742.0 905.0 745.0 C903.3 748.0 892.5 752.0 885.0 752.0 C877.5 752.0 867.8 745.7 860.0 745.0 C852.2 744.3 844.7 749.2 838.0 748.0 C831.3 746.8 825.0 741.3 820.0 738.0 C815.0 734.7 810.3 732.3 808.0 728.0 C805.7 723.7 802.3 713.0 806.0 712.0 Z" fill="none" stroke="#1d0f1c" stroke-width="2.4" stroke-linejoin="round" stroke-linecap="round"/>
<clipPath id="c8"><path d="M832.0 740.0 C832.0 740.0 827.7 753.0 826.0 760.0 C824.3 767.0 822.0 774.5 822.0 782.0 C822.0 789.5 823.0 797.7 826.0 805.0 C829.0 812.3 834.0 819.8 840.0 826.0 C846.0 832.2 854.3 837.7 862.0 842.0 C869.7 846.3 878.8 851.5 886.0 852.0 C893.2 852.5 901.3 849.5 905.0 845.0 C908.7 840.5 908.8 833.0 908.0 825.0 C907.2 817.0 905.0 805.2 900.0 797.0 C895.0 788.8 886.0 781.8 878.0 776.0 C870.0 770.2 858.3 766.0 852.0 762.0 C845.7 758.0 843.3 755.7 840.0 752.0 C836.7 748.3 832.0 740.0 832.0 740.0 Z"/></clipPath>
<path d="M832.0 740.0 C832.0 740.0 827.7 753.0 826.0 760.0 C824.3 767.0 822.0 774.5 822.0 782.0 C822.0 789.5 823.0 797.7 826.0 805.0 C829.0 812.3 834.0 819.8 840.0 826.0 C846.0 832.2 854.3 837.7 862.0 842.0 C869.7 846.3 878.8 851.5 886.0 852.0 C893.2 852.5 901.3 849.5 905.0 845.0 C908.7 840.5 908.8 833.0 908.0 825.0 C907.2 817.0 905.0 805.2 900.0 797.0 C895.0 788.8 886.0 781.8 878.0 776.0 C870.0 770.2 858.3 766.0 852.0 762.0 C845.7 758.0 843.3 755.7 840.0 752.0 C836.7 748.3 832.0 740.0 832.0 740.0 Z" fill="#8360b8"/>
<g clip-path="url(#c8)">
<path d="M832.0 740.0 C832.0 740.0 827.7 753.0 826.0 760.0 C824.3 767.0 822.0 774.5 822.0 782.0 C822.0 789.5 823.0 797.7 826.0 805.0 C829.0 812.3 834.0 819.8 840.0 826.0 C846.0 832.2 854.3 837.7 862.0 842.0 C869.7 846.3 878.8 851.5 886.0 852.0 C893.2 852.5 901.3 849.5 905.0 845.0 C908.7 840.5 908.8 833.0 908.0 825.0 C907.2 817.0 905.0 805.2 900.0 797.0 C895.0 788.8 886.0 781.8 878.0 776.0 C870.0 770.2 858.3 766.0 852.0 762.0 C845.7 758.0 843.3 755.7 840.0 752.0 C836.7 748.3 832.0 740.0 832.0 740.0 Z" fill="url(#mot)"/>
<path d="M832.0 740.0 C832.0 740.0 827.7 753.0 826.0 760.0 C824.3 767.0 822.0 774.5 822.0 782.0 C822.0 789.5 823.0 797.7 826.0 805.0 C829.0 812.3 834.0 819.8 840.0 826.0 C846.0 832.2 854.3 837.7 862.0 842.0 C869.7 846.3 878.8 851.5 886.0 852.0 C893.2 852.5 901.3 849.5 905.0 845.0 C908.7 840.5 908.8 833.0 908.0 825.0 C907.2 817.0 905.0 805.2 900.0 797.0 C895.0 788.8 886.0 781.8 878.0 776.0 C870.0 770.2 858.3 766.0 852.0 762.0 C845.7 758.0 843.3 755.7 840.0 752.0 C836.7 748.3 832.0 740.0 832.0 740.0 Z" fill="none" stroke="#463079" stroke-width="12" filter="url(#b3)" opacity="0.9"/>
<path d="M832.0 740.0 C832.0 740.0 827.7 753.0 826.0 760.0 C824.3 767.0 822.0 774.5 822.0 782.0 C822.0 789.5 823.0 797.7 826.0 805.0 C829.0 812.3 834.0 819.8 840.0 826.0 C846.0 832.2 854.3 837.7 862.0 842.0 C869.7 846.3 878.8 851.5 886.0 852.0 C893.2 852.5 901.3 849.5 905.0 845.0 C908.7 840.5 908.8 833.0 908.0 825.0 C907.2 817.0 905.0 805.2 900.0 797.0 C895.0 788.8 886.0 781.8 878.0 776.0 C870.0 770.2 858.3 766.0 852.0 762.0 C845.7 758.0 843.3 755.7 840.0 752.0 C836.7 748.3 832.0 740.0 832.0 740.0 Z" fill="none" stroke="url(#hat)" stroke-width="9" opacity="0.55" transform="translate(3 3)"/>
<path d="M846.0 758.0 C847.7 756.0 870.7 770.2 880.0 778.0 C889.3 785.8 897.3 794.7 902.0 805.0 C906.7 815.3 909.7 838.3 908.0 840.0 C906.3 841.7 898.3 823.3 892.0 815.0 C885.7 806.7 877.7 799.5 870.0 790.0 C862.3 780.5 844.3 760.0 846.0 758.0 Z" fill="#9c8468" opacity="0.9" filter="url(#b2)"/>
<path d="M830.0 765.0 C831.0 758.8 835.0 753.8 838.0 758.0 C841.0 762.2 847.0 781.0 848.0 790.0 C849.0 799.0 846.7 811.2 844.0 812.0 C841.3 812.8 834.3 802.8 832.0 795.0 C829.7 787.2 829.0 771.2 830.0 765.0 Z" fill="#b29ae0" opacity="0.95" filter="url(#b2)"/>
<path d="M842.0 812.0 C844.0 807.7 857.3 805.3 862.0 808.0 C866.7 810.7 872.0 823.7 870.0 828.0 C868.0 832.3 854.7 836.7 850.0 834.0 C845.3 831.3 840.0 816.3 842.0 812.0 Z" fill="#cbb8ee" opacity="0.9" filter="url(#b2)"/>
</g>
<path d="M832.0 740.0 C832.0 740.0 827.7 753.0 826.0 760.0 C824.3 767.0 822.0 774.5 822.0 782.0 C822.0 789.5 823.0 797.7 826.0 805.0 C829.0 812.3 834.0 819.8 840.0 826.0 C846.0 832.2 854.3 837.7 862.0 842.0 C869.7 846.3 878.8 851.5 886.0 852.0 C893.2 852.5 901.3 849.5 905.0 845.0 C908.7 840.5 908.8 833.0 908.0 825.0 C907.2 817.0 905.0 805.2 900.0 797.0 C895.0 788.8 886.0 781.8 878.0 776.0 C870.0 770.2 858.3 766.0 852.0 762.0 C845.7 758.0 843.3 755.7 840.0 752.0 C836.7 748.3 832.0 740.0 832.0 740.0 Z" fill="none" stroke="#1d0f1c" stroke-width="3" stroke-linejoin="round" stroke-linecap="round"/>
<clipPath id="c9"><path d="M905.0 677.0 C905.0 677.0 900.7 691.7 899.0 700.0 C897.3 708.3 894.8 716.7 895.0 727.0 C895.2 737.3 895.8 749.8 900.0 762.0 C904.2 774.2 912.5 789.3 920.0 800.0 C927.5 810.7 936.3 819.7 945.0 826.0 C953.7 832.3 964.8 837.7 972.0 838.0 C979.2 838.3 985.3 833.0 988.0 828.0 C990.7 823.0 990.0 816.8 988.0 808.0 C986.0 799.2 981.2 786.3 976.0 775.0 C970.8 763.7 963.8 749.7 957.0 740.0 C950.2 730.3 942.0 724.2 935.0 717.0 C928.0 709.8 920.0 703.7 915.0 697.0 C910.0 690.3 905.0 677.0 905.0 677.0 Z"/></clipPath>
<path d="M905.0 677.0 C905.0 677.0 900.7 691.7 899.0 700.0 C897.3 708.3 894.8 716.7 895.0 727.0 C895.2 737.3 895.8 749.8 900.0 762.0 C904.2 774.2 912.5 789.3 920.0 800.0 C927.5 810.7 936.3 819.7 945.0 826.0 C953.7 832.3 964.8 837.7 972.0 838.0 C979.2 838.3 985.3 833.0 988.0 828.0 C990.7 823.0 990.0 816.8 988.0 808.0 C986.0 799.2 981.2 786.3 976.0 775.0 C970.8 763.7 963.8 749.7 957.0 740.0 C950.2 730.3 942.0 724.2 935.0 717.0 C928.0 709.8 920.0 703.7 915.0 697.0 C910.0 690.3 905.0 677.0 905.0 677.0 Z" fill="#8360b8"/>
<g clip-path="url(#c9)">
<path d="M905.0 677.0 C905.0 677.0 900.7 691.7 899.0 700.0 C897.3 708.3 894.8 716.7 895.0 727.0 C895.2 737.3 895.8 749.8 900.0 762.0 C904.2 774.2 912.5 789.3 920.0 800.0 C927.5 810.7 936.3 819.7 945.0 826.0 C953.7 832.3 964.8 837.7 972.0 838.0 C979.2 838.3 985.3 833.0 988.0 828.0 C990.7 823.0 990.0 816.8 988.0 808.0 C986.0 799.2 981.2 786.3 976.0 775.0 C970.8 763.7 963.8 749.7 957.0 740.0 C950.2 730.3 942.0 724.2 935.0 717.0 C928.0 709.8 920.0 703.7 915.0 697.0 C910.0 690.3 905.0 677.0 905.0 677.0 Z" fill="url(#mot)"/>
<path d="M905.0 677.0 C905.0 677.0 900.7 691.7 899.0 700.0 C897.3 708.3 894.8 716.7 895.0 727.0 C895.2 737.3 895.8 749.8 900.0 762.0 C904.2 774.2 912.5 789.3 920.0 800.0 C927.5 810.7 936.3 819.7 945.0 826.0 C953.7 832.3 964.8 837.7 972.0 838.0 C979.2 838.3 985.3 833.0 988.0 828.0 C990.7 823.0 990.0 816.8 988.0 808.0 C986.0 799.2 981.2 786.3 976.0 775.0 C970.8 763.7 963.8 749.7 957.0 740.0 C950.2 730.3 942.0 724.2 935.0 717.0 C928.0 709.8 920.0 703.7 915.0 697.0 C910.0 690.3 905.0 677.0 905.0 677.0 Z" fill="none" stroke="#463079" stroke-width="12" filter="url(#b3)" opacity="0.9"/>
<path d="M905.0 677.0 C905.0 677.0 900.7 691.7 899.0 700.0 C897.3 708.3 894.8 716.7 895.0 727.0 C895.2 737.3 895.8 749.8 900.0 762.0 C904.2 774.2 912.5 789.3 920.0 800.0 C927.5 810.7 936.3 819.7 945.0 826.0 C953.7 832.3 964.8 837.7 972.0 838.0 C979.2 838.3 985.3 833.0 988.0 828.0 C990.7 823.0 990.0 816.8 988.0 808.0 C986.0 799.2 981.2 786.3 976.0 775.0 C970.8 763.7 963.8 749.7 957.0 740.0 C950.2 730.3 942.0 724.2 935.0 717.0 C928.0 709.8 920.0 703.7 915.0 697.0 C910.0 690.3 905.0 677.0 905.0 677.0 Z" fill="none" stroke="url(#hat)" stroke-width="9" opacity="0.55" transform="translate(3 3)"/>
<path d="M925.0 705.0 C926.3 701.7 948.8 726.7 958.0 740.0 C967.2 753.3 975.0 770.8 980.0 785.0 C985.0 799.2 989.7 823.3 988.0 825.0 C986.3 826.7 976.3 805.8 970.0 795.0 C963.7 784.2 957.5 775.0 950.0 760.0 C942.5 745.0 923.7 708.3 925.0 705.0 Z" fill="#9c8468" opacity="0.9" filter="url(#b2)"/>
<path d="M902.0 712.0 C902.3 702.8 906.3 694.5 910.0 700.0 C913.7 705.5 921.7 732.0 924.0 745.0 C926.3 758.0 926.7 776.3 924.0 778.0 C921.3 779.7 911.7 766.0 908.0 755.0 C904.3 744.0 901.7 721.2 902.0 712.0 Z" fill="#b29ae0" opacity="0.95" filter="url(#b2)"/>
<path d="M925.0 770.0 C928.3 765.8 940.0 762.5 945.0 765.0 C950.0 767.5 955.8 779.2 955.0 785.0 C954.2 790.8 945.0 799.2 940.0 800.0 C935.0 800.8 927.5 795.0 925.0 790.0 C922.5 785.0 921.7 774.2 925.0 770.0 Z" fill="#cbb8ee" opacity="0.9" filter="url(#b2)"/>
</g>
<path d="M905.0 677.0 C905.0 677.0 900.7 691.7 899.0 700.0 C897.3 708.3 894.8 716.7 895.0 727.0 C895.2 737.3 895.8 749.8 900.0 762.0 C904.2 774.2 912.5 789.3 920.0 800.0 C927.5 810.7 936.3 819.7 945.0 826.0 C953.7 832.3 964.8 837.7 972.0 838.0 C979.2 838.3 985.3 833.0 988.0 828.0 C990.7 823.0 990.0 816.8 988.0 808.0 C986.0 799.2 981.2 786.3 976.0 775.0 C970.8 763.7 963.8 749.7 957.0 740.0 C950.2 730.3 942.0 724.2 935.0 717.0 C928.0 709.8 920.0 703.7 915.0 697.0 C910.0 690.3 905.0 677.0 905.0 677.0 Z" fill="none" stroke="#1d0f1c" stroke-width="3" stroke-linejoin="round" stroke-linecap="round"/>
<clipPath id="c10"><path d="M975.0 652.0 C975.0 652.0 972.5 667.7 972.0 676.0 C971.5 684.3 969.5 689.7 972.0 702.0 C974.5 714.3 980.3 735.3 987.0 750.0 C993.7 764.7 1003.7 778.7 1012.0 790.0 C1020.3 801.3 1030.3 811.8 1037.0 818.0 C1043.7 824.2 1047.2 827.0 1052.0 827.0 C1056.8 827.0 1062.7 824.2 1066.0 818.0 C1069.3 811.8 1072.7 801.3 1072.0 790.0 C1071.3 778.7 1066.5 763.8 1062.0 750.0 C1057.5 736.2 1052.0 718.7 1045.0 707.0 C1038.0 695.3 1028.3 687.2 1020.0 680.0 C1011.7 672.8 1002.5 668.7 995.0 664.0 C987.5 659.3 975.0 652.0 975.0 652.0 Z"/></clipPath>
<path d="M975.0 652.0 C975.0 652.0 972.5 667.7 972.0 676.0 C971.5 684.3 969.5 689.7 972.0 702.0 C974.5 714.3 980.3 735.3 987.0 750.0 C993.7 764.7 1003.7 778.7 1012.0 790.0 C1020.3 801.3 1030.3 811.8 1037.0 818.0 C1043.7 824.2 1047.2 827.0 1052.0 827.0 C1056.8 827.0 1062.7 824.2 1066.0 818.0 C1069.3 811.8 1072.7 801.3 1072.0 790.0 C1071.3 778.7 1066.5 763.8 1062.0 750.0 C1057.5 736.2 1052.0 718.7 1045.0 707.0 C1038.0 695.3 1028.3 687.2 1020.0 680.0 C1011.7 672.8 1002.5 668.7 995.0 664.0 C987.5 659.3 975.0 652.0 975.0 652.0 Z" fill="#8360b8"/>
<g clip-path="url(#c10)">
<path d="M975.0 652.0 C975.0 652.0 972.5 667.7 972.0 676.0 C971.5 684.3 969.5 689.7 972.0 702.0 C974.5 714.3 980.3 735.3 987.0 750.0 C993.7 764.7 1003.7 778.7 1012.0 790.0 C1020.3 801.3 1030.3 811.8 1037.0 818.0 C1043.7 824.2 1047.2 827.0 1052.0 827.0 C1056.8 827.0 1062.7 824.2 1066.0 818.0 C1069.3 811.8 1072.7 801.3 1072.0 790.0 C1071.3 778.7 1066.5 763.8 1062.0 750.0 C1057.5 736.2 1052.0 718.7 1045.0 707.0 C1038.0 695.3 1028.3 687.2 1020.0 680.0 C1011.7 672.8 1002.5 668.7 995.0 664.0 C987.5 659.3 975.0 652.0 975.0 652.0 Z" fill="url(#mot)"/>
<path d="M975.0 652.0 C975.0 652.0 972.5 667.7 972.0 676.0 C971.5 684.3 969.5 689.7 972.0 702.0 C974.5 714.3 980.3 735.3 987.0 750.0 C993.7 764.7 1003.7 778.7 1012.0 790.0 C1020.3 801.3 1030.3 811.8 1037.0 818.0 C1043.7 824.2 1047.2 827.0 1052.0 827.0 C1056.8 827.0 1062.7 824.2 1066.0 818.0 C1069.3 811.8 1072.7 801.3 1072.0 790.0 C1071.3 778.7 1066.5 763.8 1062.0 750.0 C1057.5 736.2 1052.0 718.7 1045.0 707.0 C1038.0 695.3 1028.3 687.2 1020.0 680.0 C1011.7 672.8 1002.5 668.7 995.0 664.0 C987.5 659.3 975.0 652.0 975.0 652.0 Z" fill="none" stroke="#463079" stroke-width="12" filter="url(#b3)" opacity="0.9"/>
<path d="M975.0 652.0 C975.0 652.0 972.5 667.7 972.0 676.0 C971.5 684.3 969.5 689.7 972.0 702.0 C974.5 714.3 980.3 735.3 987.0 750.0 C993.7 764.7 1003.7 778.7 1012.0 790.0 C1020.3 801.3 1030.3 811.8 1037.0 818.0 C1043.7 824.2 1047.2 827.0 1052.0 827.0 C1056.8 827.0 1062.7 824.2 1066.0 818.0 C1069.3 811.8 1072.7 801.3 1072.0 790.0 C1071.3 778.7 1066.5 763.8 1062.0 750.0 C1057.5 736.2 1052.0 718.7 1045.0 707.0 C1038.0 695.3 1028.3 687.2 1020.0 680.0 C1011.7 672.8 1002.5 668.7 995.0 664.0 C987.5 659.3 975.0 652.0 975.0 652.0 Z" fill="none" stroke="url(#hat)" stroke-width="9" opacity="0.55" transform="translate(3 3)"/>
<path d="M1000.0 668.0 C1001.7 663.0 1034.0 689.7 1045.0 705.0 C1056.0 720.3 1061.8 742.5 1066.0 760.0 C1070.2 777.5 1072.3 807.5 1070.0 810.0 C1067.7 812.5 1057.8 787.5 1052.0 775.0 C1046.2 762.5 1043.7 752.8 1035.0 735.0 C1026.3 717.2 998.3 673.0 1000.0 668.0 Z" fill="#9c8468" opacity="0.9" filter="url(#b2)"/>
<path d="M978.0 690.0 C977.7 681.0 983.7 671.0 988.0 676.0 C992.3 681.0 1000.7 707.3 1004.0 720.0 C1007.3 732.7 1010.3 750.3 1008.0 752.0 C1005.7 753.7 995.0 740.3 990.0 730.0 C985.0 719.7 978.3 699.0 978.0 690.0 Z" fill="#b29ae0" opacity="0.95" filter="url(#b2)"/>
<path d="M1010.0 740.0 C1013.8 735.5 1029.2 731.7 1035.0 735.0 C1040.8 738.3 1045.8 753.3 1045.0 760.0 C1044.2 766.7 1035.5 774.7 1030.0 775.0 C1024.5 775.3 1015.3 767.8 1012.0 762.0 C1008.7 756.2 1006.2 744.5 1010.0 740.0 Z" fill="#cbb8ee" opacity="0.9" filter="url(#b2)"/>
</g>
<path d="M975.0 652.0 C975.0 652.0 972.5 667.7 972.0 676.0 C971.5 684.3 969.5 689.7 972.0 702.0 C974.5 714.3 980.3 735.3 987.0 750.0 C993.7 764.7 1003.7 778.7 1012.0 790.0 C1020.3 801.3 1030.3 811.8 1037.0 818.0 C1043.7 824.2 1047.2 827.0 1052.0 827.0 C1056.8 827.0 1062.7 824.2 1066.0 818.0 C1069.3 811.8 1072.7 801.3 1072.0 790.0 C1071.3 778.7 1066.5 763.8 1062.0 750.0 C1057.5 736.2 1052.0 718.7 1045.0 707.0 C1038.0 695.3 1028.3 687.2 1020.0 680.0 C1011.7 672.8 1002.5 668.7 995.0 664.0 C987.5 659.3 975.0 652.0 975.0 652.0 Z" fill="none" stroke="#1d0f1c" stroke-width="3" stroke-linejoin="round" stroke-linecap="round"/>
<g transform="translate(936 785) rotate(0) scale(1.5)" stroke="#3a2450" stroke-width="0.8" fill="none"><path d="M-6 -5 L4 6 M-2 -7 L8 4 M-8 -1 L2 8 M-7 4 L6 -6 M-3 8 L9 -3"/></g>
<g transform="translate(1028 758) rotate(10) scale(1.5)" stroke="#3a2450" stroke-width="0.8" fill="none"><path d="M-6 -5 L4 6 M-2 -7 L8 4 M-8 -1 L2 8 M-7 4 L6 -6 M-3 8 L9 -3"/></g>
<g transform="translate(856 822) rotate(0) scale(1.2000000000000002)" stroke="#3a2450" stroke-width="0.8" fill="none"><path d="M-6 -5 L4 6 M-2 -7 L8 4 M-8 -1 L2 8 M-7 4 L6 -6 M-3 8 L9 -3"/></g>
<clipPath id="c11"><path d="M1083.0 690.0 C1090.7 686.5 1100.0 684.0 1108.0 684.0 C1116.0 684.0 1126.8 680.7 1131.0 690.0 C1135.2 699.3 1133.5 727.0 1133.0 740.0 C1132.5 753.0 1132.2 761.5 1128.0 768.0 C1123.8 774.5 1116.3 778.3 1108.0 779.0 C1099.7 779.7 1086.0 778.2 1078.0 772.0 C1070.0 765.8 1062.7 753.2 1060.0 742.0 C1057.3 730.8 1058.2 713.7 1062.0 705.0 C1065.8 696.3 1075.3 693.5 1083.0 690.0 Z"/></clipPath>
<path d="M1083.0 690.0 C1090.7 686.5 1100.0 684.0 1108.0 684.0 C1116.0 684.0 1126.8 680.7 1131.0 690.0 C1135.2 699.3 1133.5 727.0 1133.0 740.0 C1132.5 753.0 1132.2 761.5 1128.0 768.0 C1123.8 774.5 1116.3 778.3 1108.0 779.0 C1099.7 779.7 1086.0 778.2 1078.0 772.0 C1070.0 765.8 1062.7 753.2 1060.0 742.0 C1057.3 730.8 1058.2 713.7 1062.0 705.0 C1065.8 696.3 1075.3 693.5 1083.0 690.0 Z" fill="#8360b8"/>
<g clip-path="url(#c11)">
<path d="M1083.0 690.0 C1090.7 686.5 1100.0 684.0 1108.0 684.0 C1116.0 684.0 1126.8 680.7 1131.0 690.0 C1135.2 699.3 1133.5 727.0 1133.0 740.0 C1132.5 753.0 1132.2 761.5 1128.0 768.0 C1123.8 774.5 1116.3 778.3 1108.0 779.0 C1099.7 779.7 1086.0 778.2 1078.0 772.0 C1070.0 765.8 1062.7 753.2 1060.0 742.0 C1057.3 730.8 1058.2 713.7 1062.0 705.0 C1065.8 696.3 1075.3 693.5 1083.0 690.0 Z" fill="url(#mot)"/>
<path d="M1083.0 690.0 C1090.7 686.5 1100.0 684.0 1108.0 684.0 C1116.0 684.0 1126.8 680.7 1131.0 690.0 C1135.2 699.3 1133.5 727.0 1133.0 740.0 C1132.5 753.0 1132.2 761.5 1128.0 768.0 C1123.8 774.5 1116.3 778.3 1108.0 779.0 C1099.7 779.7 1086.0 778.2 1078.0 772.0 C1070.0 765.8 1062.7 753.2 1060.0 742.0 C1057.3 730.8 1058.2 713.7 1062.0 705.0 C1065.8 696.3 1075.3 693.5 1083.0 690.0 Z" fill="none" stroke="#463079" stroke-width="12" filter="url(#b3)" opacity="0.9"/>
<path d="M1083.0 690.0 C1090.7 686.5 1100.0 684.0 1108.0 684.0 C1116.0 684.0 1126.8 680.7 1131.0 690.0 C1135.2 699.3 1133.5 727.0 1133.0 740.0 C1132.5 753.0 1132.2 761.5 1128.0 768.0 C1123.8 774.5 1116.3 778.3 1108.0 779.0 C1099.7 779.7 1086.0 778.2 1078.0 772.0 C1070.0 765.8 1062.7 753.2 1060.0 742.0 C1057.3 730.8 1058.2 713.7 1062.0 705.0 C1065.8 696.3 1075.3 693.5 1083.0 690.0 Z" fill="none" stroke="url(#hat)" stroke-width="9" opacity="0.55" transform="translate(3 3)"/>
<path d="M1075.0 765.0 C1078.3 763.8 1100.8 775.8 1110.0 775.0 C1119.2 774.2 1127.5 759.2 1130.0 760.0 C1132.5 760.8 1131.7 776.3 1125.0 780.0 C1118.3 783.7 1098.3 784.5 1090.0 782.0 C1081.7 779.5 1071.7 766.2 1075.0 765.0 Z" fill="#9c8468" opacity="0.9" filter="url(#b2)"/>
<path d="M1095.0 700.0 C1097.5 692.5 1111.2 694.2 1115.0 700.0 C1118.8 705.8 1120.5 727.5 1118.0 735.0 C1115.5 742.5 1103.8 750.8 1100.0 745.0 C1096.2 739.2 1092.5 707.5 1095.0 700.0 Z" fill="#b29ae0" opacity="0.8" filter="url(#b3)"/>
</g>
<path d="M1083.0 690.0 C1090.7 686.5 1100.0 684.0 1108.0 684.0 C1116.0 684.0 1126.8 680.7 1131.0 690.0 C1135.2 699.3 1133.5 727.0 1133.0 740.0 C1132.5 753.0 1132.2 761.5 1128.0 768.0 C1123.8 774.5 1116.3 778.3 1108.0 779.0 C1099.7 779.7 1086.0 778.2 1078.0 772.0 C1070.0 765.8 1062.7 753.2 1060.0 742.0 C1057.3 730.8 1058.2 713.7 1062.0 705.0 C1065.8 696.3 1075.3 693.5 1083.0 690.0 Z" fill="none" stroke="#1d0f1c" stroke-width="2.8" stroke-linejoin="round" stroke-linecap="round"/>
<clipPath id="c12"><path d="M1081.0 612.0 C1081.0 612.0 1083.2 627.0 1084.0 635.0 C1084.8 643.0 1086.8 650.8 1086.0 660.0 C1085.2 669.2 1080.5 680.7 1079.0 690.0 C1077.5 699.3 1076.3 706.7 1077.0 716.0 C1077.7 725.3 1079.2 740.0 1083.0 746.0 C1086.8 752.0 1092.5 752.3 1100.0 752.0 C1107.5 751.7 1123.5 752.7 1128.0 744.0 C1132.5 735.3 1128.7 714.0 1127.0 700.0 C1125.3 686.0 1122.5 671.3 1118.0 660.0 C1113.5 648.7 1106.2 640.0 1100.0 632.0 C1093.8 624.0 1081.0 612.0 1081.0 612.0 Z"/></clipPath>
<path d="M1081.0 612.0 C1081.0 612.0 1083.2 627.0 1084.0 635.0 C1084.8 643.0 1086.8 650.8 1086.0 660.0 C1085.2 669.2 1080.5 680.7 1079.0 690.0 C1077.5 699.3 1076.3 706.7 1077.0 716.0 C1077.7 725.3 1079.2 740.0 1083.0 746.0 C1086.8 752.0 1092.5 752.3 1100.0 752.0 C1107.5 751.7 1123.5 752.7 1128.0 744.0 C1132.5 735.3 1128.7 714.0 1127.0 700.0 C1125.3 686.0 1122.5 671.3 1118.0 660.0 C1113.5 648.7 1106.2 640.0 1100.0 632.0 C1093.8 624.0 1081.0 612.0 1081.0 612.0 Z" fill="#8360b8"/>
<g clip-path="url(#c12)">
<path d="M1081.0 612.0 C1081.0 612.0 1083.2 627.0 1084.0 635.0 C1084.8 643.0 1086.8 650.8 1086.0 660.0 C1085.2 669.2 1080.5 680.7 1079.0 690.0 C1077.5 699.3 1076.3 706.7 1077.0 716.0 C1077.7 725.3 1079.2 740.0 1083.0 746.0 C1086.8 752.0 1092.5 752.3 1100.0 752.0 C1107.5 751.7 1123.5 752.7 1128.0 744.0 C1132.5 735.3 1128.7 714.0 1127.0 700.0 C1125.3 686.0 1122.5 671.3 1118.0 660.0 C1113.5 648.7 1106.2 640.0 1100.0 632.0 C1093.8 624.0 1081.0 612.0 1081.0 612.0 Z" fill="url(#mot)"/>
<path d="M1081.0 612.0 C1081.0 612.0 1083.2 627.0 1084.0 635.0 C1084.8 643.0 1086.8 650.8 1086.0 660.0 C1085.2 669.2 1080.5 680.7 1079.0 690.0 C1077.5 699.3 1076.3 706.7 1077.0 716.0 C1077.7 725.3 1079.2 740.0 1083.0 746.0 C1086.8 752.0 1092.5 752.3 1100.0 752.0 C1107.5 751.7 1123.5 752.7 1128.0 744.0 C1132.5 735.3 1128.7 714.0 1127.0 700.0 C1125.3 686.0 1122.5 671.3 1118.0 660.0 C1113.5 648.7 1106.2 640.0 1100.0 632.0 C1093.8 624.0 1081.0 612.0 1081.0 612.0 Z" fill="none" stroke="#463079" stroke-width="12" filter="url(#b3)" opacity="0.9"/>
<path d="M1081.0 612.0 C1081.0 612.0 1083.2 627.0 1084.0 635.0 C1084.8 643.0 1086.8 650.8 1086.0 660.0 C1085.2 669.2 1080.5 680.7 1079.0 690.0 C1077.5 699.3 1076.3 706.7 1077.0 716.0 C1077.7 725.3 1079.2 740.0 1083.0 746.0 C1086.8 752.0 1092.5 752.3 1100.0 752.0 C1107.5 751.7 1123.5 752.7 1128.0 744.0 C1132.5 735.3 1128.7 714.0 1127.0 700.0 C1125.3 686.0 1122.5 671.3 1118.0 660.0 C1113.5 648.7 1106.2 640.0 1100.0 632.0 C1093.8 624.0 1081.0 612.0 1081.0 612.0 Z" fill="none" stroke="url(#hat)" stroke-width="9" opacity="0.55" transform="translate(3 3)"/>
<path d="M1086.0 640.0 C1086.3 633.7 1090.7 627.8 1094.0 632.0 C1097.3 636.2 1104.0 655.3 1106.0 665.0 C1108.0 674.7 1108.3 689.2 1106.0 690.0 C1103.7 690.8 1095.3 678.3 1092.0 670.0 C1088.7 661.7 1085.7 646.3 1086.0 640.0 Z" fill="#b29ae0" opacity="0.9" filter="url(#b2)"/>
<path d="M1095.0 705.0 C1097.5 699.2 1110.8 696.7 1115.0 700.0 C1119.2 703.3 1122.5 719.2 1120.0 725.0 C1117.5 730.8 1104.2 738.3 1100.0 735.0 C1095.8 731.7 1092.5 710.8 1095.0 705.0 Z" fill="#cbb8ee" opacity="0.8" filter="url(#b2)"/>
<path d="M1078.0 700.0 C1079.3 696.7 1084.0 712.0 1086.0 720.0 C1088.0 728.0 1091.3 744.7 1090.0 748.0 C1088.7 751.3 1080.0 748.0 1078.0 740.0 C1076.0 732.0 1076.7 703.3 1078.0 700.0 Z" fill="#9c8468" opacity="0.8" filter="url(#b2)"/>
</g>
<path d="M1081.0 612.0 C1081.0 612.0 1083.2 627.0 1084.0 635.0 C1084.8 643.0 1086.8 650.8 1086.0 660.0 C1085.2 669.2 1080.5 680.7 1079.0 690.0 C1077.5 699.3 1076.3 706.7 1077.0 716.0 C1077.7 725.3 1079.2 740.0 1083.0 746.0 C1086.8 752.0 1092.5 752.3 1100.0 752.0 C1107.5 751.7 1123.5 752.7 1128.0 744.0 C1132.5 735.3 1128.7 714.0 1127.0 700.0 C1125.3 686.0 1122.5 671.3 1118.0 660.0 C1113.5 648.7 1106.2 640.0 1100.0 632.0 C1093.8 624.0 1081.0 612.0 1081.0 612.0 Z" fill="none" stroke="#1d0f1c" stroke-width="2.8" stroke-linejoin="round" stroke-linecap="round"/>
<g transform="translate(1108 718) rotate(0) scale(1.35)" stroke="#3a2450" stroke-width="0.8" fill="none"><path d="M-6 -5 L4 6 M-2 -7 L8 4 M-8 -1 L2 8 M-7 4 L6 -6 M-3 8 L9 -3"/></g>
<clipPath id="c13"><path d="M1015.0 673.0 C1015.8 668.3 1034.5 665.0 1045.0 662.0 C1055.5 659.0 1072.8 652.0 1078.0 655.0 C1083.2 658.0 1079.0 672.5 1076.0 680.0 C1073.0 687.5 1066.0 698.3 1060.0 700.0 C1054.0 701.7 1047.5 694.5 1040.0 690.0 C1032.5 685.5 1014.2 677.7 1015.0 673.0 Z"/></clipPath>
<path d="M1015.0 673.0 C1015.8 668.3 1034.5 665.0 1045.0 662.0 C1055.5 659.0 1072.8 652.0 1078.0 655.0 C1083.2 658.0 1079.0 672.5 1076.0 680.0 C1073.0 687.5 1066.0 698.3 1060.0 700.0 C1054.0 701.7 1047.5 694.5 1040.0 690.0 C1032.5 685.5 1014.2 677.7 1015.0 673.0 Z" fill="#9a8490"/>
<g clip-path="url(#c13)">
<path d="M1015.0 673.0 C1015.8 668.3 1034.5 665.0 1045.0 662.0 C1055.5 659.0 1072.8 652.0 1078.0 655.0 C1083.2 658.0 1079.0 672.5 1076.0 680.0 C1073.0 687.5 1066.0 698.3 1060.0 700.0 C1054.0 701.7 1047.5 694.5 1040.0 690.0 C1032.5 685.5 1014.2 677.7 1015.0 673.0 Z" fill="url(#mot)"/>
<path d="M1015.0 673.0 C1015.8 668.3 1034.5 665.0 1045.0 662.0 C1055.5 659.0 1072.8 652.0 1078.0 655.0 C1083.2 658.0 1079.0 672.5 1076.0 680.0 C1073.0 687.5 1066.0 698.3 1060.0 700.0 C1054.0 701.7 1047.5 694.5 1040.0 690.0 C1032.5 685.5 1014.2 677.7 1015.0 673.0 Z" fill="none" stroke="#5a4470" stroke-width="6" filter="url(#b3)" opacity="0.9"/>
<path d="M1015.0 673.0 C1015.8 668.3 1034.5 665.0 1045.0 662.0 C1055.5 659.0 1072.8 652.0 1078.0 655.0 C1083.2 658.0 1079.0 672.5 1076.0 680.0 C1073.0 687.5 1066.0 698.3 1060.0 700.0 C1054.0 701.7 1047.5 694.5 1040.0 690.0 C1032.5 685.5 1014.2 677.7 1015.0 673.0 Z" fill="none" stroke="url(#hat)" stroke-width="9" opacity="0.55" transform="translate(3 3)"/>
</g>
<path d="M1015.0 673.0 C1015.8 668.3 1034.5 665.0 1045.0 662.0 C1055.5 659.0 1072.8 652.0 1078.0 655.0 C1083.2 658.0 1079.0 672.5 1076.0 680.0 C1073.0 687.5 1066.0 698.3 1060.0 700.0 C1054.0 701.7 1047.5 694.5 1040.0 690.0 C1032.5 685.5 1014.2 677.7 1015.0 673.0 Z" fill="none" stroke="#1d0f1c" stroke-width="2.4" stroke-linejoin="round" stroke-linecap="round"/>
<clipPath id="c14"><path d="M1067.0 547.0 C1067.0 547.0 1082.3 549.2 1089.0 551.0 C1095.7 552.8 1101.7 555.5 1107.0 558.0 C1112.3 560.5 1117.0 562.0 1121.0 566.0 C1125.0 570.0 1126.2 574.8 1131.0 582.0 C1135.8 589.2 1144.2 601.8 1150.0 609.0 C1155.8 616.2 1162.0 620.2 1166.0 625.0 C1170.0 629.8 1172.3 632.7 1174.0 638.0 C1175.7 643.3 1176.3 651.7 1176.0 657.0 C1175.7 662.3 1175.8 666.5 1172.0 670.0 C1168.2 673.5 1160.2 675.7 1153.0 678.0 C1145.8 680.3 1134.3 685.3 1129.0 684.0 C1123.7 682.7 1123.3 675.0 1121.0 670.0 C1118.7 665.0 1117.3 659.3 1115.0 654.0 C1112.7 648.7 1110.0 643.3 1107.0 638.0 C1104.0 632.7 1100.0 628.3 1097.0 622.0 C1094.0 615.7 1090.8 606.7 1089.0 600.0 C1087.2 593.3 1087.8 588.7 1086.0 582.0 C1084.2 575.3 1081.2 565.8 1078.0 560.0 C1074.8 554.2 1067.0 547.0 1067.0 547.0 Z"/></clipPath>
<path d="M1067.0 547.0 C1067.0 547.0 1082.3 549.2 1089.0 551.0 C1095.7 552.8 1101.7 555.5 1107.0 558.0 C1112.3 560.5 1117.0 562.0 1121.0 566.0 C1125.0 570.0 1126.2 574.8 1131.0 582.0 C1135.8 589.2 1144.2 601.8 1150.0 609.0 C1155.8 616.2 1162.0 620.2 1166.0 625.0 C1170.0 629.8 1172.3 632.7 1174.0 638.0 C1175.7 643.3 1176.3 651.7 1176.0 657.0 C1175.7 662.3 1175.8 666.5 1172.0 670.0 C1168.2 673.5 1160.2 675.7 1153.0 678.0 C1145.8 680.3 1134.3 685.3 1129.0 684.0 C1123.7 682.7 1123.3 675.0 1121.0 670.0 C1118.7 665.0 1117.3 659.3 1115.0 654.0 C1112.7 648.7 1110.0 643.3 1107.0 638.0 C1104.0 632.7 1100.0 628.3 1097.0 622.0 C1094.0 615.7 1090.8 606.7 1089.0 600.0 C1087.2 593.3 1087.8 588.7 1086.0 582.0 C1084.2 575.3 1081.2 565.8 1078.0 560.0 C1074.8 554.2 1067.0 547.0 1067.0 547.0 Z" fill="#8360b8"/>
<g clip-path="url(#c14)">
<path d="M1067.0 547.0 C1067.0 547.0 1082.3 549.2 1089.0 551.0 C1095.7 552.8 1101.7 555.5 1107.0 558.0 C1112.3 560.5 1117.0 562.0 1121.0 566.0 C1125.0 570.0 1126.2 574.8 1131.0 582.0 C1135.8 589.2 1144.2 601.8 1150.0 609.0 C1155.8 616.2 1162.0 620.2 1166.0 625.0 C1170.0 629.8 1172.3 632.7 1174.0 638.0 C1175.7 643.3 1176.3 651.7 1176.0 657.0 C1175.7 662.3 1175.8 666.5 1172.0 670.0 C1168.2 673.5 1160.2 675.7 1153.0 678.0 C1145.8 680.3 1134.3 685.3 1129.0 684.0 C1123.7 682.7 1123.3 675.0 1121.0 670.0 C1118.7 665.0 1117.3 659.3 1115.0 654.0 C1112.7 648.7 1110.0 643.3 1107.0 638.0 C1104.0 632.7 1100.0 628.3 1097.0 622.0 C1094.0 615.7 1090.8 606.7 1089.0 600.0 C1087.2 593.3 1087.8 588.7 1086.0 582.0 C1084.2 575.3 1081.2 565.8 1078.0 560.0 C1074.8 554.2 1067.0 547.0 1067.0 547.0 Z" fill="url(#mot)"/>
<path d="M1067.0 547.0 C1067.0 547.0 1082.3 549.2 1089.0 551.0 C1095.7 552.8 1101.7 555.5 1107.0 558.0 C1112.3 560.5 1117.0 562.0 1121.0 566.0 C1125.0 570.0 1126.2 574.8 1131.0 582.0 C1135.8 589.2 1144.2 601.8 1150.0 609.0 C1155.8 616.2 1162.0 620.2 1166.0 625.0 C1170.0 629.8 1172.3 632.7 1174.0 638.0 C1175.7 643.3 1176.3 651.7 1176.0 657.0 C1175.7 662.3 1175.8 666.5 1172.0 670.0 C1168.2 673.5 1160.2 675.7 1153.0 678.0 C1145.8 680.3 1134.3 685.3 1129.0 684.0 C1123.7 682.7 1123.3 675.0 1121.0 670.0 C1118.7 665.0 1117.3 659.3 1115.0 654.0 C1112.7 648.7 1110.0 643.3 1107.0 638.0 C1104.0 632.7 1100.0 628.3 1097.0 622.0 C1094.0 615.7 1090.8 606.7 1089.0 600.0 C1087.2 593.3 1087.8 588.7 1086.0 582.0 C1084.2 575.3 1081.2 565.8 1078.0 560.0 C1074.8 554.2 1067.0 547.0 1067.0 547.0 Z" fill="none" stroke="#463079" stroke-width="12" filter="url(#b3)" opacity="0.9"/>
<path d="M1067.0 547.0 C1067.0 547.0 1082.3 549.2 1089.0 551.0 C1095.7 552.8 1101.7 555.5 1107.0 558.0 C1112.3 560.5 1117.0 562.0 1121.0 566.0 C1125.0 570.0 1126.2 574.8 1131.0 582.0 C1135.8 589.2 1144.2 601.8 1150.0 609.0 C1155.8 616.2 1162.0 620.2 1166.0 625.0 C1170.0 629.8 1172.3 632.7 1174.0 638.0 C1175.7 643.3 1176.3 651.7 1176.0 657.0 C1175.7 662.3 1175.8 666.5 1172.0 670.0 C1168.2 673.5 1160.2 675.7 1153.0 678.0 C1145.8 680.3 1134.3 685.3 1129.0 684.0 C1123.7 682.7 1123.3 675.0 1121.0 670.0 C1118.7 665.0 1117.3 659.3 1115.0 654.0 C1112.7 648.7 1110.0 643.3 1107.0 638.0 C1104.0 632.7 1100.0 628.3 1097.0 622.0 C1094.0 615.7 1090.8 606.7 1089.0 600.0 C1087.2 593.3 1087.8 588.7 1086.0 582.0 C1084.2 575.3 1081.2 565.8 1078.0 560.0 C1074.8 554.2 1067.0 547.0 1067.0 547.0 Z" fill="none" stroke="url(#hat)" stroke-width="9" opacity="0.55" transform="translate(3 3)"/>
<path d="M1072.0 549.0 C1074.2 547.8 1086.2 549.2 1095.0 553.0 C1103.8 556.8 1123.3 569.2 1125.0 572.0 C1126.7 574.8 1112.2 572.0 1105.0 570.0 C1097.8 568.0 1087.5 563.5 1082.0 560.0 C1076.5 556.5 1069.8 550.2 1072.0 549.0 Z" fill="#9c8468" opacity="0.85" filter="url(#b2)"/>
<path d="M1110.0 590.0 C1112.7 588.7 1122.7 591.8 1128.0 596.0 C1133.3 600.2 1142.0 611.3 1142.0 615.0 C1142.0 618.7 1133.0 619.8 1128.0 618.0 C1123.0 616.2 1115.0 608.7 1112.0 604.0 C1109.0 599.3 1107.3 591.3 1110.0 590.0 Z" fill="#cbb8ee" opacity="0.9" filter="url(#b3)"/>
<path d="M1140.0 628.0 C1143.0 626.5 1153.7 631.5 1158.0 636.0 C1162.3 640.5 1167.0 651.0 1166.0 655.0 C1165.0 659.0 1156.3 661.7 1152.0 660.0 C1147.7 658.3 1142.0 650.3 1140.0 645.0 C1138.0 639.7 1137.0 629.5 1140.0 628.0 Z" fill="#cbb8ee" opacity="0.85" filter="url(#b3)"/>
<path d="M1120.0 668.0 C1123.7 665.7 1141.3 672.3 1150.0 672.0 C1158.7 671.7 1170.3 664.3 1172.0 666.0 C1173.7 667.7 1167.3 678.7 1160.0 682.0 C1152.7 685.3 1134.7 688.3 1128.0 686.0 C1121.3 683.7 1116.3 670.3 1120.0 668.0 Z" fill="#3a2268" opacity="0.7" filter="url(#b2)"/>
</g>
<path d="M1067.0 547.0 C1067.0 547.0 1082.3 549.2 1089.0 551.0 C1095.7 552.8 1101.7 555.5 1107.0 558.0 C1112.3 560.5 1117.0 562.0 1121.0 566.0 C1125.0 570.0 1126.2 574.8 1131.0 582.0 C1135.8 589.2 1144.2 601.8 1150.0 609.0 C1155.8 616.2 1162.0 620.2 1166.0 625.0 C1170.0 629.8 1172.3 632.7 1174.0 638.0 C1175.7 643.3 1176.3 651.7 1176.0 657.0 C1175.7 662.3 1175.8 666.5 1172.0 670.0 C1168.2 673.5 1160.2 675.7 1153.0 678.0 C1145.8 680.3 1134.3 685.3 1129.0 684.0 C1123.7 682.7 1123.3 675.0 1121.0 670.0 C1118.7 665.0 1117.3 659.3 1115.0 654.0 C1112.7 648.7 1110.0 643.3 1107.0 638.0 C1104.0 632.7 1100.0 628.3 1097.0 622.0 C1094.0 615.7 1090.8 606.7 1089.0 600.0 C1087.2 593.3 1087.8 588.7 1086.0 582.0 C1084.2 575.3 1081.2 565.8 1078.0 560.0 C1074.8 554.2 1067.0 547.0 1067.0 547.0 Z" fill="none" stroke="#1d0f1c" stroke-width="3" stroke-linejoin="round" stroke-linecap="round"/>
<path d="M1148.0 640.0 C1150.0 640.3 1156.7 640.7 1160.0 642.0 C1163.3 643.3 1166.7 647.0 1168.0 648.0" fill="none" stroke="#3a2450" stroke-width="1.2" stroke-linecap="round" stroke-linejoin="round" />
<path d="M1146.0 650.0 C1148.0 650.3 1154.7 650.7 1158.0 652.0 C1161.3 653.3 1164.7 657.0 1166.0 658.0" fill="none" stroke="#3a2450" stroke-width="1.2" stroke-linecap="round" stroke-linejoin="round" />
<path d="M1150.0 660.0 C1152.0 660.7 1160.0 663.3 1162.0 664.0" fill="none" stroke="#3a2450" stroke-width="1.2" stroke-linecap="round" stroke-linejoin="round" />
<clipPath id="c15"><path d="M769.1 694.3 C770.4 683.4 773.7 676.4 776.6 669.3 C779.5 662.3 782.7 656.5 786.6 651.9 C790.5 647.3 797.8 639.0 800.0 641.9 C802.3 644.8 801.8 663.1 800.0 669.3 C798.2 675.6 792.1 674.3 789.1 679.3 C786.0 684.3 784.1 690.9 781.6 699.2 C779.1 707.5 776.2 723.2 774.1 729.1 C772.0 735.0 770.0 740.4 769.1 734.6 C768.3 728.8 767.9 705.1 769.1 694.3 Z"/></clipPath>
<path d="M769.1 694.3 C770.4 683.4 773.7 676.4 776.6 669.3 C779.5 662.3 782.7 656.5 786.6 651.9 C790.5 647.3 797.8 639.0 800.0 641.9 C802.3 644.8 801.8 663.1 800.0 669.3 C798.2 675.6 792.1 674.3 789.1 679.3 C786.0 684.3 784.1 690.9 781.6 699.2 C779.1 707.5 776.2 723.2 774.1 729.1 C772.0 735.0 770.0 740.4 769.1 734.6 C768.3 728.8 767.9 705.1 769.1 694.3 Z" fill="#8360b8"/>
<g clip-path="url(#c15)">
<path d="M769.1 694.3 C770.4 683.4 773.7 676.4 776.6 669.3 C779.5 662.3 782.7 656.5 786.6 651.9 C790.5 647.3 797.8 639.0 800.0 641.9 C802.3 644.8 801.8 663.1 800.0 669.3 C798.2 675.6 792.1 674.3 789.1 679.3 C786.0 684.3 784.1 690.9 781.6 699.2 C779.1 707.5 776.2 723.2 774.1 729.1 C772.0 735.0 770.0 740.4 769.1 734.6 C768.3 728.8 767.9 705.1 769.1 694.3 Z" fill="url(#mot)"/>
<path d="M769.1 694.3 C770.4 683.4 773.7 676.4 776.6 669.3 C779.5 662.3 782.7 656.5 786.6 651.9 C790.5 647.3 797.8 639.0 800.0 641.9 C802.3 644.8 801.8 663.1 800.0 669.3 C798.2 675.6 792.1 674.3 789.1 679.3 C786.0 684.3 784.1 690.9 781.6 699.2 C779.1 707.5 776.2 723.2 774.1 729.1 C772.0 735.0 770.0 740.4 769.1 734.6 C768.3 728.8 767.9 705.1 769.1 694.3 Z" fill="none" stroke="#463079" stroke-width="12" filter="url(#b3)" opacity="0.9"/>
<path d="M769.1 694.3 C770.4 683.4 773.7 676.4 776.6 669.3 C779.5 662.3 782.7 656.5 786.6 651.9 C790.5 647.3 797.8 639.0 800.0 641.9 C802.3 644.8 801.8 663.1 800.0 669.3 C798.2 675.6 792.1 674.3 789.1 679.3 C786.0 684.3 784.1 690.9 781.6 699.2 C779.1 707.5 776.2 723.2 774.1 729.1 C772.0 735.0 770.0 740.4 769.1 734.6 C768.3 728.8 767.9 705.1 769.1 694.3 Z" fill="none" stroke="url(#hat)" stroke-width="9" opacity="0.55" transform="translate(3 3)"/>
<path d="M779.1 679.3 C780.3 674.7 786.2 671.8 789.1 669.3 C792.0 666.8 796.1 662.7 796.5 664.4 C796.9 666.0 794.0 673.9 791.5 679.3 C789.1 684.7 783.7 696.7 781.6 696.7 C779.5 696.7 777.8 683.9 779.1 679.3 Z" fill="#9c8468" opacity="0.7" filter="url(#b2)"/>
</g>
<path d="M769.1 694.3 C770.4 683.4 773.7 676.4 776.6 669.3 C779.5 662.3 782.7 656.5 786.6 651.9 C790.5 647.3 797.8 639.0 800.0 641.9 C802.3 644.8 801.8 663.1 800.0 669.3 C798.2 675.6 792.1 674.3 789.1 679.3 C786.0 684.3 784.1 690.9 781.6 699.2 C779.1 707.5 776.2 723.2 774.1 729.1 C772.0 735.0 770.0 740.4 769.1 734.6 C768.3 728.8 767.9 705.1 769.1 694.3 Z" fill="none" stroke="#1d0f1c" stroke-width="2.8" stroke-linejoin="round" stroke-linecap="round"/>
<clipPath id="c16"><path d="M728.0 625.7 C730.2 616.8 732.5 616.8 734.7 619.5 C737.0 622.2 738.7 634.7 741.7 641.9 C744.8 649.2 749.3 656.9 752.9 663.1 C756.6 669.3 760.9 674.1 763.6 679.3 C766.3 684.5 768.0 688.4 769.1 694.3 C770.2 700.1 770.4 707.5 770.4 714.2 C770.4 720.9 769.1 734.6 769.1 734.6 C769.1 734.6 763.9 731.5 760.4 727.9 C756.9 724.3 752.3 719.0 748.0 712.9 C743.6 706.9 738.6 698.4 734.3 691.8 C729.9 685.1 722.8 684.1 721.8 673.1 C720.8 662.1 725.9 634.7 728.0 625.7 Z"/></clipPath>
<path d="M728.0 625.7 C730.2 616.8 732.5 616.8 734.7 619.5 C737.0 622.2 738.7 634.7 741.7 641.9 C744.8 649.2 749.3 656.9 752.9 663.1 C756.6 669.3 760.9 674.1 763.6 679.3 C766.3 684.5 768.0 688.4 769.1 694.3 C770.2 700.1 770.4 707.5 770.4 714.2 C770.4 720.9 769.1 734.6 769.1 734.6 C769.1 734.6 763.9 731.5 760.4 727.9 C756.9 724.3 752.3 719.0 748.0 712.9 C743.6 706.9 738.6 698.4 734.3 691.8 C729.9 685.1 722.8 684.1 721.8 673.1 C720.8 662.1 725.9 634.7 728.0 625.7 Z" fill="#8360b8"/>
<g clip-path="url(#c16)">
<path d="M728.0 625.7 C730.2 616.8 732.5 616.8 734.7 619.5 C737.0 622.2 738.7 634.7 741.7 641.9 C744.8 649.2 749.3 656.9 752.9 663.1 C756.6 669.3 760.9 674.1 763.6 679.3 C766.3 684.5 768.0 688.4 769.1 694.3 C770.2 700.1 770.4 707.5 770.4 714.2 C770.4 720.9 769.1 734.6 769.1 734.6 C769.1 734.6 763.9 731.5 760.4 727.9 C756.9 724.3 752.3 719.0 748.0 712.9 C743.6 706.9 738.6 698.4 734.3 691.8 C729.9 685.1 722.8 684.1 721.8 673.1 C720.8 662.1 725.9 634.7 728.0 625.7 Z" fill="url(#mot)"/>
<path d="M728.0 625.7 C730.2 616.8 732.5 616.8 734.7 619.5 C737.0 622.2 738.7 634.7 741.7 641.9 C744.8 649.2 749.3 656.9 752.9 663.1 C756.6 669.3 760.9 674.1 763.6 679.3 C766.3 684.5 768.0 688.4 769.1 694.3 C770.2 700.1 770.4 707.5 770.4 714.2 C770.4 720.9 769.1 734.6 769.1 734.6 C769.1 734.6 763.9 731.5 760.4 727.9 C756.9 724.3 752.3 719.0 748.0 712.9 C743.6 706.9 738.6 698.4 734.3 691.8 C729.9 685.1 722.8 684.1 721.8 673.1 C720.8 662.1 725.9 634.7 728.0 625.7 Z" fill="none" stroke="#463079" stroke-width="12" filter="url(#b3)" opacity="0.9"/>
<path d="M728.0 625.7 C730.2 616.8 732.5 616.8 734.7 619.5 C737.0 622.2 738.7 634.7 741.7 641.9 C744.8 649.2 749.3 656.9 752.9 663.1 C756.6 669.3 760.9 674.1 763.6 679.3 C766.3 684.5 768.0 688.4 769.1 694.3 C770.2 700.1 770.4 707.5 770.4 714.2 C770.4 720.9 769.1 734.6 769.1 734.6 C769.1 734.6 763.9 731.5 760.4 727.9 C756.9 724.3 752.3 719.0 748.0 712.9 C743.6 706.9 738.6 698.4 734.3 691.8 C729.9 685.1 722.8 684.1 721.8 673.1 C720.8 662.1 725.9 634.7 728.0 625.7 Z" fill="none" stroke="url(#hat)" stroke-width="9" opacity="0.55" transform="translate(3 3)"/>
<path d="M731.8 629.5 C733.0 629.5 735.9 638.2 739.2 644.4 C742.6 650.7 747.7 659.8 751.7 666.8 C755.6 673.9 762.1 683.5 762.9 686.8 C763.7 690.1 760.2 690.5 756.7 686.8 C753.1 683.0 745.9 671.4 741.7 664.4 C737.6 657.3 733.4 650.2 731.8 644.4 C730.1 638.6 730.5 629.5 731.8 629.5 Z" fill="#9c8468" opacity="0.85" filter="url(#b2)"/>
<path d="M744.2 689.3 C745.5 688.9 751.1 694.3 754.2 699.2 C757.3 704.2 762.5 716.3 762.9 719.2 C763.3 722.1 759.4 719.6 756.7 716.7 C754.0 713.8 748.8 706.3 746.7 701.7 C744.6 697.2 743.0 689.7 744.2 689.3 Z" fill="#b29ae0" opacity="0.8" filter="url(#b2)"/>
</g>
<path d="M728.0 625.7 C730.2 616.8 732.5 616.8 734.7 619.5 C737.0 622.2 738.7 634.7 741.7 641.9 C744.8 649.2 749.3 656.9 752.9 663.1 C756.6 669.3 760.9 674.1 763.6 679.3 C766.3 684.5 768.0 688.4 769.1 694.3 C770.2 700.1 770.4 707.5 770.4 714.2 C770.4 720.9 769.1 734.6 769.1 734.6 C769.1 734.6 763.9 731.5 760.4 727.9 C756.9 724.3 752.3 719.0 748.0 712.9 C743.6 706.9 738.6 698.4 734.3 691.8 C729.9 685.1 722.8 684.1 721.8 673.1 C720.8 662.1 725.9 634.7 728.0 625.7 Z" fill="none" stroke="#1d0f1c" stroke-width="2.8" stroke-linejoin="round" stroke-linecap="round"/>
<clipPath id="c17"><path d="M573.6 589.6 C576.9 580.5 582.1 565.2 587.3 559.7 C592.5 554.2 598.1 553.0 604.7 556.7 C611.3 560.5 621.7 571.7 627.1 582.1 C632.5 592.6 636.3 607.5 637.1 619.5 C637.9 631.6 634.2 643.2 632.1 654.4 C630.0 665.6 629.2 678.5 624.6 686.8 C620.1 695.1 611.8 705.5 604.7 704.2 C597.6 703.0 588.1 688.4 582.3 679.3 C576.5 670.2 572.3 660.2 569.8 649.4 C567.3 638.6 566.7 624.5 567.3 614.5 C568.0 604.6 570.2 598.8 573.6 589.6 Z"/></clipPath>
<path d="M573.6 589.6 C576.9 580.5 582.1 565.2 587.3 559.7 C592.5 554.2 598.1 553.0 604.7 556.7 C611.3 560.5 621.7 571.7 627.1 582.1 C632.5 592.6 636.3 607.5 637.1 619.5 C637.9 631.6 634.2 643.2 632.1 654.4 C630.0 665.6 629.2 678.5 624.6 686.8 C620.1 695.1 611.8 705.5 604.7 704.2 C597.6 703.0 588.1 688.4 582.3 679.3 C576.5 670.2 572.3 660.2 569.8 649.4 C567.3 638.6 566.7 624.5 567.3 614.5 C568.0 604.6 570.2 598.8 573.6 589.6 Z" fill="#463079"/>
<g clip-path="url(#c17)">
<path d="M573.6 589.6 C576.9 580.5 582.1 565.2 587.3 559.7 C592.5 554.2 598.1 553.0 604.7 556.7 C611.3 560.5 621.7 571.7 627.1 582.1 C632.5 592.6 636.3 607.5 637.1 619.5 C637.9 631.6 634.2 643.2 632.1 654.4 C630.0 665.6 629.2 678.5 624.6 686.8 C620.1 695.1 611.8 705.5 604.7 704.2 C597.6 703.0 588.1 688.4 582.3 679.3 C576.5 670.2 572.3 660.2 569.8 649.4 C567.3 638.6 566.7 624.5 567.3 614.5 C568.0 604.6 570.2 598.8 573.6 589.6 Z" fill="url(#mot)"/>
<path d="M573.6 589.6 C576.9 580.5 582.1 565.2 587.3 559.7 C592.5 554.2 598.1 553.0 604.7 556.7 C611.3 560.5 621.7 571.7 627.1 582.1 C632.5 592.6 636.3 607.5 637.1 619.5 C637.9 631.6 634.2 643.2 632.1 654.4 C630.0 665.6 629.2 678.5 624.6 686.8 C620.1 695.1 611.8 705.5 604.7 704.2 C597.6 703.0 588.1 688.4 582.3 679.3 C576.5 670.2 572.3 660.2 569.8 649.4 C567.3 638.6 566.7 624.5 567.3 614.5 C568.0 604.6 570.2 598.8 573.6 589.6 Z" fill="none" stroke="#2a1850" stroke-width="10" filter="url(#b3)" opacity="0.9"/>
<path d="M573.6 589.6 C576.9 580.5 582.1 565.2 587.3 559.7 C592.5 554.2 598.1 553.0 604.7 556.7 C611.3 560.5 621.7 571.7 627.1 582.1 C632.5 592.6 636.3 607.5 637.1 619.5 C637.9 631.6 634.2 643.2 632.1 654.4 C630.0 665.6 629.2 678.5 624.6 686.8 C620.1 695.1 611.8 705.5 604.7 704.2 C597.6 703.0 588.1 688.4 582.3 679.3 C576.5 670.2 572.3 660.2 569.8 649.4 C567.3 638.6 566.7 624.5 567.3 614.5 C568.0 604.6 570.2 598.8 573.6 589.6 Z" fill="none" stroke="url(#hat)" stroke-width="9" opacity="0.55" transform="translate(3 3)"/>
</g>
<path d="M573.6 589.6 C576.9 580.5 582.1 565.2 587.3 559.7 C592.5 554.2 598.1 553.0 604.7 556.7 C611.3 560.5 621.7 571.7 627.1 582.1 C632.5 592.6 636.3 607.5 637.1 619.5 C637.9 631.6 634.2 643.2 632.1 654.4 C630.0 665.6 629.2 678.5 624.6 686.8 C620.1 695.1 611.8 705.5 604.7 704.2 C597.6 703.0 588.1 688.4 582.3 679.3 C576.5 670.2 572.3 660.2 569.8 649.4 C567.3 638.6 566.7 624.5 567.3 614.5 C568.0 604.6 570.2 598.8 573.6 589.6 Z" fill="none" stroke="#1d0f1c" stroke-width="2.2" stroke-linejoin="round" stroke-linecap="round"/>
<clipPath id="c18"><path d="M632.1 579.7 C636.3 576.5 646.6 580.1 654.5 580.9 C662.4 581.7 677.0 579.9 679.4 584.6 C681.9 589.4 670.3 601.7 669.5 609.5 C668.6 617.4 675.7 626.6 674.5 632.0 C673.2 637.4 665.7 638.2 662.0 641.9 C658.3 645.7 654.1 648.2 652.0 654.4 C650.0 660.6 651.6 673.1 649.5 679.3 C647.5 685.5 644.6 689.9 639.6 691.8 C634.6 693.6 621.7 694.3 619.7 690.5 C617.6 686.8 625.0 676.2 627.1 669.3 C629.2 662.5 630.7 656.1 632.1 649.4 C633.6 642.8 636.3 637.8 635.8 629.5 C635.4 621.2 630.2 607.9 629.6 599.6 C629.0 591.3 628.0 582.8 632.1 579.7 Z"/></clipPath>
<path d="M632.1 579.7 C636.3 576.5 646.6 580.1 654.5 580.9 C662.4 581.7 677.0 579.9 679.4 584.6 C681.9 589.4 670.3 601.7 669.5 609.5 C668.6 617.4 675.7 626.6 674.5 632.0 C673.2 637.4 665.7 638.2 662.0 641.9 C658.3 645.7 654.1 648.2 652.0 654.4 C650.0 660.6 651.6 673.1 649.5 679.3 C647.5 685.5 644.6 689.9 639.6 691.8 C634.6 693.6 621.7 694.3 619.7 690.5 C617.6 686.8 625.0 676.2 627.1 669.3 C629.2 662.5 630.7 656.1 632.1 649.4 C633.6 642.8 636.3 637.8 635.8 629.5 C635.4 621.2 630.2 607.9 629.6 599.6 C629.0 591.3 628.0 582.8 632.1 579.7 Z" fill="#6a4aa0"/>
<g clip-path="url(#c18)">
<path d="M632.1 579.7 C636.3 576.5 646.6 580.1 654.5 580.9 C662.4 581.7 677.0 579.9 679.4 584.6 C681.9 589.4 670.3 601.7 669.5 609.5 C668.6 617.4 675.7 626.6 674.5 632.0 C673.2 637.4 665.7 638.2 662.0 641.9 C658.3 645.7 654.1 648.2 652.0 654.4 C650.0 660.6 651.6 673.1 649.5 679.3 C647.5 685.5 644.6 689.9 639.6 691.8 C634.6 693.6 621.7 694.3 619.7 690.5 C617.6 686.8 625.0 676.2 627.1 669.3 C629.2 662.5 630.7 656.1 632.1 649.4 C633.6 642.8 636.3 637.8 635.8 629.5 C635.4 621.2 630.2 607.9 629.6 599.6 C629.0 591.3 628.0 582.8 632.1 579.7 Z" fill="url(#mot)"/>
<path d="M632.1 579.7 C636.3 576.5 646.6 580.1 654.5 580.9 C662.4 581.7 677.0 579.9 679.4 584.6 C681.9 589.4 670.3 601.7 669.5 609.5 C668.6 617.4 675.7 626.6 674.5 632.0 C673.2 637.4 665.7 638.2 662.0 641.9 C658.3 645.7 654.1 648.2 652.0 654.4 C650.0 660.6 651.6 673.1 649.5 679.3 C647.5 685.5 644.6 689.9 639.6 691.8 C634.6 693.6 621.7 694.3 619.7 690.5 C617.6 686.8 625.0 676.2 627.1 669.3 C629.2 662.5 630.7 656.1 632.1 649.4 C633.6 642.8 636.3 637.8 635.8 629.5 C635.4 621.2 630.2 607.9 629.6 599.6 C629.0 591.3 628.0 582.8 632.1 579.7 Z" fill="none" stroke="#35205e" stroke-width="14" filter="url(#b3)" opacity="0.9"/>
<path d="M632.1 579.7 C636.3 576.5 646.6 580.1 654.5 580.9 C662.4 581.7 677.0 579.9 679.4 584.6 C681.9 589.4 670.3 601.7 669.5 609.5 C668.6 617.4 675.7 626.6 674.5 632.0 C673.2 637.4 665.7 638.2 662.0 641.9 C658.3 645.7 654.1 648.2 652.0 654.4 C650.0 660.6 651.6 673.1 649.5 679.3 C647.5 685.5 644.6 689.9 639.6 691.8 C634.6 693.6 621.7 694.3 619.7 690.5 C617.6 686.8 625.0 676.2 627.1 669.3 C629.2 662.5 630.7 656.1 632.1 649.4 C633.6 642.8 636.3 637.8 635.8 629.5 C635.4 621.2 630.2 607.9 629.6 599.6 C629.0 591.3 628.0 582.8 632.1 579.7 Z" fill="none" stroke="url(#hat)" stroke-width="9" opacity="0.55" transform="translate(3 3)"/>
</g>
<path d="M632.1 579.7 C636.3 576.5 646.6 580.1 654.5 580.9 C662.4 581.7 677.0 579.9 679.4 584.6 C681.9 589.4 670.3 601.7 669.5 609.5 C668.6 617.4 675.7 626.6 674.5 632.0 C673.2 637.4 665.7 638.2 662.0 641.9 C658.3 645.7 654.1 648.2 652.0 654.4 C650.0 660.6 651.6 673.1 649.5 679.3 C647.5 685.5 644.6 689.9 639.6 691.8 C634.6 693.6 621.7 694.3 619.7 690.5 C617.6 686.8 625.0 676.2 627.1 669.3 C629.2 662.5 630.7 656.1 632.1 649.4 C633.6 642.8 636.3 637.8 635.8 629.5 C635.4 621.2 630.2 607.9 629.6 599.6 C629.0 591.3 628.0 582.8 632.1 579.7 Z" fill="none" stroke="#1d0f1c" stroke-width="2.6" stroke-linejoin="round" stroke-linecap="round"/>
<clipPath id="c19"><path d="M663.2 639.4 C665.9 640.1 665.7 653.6 669.5 655.6 C673.2 657.7 679.9 653.3 685.7 651.9 C691.5 650.5 698.7 647.3 704.4 647.4 C710.0 647.5 716.3 649.5 719.3 652.4 C722.3 655.3 722.7 660.8 722.3 664.9 C721.9 668.9 721.5 673.5 716.8 676.8 C712.2 680.1 702.3 682.6 694.4 684.8 C686.5 686.9 676.1 689.4 669.5 689.8 C662.8 690.1 657.9 690.2 654.5 686.8 C651.2 683.4 649.8 675.2 649.5 669.3 C649.3 663.5 651.0 656.9 653.3 651.9 C655.6 646.9 660.5 638.8 663.2 639.4 Z"/></clipPath>
<path d="M663.2 639.4 C665.9 640.1 665.7 653.6 669.5 655.6 C673.2 657.7 679.9 653.3 685.7 651.9 C691.5 650.5 698.7 647.3 704.4 647.4 C710.0 647.5 716.3 649.5 719.3 652.4 C722.3 655.3 722.7 660.8 722.3 664.9 C721.9 668.9 721.5 673.5 716.8 676.8 C712.2 680.1 702.3 682.6 694.4 684.8 C686.5 686.9 676.1 689.4 669.5 689.8 C662.8 690.1 657.9 690.2 654.5 686.8 C651.2 683.4 649.8 675.2 649.5 669.3 C649.3 663.5 651.0 656.9 653.3 651.9 C655.6 646.9 660.5 638.8 663.2 639.4 Z" fill="#8360b8"/>
<g clip-path="url(#c19)">
<path d="M663.2 639.4 C665.9 640.1 665.7 653.6 669.5 655.6 C673.2 657.7 679.9 653.3 685.7 651.9 C691.5 650.5 698.7 647.3 704.4 647.4 C710.0 647.5 716.3 649.5 719.3 652.4 C722.3 655.3 722.7 660.8 722.3 664.9 C721.9 668.9 721.5 673.5 716.8 676.8 C712.2 680.1 702.3 682.6 694.4 684.8 C686.5 686.9 676.1 689.4 669.5 689.8 C662.8 690.1 657.9 690.2 654.5 686.8 C651.2 683.4 649.8 675.2 649.5 669.3 C649.3 663.5 651.0 656.9 653.3 651.9 C655.6 646.9 660.5 638.8 663.2 639.4 Z" fill="url(#mot)"/>
<path d="M663.2 639.4 C665.9 640.1 665.7 653.6 669.5 655.6 C673.2 657.7 679.9 653.3 685.7 651.9 C691.5 650.5 698.7 647.3 704.4 647.4 C710.0 647.5 716.3 649.5 719.3 652.4 C722.3 655.3 722.7 660.8 722.3 664.9 C721.9 668.9 721.5 673.5 716.8 676.8 C712.2 680.1 702.3 682.6 694.4 684.8 C686.5 686.9 676.1 689.4 669.5 689.8 C662.8 690.1 657.9 690.2 654.5 686.8 C651.2 683.4 649.8 675.2 649.5 669.3 C649.3 663.5 651.0 656.9 653.3 651.9 C655.6 646.9 660.5 638.8 663.2 639.4 Z" fill="none" stroke="#463079" stroke-width="12" filter="url(#b3)" opacity="0.9"/>
<path d="M663.2 639.4 C665.9 640.1 665.7 653.6 669.5 655.6 C673.2 657.7 679.9 653.3 685.7 651.9 C691.5 650.5 698.7 647.3 704.4 647.4 C710.0 647.5 716.3 649.5 719.3 652.4 C722.3 655.3 722.7 660.8 722.3 664.9 C721.9 668.9 721.5 673.5 716.8 676.8 C712.2 680.1 702.3 682.6 694.4 684.8 C686.5 686.9 676.1 689.4 669.5 689.8 C662.8 690.1 657.9 690.2 654.5 686.8 C651.2 683.4 649.8 675.2 649.5 669.3 C649.3 663.5 651.0 656.9 653.3 651.9 C655.6 646.9 660.5 638.8 663.2 639.4 Z" fill="none" stroke="url(#hat)" stroke-width="9" opacity="0.55" transform="translate(3 3)"/>
<path d="M674.5 661.9 C677.0 659.4 688.6 655.4 694.4 654.4 C700.2 653.4 709.3 654.2 709.3 655.6 C709.3 657.1 699.4 660.8 694.4 663.1 C689.4 665.4 682.8 669.5 679.4 669.3 C676.1 669.1 672.0 664.4 674.5 661.9 Z" fill="#cbb8ee" opacity="0.9" filter="url(#b3)"/>
<path d="M659.5 684.3 C661.6 683.5 673.6 687.6 681.9 686.8 C690.2 685.9 707.3 679.1 709.3 679.3 C711.4 679.5 701.0 685.9 694.4 688.0 C687.7 690.1 675.3 692.4 669.5 691.8 C663.7 691.1 657.4 685.1 659.5 684.3 Z" fill="#9c8468" opacity="0.8" filter="url(#b2)"/>
</g>
<path d="M663.2 639.4 C665.9 640.1 665.7 653.6 669.5 655.6 C673.2 657.7 679.9 653.3 685.7 651.9 C691.5 650.5 698.7 647.3 704.4 647.4 C710.0 647.5 716.3 649.5 719.3 652.4 C722.3 655.3 722.7 660.8 722.3 664.9 C721.9 668.9 721.5 673.5 716.8 676.8 C712.2 680.1 702.3 682.6 694.4 684.8 C686.5 686.9 676.1 689.4 669.5 689.8 C662.8 690.1 657.9 690.2 654.5 686.8 C651.2 683.4 649.8 675.2 649.5 669.3 C649.3 663.5 651.0 656.9 653.3 651.9 C655.6 646.9 660.5 638.8 663.2 639.4 Z" fill="none" stroke="#1d0f1c" stroke-width="2.8" stroke-linejoin="round" stroke-linecap="round"/>
<clipPath id="c20"><path d="M658.3 567.2 C658.3 567.2 661.4 553.5 663.2 547.3 C665.1 541.0 665.9 535.6 669.5 529.8 C673.0 524.0 679.0 517.0 684.4 512.4 C689.8 507.8 696.1 504.7 701.9 502.4 C707.7 500.1 713.9 497.9 719.3 498.7 C724.7 499.5 730.7 503.5 734.3 507.4 C737.8 511.3 740.0 516.1 740.5 522.4 C741.0 528.6 738.7 537.7 737.2 544.8 C735.8 551.8 731.8 557.6 731.8 564.7 C731.7 571.8 736.2 579.7 736.7 587.1 C737.2 594.6 736.3 603.3 734.7 609.5 C733.2 615.8 730.7 620.7 727.3 624.5 C723.9 628.3 719.0 630.0 714.3 632.5 C709.7 635.0 704.1 637.2 699.4 639.4 C694.6 641.6 689.6 646.9 685.7 645.7 C681.7 644.4 678.4 638.0 675.7 632.0 C673.0 625.9 669.7 616.2 669.5 609.5 C669.3 602.9 672.0 597.1 674.5 592.1 C677.0 587.1 681.1 583.8 684.4 579.7 C687.7 575.5 692.7 571.3 694.4 567.2 C696.1 563.0 696.1 557.2 694.4 554.7 C692.7 552.2 688.2 551.8 684.4 552.2 C680.7 552.7 676.3 554.7 672.0 557.2 C667.6 559.7 658.3 567.2 658.3 567.2 Z"/></clipPath>
<path d="M658.3 567.2 C658.3 567.2 661.4 553.5 663.2 547.3 C665.1 541.0 665.9 535.6 669.5 529.8 C673.0 524.0 679.0 517.0 684.4 512.4 C689.8 507.8 696.1 504.7 701.9 502.4 C707.7 500.1 713.9 497.9 719.3 498.7 C724.7 499.5 730.7 503.5 734.3 507.4 C737.8 511.3 740.0 516.1 740.5 522.4 C741.0 528.6 738.7 537.7 737.2 544.8 C735.8 551.8 731.8 557.6 731.8 564.7 C731.7 571.8 736.2 579.7 736.7 587.1 C737.2 594.6 736.3 603.3 734.7 609.5 C733.2 615.8 730.7 620.7 727.3 624.5 C723.9 628.3 719.0 630.0 714.3 632.5 C709.7 635.0 704.1 637.2 699.4 639.4 C694.6 641.6 689.6 646.9 685.7 645.7 C681.7 644.4 678.4 638.0 675.7 632.0 C673.0 625.9 669.7 616.2 669.5 609.5 C669.3 602.9 672.0 597.1 674.5 592.1 C677.0 587.1 681.1 583.8 684.4 579.7 C687.7 575.5 692.7 571.3 694.4 567.2 C696.1 563.0 696.1 557.2 694.4 554.7 C692.7 552.2 688.2 551.8 684.4 552.2 C680.7 552.7 676.3 554.7 672.0 557.2 C667.6 559.7 658.3 567.2 658.3 567.2 Z" fill="#8360b8"/>
<g clip-path="url(#c20)">
<path d="M658.3 567.2 C658.3 567.2 661.4 553.5 663.2 547.3 C665.1 541.0 665.9 535.6 669.5 529.8 C673.0 524.0 679.0 517.0 684.4 512.4 C689.8 507.8 696.1 504.7 701.9 502.4 C707.7 500.1 713.9 497.9 719.3 498.7 C724.7 499.5 730.7 503.5 734.3 507.4 C737.8 511.3 740.0 516.1 740.5 522.4 C741.0 528.6 738.7 537.7 737.2 544.8 C735.8 551.8 731.8 557.6 731.8 564.7 C731.7 571.8 736.2 579.7 736.7 587.1 C737.2 594.6 736.3 603.3 734.7 609.5 C733.2 615.8 730.7 620.7 727.3 624.5 C723.9 628.3 719.0 630.0 714.3 632.5 C709.7 635.0 704.1 637.2 699.4 639.4 C694.6 641.6 689.6 646.9 685.7 645.7 C681.7 644.4 678.4 638.0 675.7 632.0 C673.0 625.9 669.7 616.2 669.5 609.5 C669.3 602.9 672.0 597.1 674.5 592.1 C677.0 587.1 681.1 583.8 684.4 579.7 C687.7 575.5 692.7 571.3 694.4 567.2 C696.1 563.0 696.1 557.2 694.4 554.7 C692.7 552.2 688.2 551.8 684.4 552.2 C680.7 552.7 676.3 554.7 672.0 557.2 C667.6 559.7 658.3 567.2 658.3 567.2 Z" fill="url(#mot)"/>
<path d="M658.3 567.2 C658.3 567.2 661.4 553.5 663.2 547.3 C665.1 541.0 665.9 535.6 669.5 529.8 C673.0 524.0 679.0 517.0 684.4 512.4 C689.8 507.8 696.1 504.7 701.9 502.4 C707.7 500.1 713.9 497.9 719.3 498.7 C724.7 499.5 730.7 503.5 734.3 507.4 C737.8 511.3 740.0 516.1 740.5 522.4 C741.0 528.6 738.7 537.7 737.2 544.8 C735.8 551.8 731.8 557.6 731.8 564.7 C731.7 571.8 736.2 579.7 736.7 587.1 C737.2 594.6 736.3 603.3 734.7 609.5 C733.2 615.8 730.7 620.7 727.3 624.5 C723.9 628.3 719.0 630.0 714.3 632.5 C709.7 635.0 704.1 637.2 699.4 639.4 C694.6 641.6 689.6 646.9 685.7 645.7 C681.7 644.4 678.4 638.0 675.7 632.0 C673.0 625.9 669.7 616.2 669.5 609.5 C669.3 602.9 672.0 597.1 674.5 592.1 C677.0 587.1 681.1 583.8 684.4 579.7 C687.7 575.5 692.7 571.3 694.4 567.2 C696.1 563.0 696.1 557.2 694.4 554.7 C692.7 552.2 688.2 551.8 684.4 552.2 C680.7 552.7 676.3 554.7 672.0 557.2 C667.6 559.7 658.3 567.2 658.3 567.2 Z" fill="none" stroke="#463079" stroke-width="12" filter="url(#b3)" opacity="0.9"/>
<path d="M658.3 567.2 C658.3 567.2 661.4 553.5 663.2 547.3 C665.1 541.0 665.9 535.6 669.5 529.8 C673.0 524.0 679.0 517.0 684.4 512.4 C689.8 507.8 696.1 504.7 701.9 502.4 C707.7 500.1 713.9 497.9 719.3 498.7 C724.7 499.5 730.7 503.5 734.3 507.4 C737.8 511.3 740.0 516.1 740.5 522.4 C741.0 528.6 738.7 537.7 737.2 544.8 C735.8 551.8 731.8 557.6 731.8 564.7 C731.7 571.8 736.2 579.7 736.7 587.1 C737.2 594.6 736.3 603.3 734.7 609.5 C733.2 615.8 730.7 620.7 727.3 624.5 C723.9 628.3 719.0 630.0 714.3 632.5 C709.7 635.0 704.1 637.2 699.4 639.4 C694.6 641.6 689.6 646.9 685.7 645.7 C681.7 644.4 678.4 638.0 675.7 632.0 C673.0 625.9 669.7 616.2 669.5 609.5 C669.3 602.9 672.0 597.1 674.5 592.1 C677.0 587.1 681.1 583.8 684.4 579.7 C687.7 575.5 692.7 571.3 694.4 567.2 C696.1 563.0 696.1 557.2 694.4 554.7 C692.7 552.2 688.2 551.8 684.4 552.2 C680.7 552.7 676.3 554.7 672.0 557.2 C667.6 559.7 658.3 567.2 658.3 567.2 Z" fill="none" stroke="url(#hat)" stroke-width="9" opacity="0.55" transform="translate(3 3)"/>
<path d="M694.4 503.7 C695.2 501.6 711.8 498.5 719.3 499.9 C726.8 501.4 736.3 504.9 739.2 512.4 C742.1 519.9 738.8 541.9 736.7 544.8 C734.7 547.7 730.5 535.2 726.8 529.8 C723.0 524.4 719.7 516.7 714.3 512.4 C708.9 508.0 693.6 505.7 694.4 503.7 Z" fill="#9c8468" opacity="0.85" filter="url(#b3)"/>
<path d="M694.4 597.1 C696.9 592.9 705.6 589.2 709.3 589.6 C713.1 590.0 716.8 595.4 716.8 599.6 C716.8 603.7 713.1 612.0 709.3 614.5 C705.6 617.0 696.9 617.4 694.4 614.5 C691.9 611.6 691.9 601.2 694.4 597.1 Z" fill="#cbb8ee" opacity="0.95" filter="url(#b3)"/>
<path d="M667.0 544.8 C669.3 538.5 675.3 526.1 679.4 522.4 C683.6 518.6 691.9 518.6 691.9 522.4 C691.9 526.1 683.8 538.5 679.4 544.8 C675.1 551.0 667.8 559.7 665.7 559.7 C663.7 559.7 664.7 551.0 667.0 544.8 Z" fill="#b29ae0" opacity="0.95" filter="url(#b2)"/>
<path d="M729.3 579.7 C730.7 578.0 735.9 583.8 736.7 589.6 C737.6 595.4 735.9 608.7 734.3 614.5 C732.6 620.3 727.8 627.0 726.8 624.5 C725.7 622.0 727.6 607.1 728.0 599.6 C728.4 592.1 727.8 581.3 729.3 579.7 Z" fill="#9c8468" opacity="0.7" filter="url(#b2)"/>
</g>
<path d="M658.3 567.2 C658.3 567.2 661.4 553.5 663.2 547.3 C665.1 541.0 665.9 535.6 669.5 529.8 C673.0 524.0 679.0 517.0 684.4 512.4 C689.8 507.8 696.1 504.7 701.9 502.4 C707.7 500.1 713.9 497.9 719.3 498.7 C724.7 499.5 730.7 503.5 734.3 507.4 C737.8 511.3 740.0 516.1 740.5 522.4 C741.0 528.6 738.7 537.7 737.2 544.8 C735.8 551.8 731.8 557.6 731.8 564.7 C731.7 571.8 736.2 579.7 736.7 587.1 C737.2 594.6 736.3 603.3 734.7 609.5 C733.2 615.8 730.7 620.7 727.3 624.5 C723.9 628.3 719.0 630.0 714.3 632.5 C709.7 635.0 704.1 637.2 699.4 639.4 C694.6 641.6 689.6 646.9 685.7 645.7 C681.7 644.4 678.4 638.0 675.7 632.0 C673.0 625.9 669.7 616.2 669.5 609.5 C669.3 602.9 672.0 597.1 674.5 592.1 C677.0 587.1 681.1 583.8 684.4 579.7 C687.7 575.5 692.7 571.3 694.4 567.2 C696.1 563.0 696.1 557.2 694.4 554.7 C692.7 552.2 688.2 551.8 684.4 552.2 C680.7 552.7 676.3 554.7 672.0 557.2 C667.6 559.7 658.3 567.2 658.3 567.2 Z" fill="none" stroke="#1d0f1c" stroke-width="3" stroke-linejoin="round" stroke-linecap="round"/>
<g transform="translate(705.6003986048829 514.8779272546088) rotate(0) scale(1.35)" stroke="#3a2450" stroke-width="0.8" fill="none"><path d="M-6 -5 L4 6 M-2 -7 L8 4 M-8 -1 L2 8 M-7 4 L6 -6 M-3 8 L9 -3"/></g>
<clipPath id="c21"><path d="M602.2 494.9 C602.2 494.9 588.3 499.3 582.3 502.4 C576.3 505.5 570.2 509.1 566.1 513.6 C561.9 518.2 559.9 523.4 557.4 529.8 C554.9 536.3 553.4 545.6 551.1 552.2 C548.9 558.9 546.2 564.1 543.7 569.7 C541.2 575.3 536.9 581.3 536.2 585.9 C535.5 590.4 536.5 594.4 539.4 597.1 C542.3 599.8 548.6 603.1 553.6 602.1 C558.7 601.0 565.5 595.2 569.8 590.9 C574.2 586.5 577.2 581.5 579.8 575.9 C582.4 570.3 582.8 563.7 585.3 557.2 C587.8 550.8 592.4 544.4 594.7 537.3 C597.1 530.2 598.0 521.9 599.2 514.9 C600.5 507.8 602.2 494.9 602.2 494.9 Z"/></clipPath>
<path d="M602.2 494.9 C602.2 494.9 588.3 499.3 582.3 502.4 C576.3 505.5 570.2 509.1 566.1 513.6 C561.9 518.2 559.9 523.4 557.4 529.8 C554.9 536.3 553.4 545.6 551.1 552.2 C548.9 558.9 546.2 564.1 543.7 569.7 C541.2 575.3 536.9 581.3 536.2 585.9 C535.5 590.4 536.5 594.4 539.4 597.1 C542.3 599.8 548.6 603.1 553.6 602.1 C558.7 601.0 565.5 595.2 569.8 590.9 C574.2 586.5 577.2 581.5 579.8 575.9 C582.4 570.3 582.8 563.7 585.3 557.2 C587.8 550.8 592.4 544.4 594.7 537.3 C597.1 530.2 598.0 521.9 599.2 514.9 C600.5 507.8 602.2 494.9 602.2 494.9 Z" fill="#8360b8"/>
<g clip-path="url(#c21)">
<path d="M602.2 494.9 C602.2 494.9 588.3 499.3 582.3 502.4 C576.3 505.5 570.2 509.1 566.1 513.6 C561.9 518.2 559.9 523.4 557.4 529.8 C554.9 536.3 553.4 545.6 551.1 552.2 C548.9 558.9 546.2 564.1 543.7 569.7 C541.2 575.3 536.9 581.3 536.2 585.9 C535.5 590.4 536.5 594.4 539.4 597.1 C542.3 599.8 548.6 603.1 553.6 602.1 C558.7 601.0 565.5 595.2 569.8 590.9 C574.2 586.5 577.2 581.5 579.8 575.9 C582.4 570.3 582.8 563.7 585.3 557.2 C587.8 550.8 592.4 544.4 594.7 537.3 C597.1 530.2 598.0 521.9 599.2 514.9 C600.5 507.8 602.2 494.9 602.2 494.9 Z" fill="url(#mot)"/>
<path d="M602.2 494.9 C602.2 494.9 588.3 499.3 582.3 502.4 C576.3 505.5 570.2 509.1 566.1 513.6 C561.9 518.2 559.9 523.4 557.4 529.8 C554.9 536.3 553.4 545.6 551.1 552.2 C548.9 558.9 546.2 564.1 543.7 569.7 C541.2 575.3 536.9 581.3 536.2 585.9 C535.5 590.4 536.5 594.4 539.4 597.1 C542.3 599.8 548.6 603.1 553.6 602.1 C558.7 601.0 565.5 595.2 569.8 590.9 C574.2 586.5 577.2 581.5 579.8 575.9 C582.4 570.3 582.8 563.7 585.3 557.2 C587.8 550.8 592.4 544.4 594.7 537.3 C597.1 530.2 598.0 521.9 599.2 514.9 C600.5 507.8 602.2 494.9 602.2 494.9 Z" fill="none" stroke="#463079" stroke-width="12" filter="url(#b3)" opacity="0.9"/>
<path d="M602.2 494.9 C602.2 494.9 588.3 499.3 582.3 502.4 C576.3 505.5 570.2 509.1 566.1 513.6 C561.9 518.2 559.9 523.4 557.4 529.8 C554.9 536.3 553.4 545.6 551.1 552.2 C548.9 558.9 546.2 564.1 543.7 569.7 C541.2 575.3 536.9 581.3 536.2 585.9 C535.5 590.4 536.5 594.4 539.4 597.1 C542.3 599.8 548.6 603.1 553.6 602.1 C558.7 601.0 565.5 595.2 569.8 590.9 C574.2 586.5 577.2 581.5 579.8 575.9 C582.4 570.3 582.8 563.7 585.3 557.2 C587.8 550.8 592.4 544.4 594.7 537.3 C597.1 530.2 598.0 521.9 599.2 514.9 C600.5 507.8 602.2 494.9 602.2 494.9 Z" fill="none" stroke="url(#hat)" stroke-width="9" opacity="0.55" transform="translate(3 3)"/>
<path d="M567.3 522.4 C571.1 517.4 579.4 508.6 582.3 509.9 C585.2 511.1 586.8 522.4 584.8 529.8 C582.7 537.3 574.4 549.3 569.8 554.7 C565.3 560.1 559.0 564.7 557.4 562.2 C555.7 559.7 558.2 546.4 559.9 539.8 C561.5 533.1 563.6 527.3 567.3 522.4 Z" fill="#b29ae0" opacity="0.9" filter="url(#b3)"/>
<path d="M592.2 504.9 C594.1 497.2 600.1 495.4 601.0 498.7 C601.9 502.0 599.6 517.2 597.7 524.8 C595.9 532.5 590.7 548.1 589.8 544.8 C588.8 541.5 590.4 512.6 592.2 504.9 Z" fill="#9c8468" opacity="0.75" filter="url(#b2)"/>
</g>
<path d="M602.2 494.9 C602.2 494.9 588.3 499.3 582.3 502.4 C576.3 505.5 570.2 509.1 566.1 513.6 C561.9 518.2 559.9 523.4 557.4 529.8 C554.9 536.3 553.4 545.6 551.1 552.2 C548.9 558.9 546.2 564.1 543.7 569.7 C541.2 575.3 536.9 581.3 536.2 585.9 C535.5 590.4 536.5 594.4 539.4 597.1 C542.3 599.8 548.6 603.1 553.6 602.1 C558.7 601.0 565.5 595.2 569.8 590.9 C574.2 586.5 577.2 581.5 579.8 575.9 C582.4 570.3 582.8 563.7 585.3 557.2 C587.8 550.8 592.4 544.4 594.7 537.3 C597.1 530.2 598.0 521.9 599.2 514.9 C600.5 507.8 602.2 494.9 602.2 494.9 Z" fill="none" stroke="#1d0f1c" stroke-width="3" stroke-linejoin="round" stroke-linecap="round"/>
<g transform="translate(566.0886895864475 542.2820129546587) rotate(0) scale(1.35)" stroke="#3a2450" stroke-width="0.8" fill="none"><path d="M-6 -5 L4 6 M-2 -7 L8 4 M-8 -1 L2 8 M-7 4 L6 -6 M-3 8 L9 -3"/></g>
<clipPath id="c22"><path d="M598.5 519.9 C602.4 512.6 609.1 512.8 614.7 511.1 C620.3 509.5 626.1 509.3 632.1 509.9 C638.1 510.5 645.0 512.1 650.8 514.9 C656.6 517.7 667.0 526.6 667.0 526.6 C667.0 526.6 657.9 528.7 653.3 529.8 C648.7 531.0 644.4 531.5 639.6 533.6 C634.8 535.6 630.0 538.8 624.6 542.3 C619.2 545.8 612.8 552.7 607.2 554.7 C601.6 556.8 592.5 560.6 591.0 554.7 C589.5 548.9 594.5 527.1 598.5 519.9 Z"/></clipPath>
<path d="M598.5 519.9 C602.4 512.6 609.1 512.8 614.7 511.1 C620.3 509.5 626.1 509.3 632.1 509.9 C638.1 510.5 645.0 512.1 650.8 514.9 C656.6 517.7 667.0 526.6 667.0 526.6 C667.0 526.6 657.9 528.7 653.3 529.8 C648.7 531.0 644.4 531.5 639.6 533.6 C634.8 535.6 630.0 538.8 624.6 542.3 C619.2 545.8 612.8 552.7 607.2 554.7 C601.6 556.8 592.5 560.6 591.0 554.7 C589.5 548.9 594.5 527.1 598.5 519.9 Z" fill="#8360b8"/>
<g clip-path="url(#c22)">
<path d="M598.5 519.9 C602.4 512.6 609.1 512.8 614.7 511.1 C620.3 509.5 626.1 509.3 632.1 509.9 C638.1 510.5 645.0 512.1 650.8 514.9 C656.6 517.7 667.0 526.6 667.0 526.6 C667.0 526.6 657.9 528.7 653.3 529.8 C648.7 531.0 644.4 531.5 639.6 533.6 C634.8 535.6 630.0 538.8 624.6 542.3 C619.2 545.8 612.8 552.7 607.2 554.7 C601.6 556.8 592.5 560.6 591.0 554.7 C589.5 548.9 594.5 527.1 598.5 519.9 Z" fill="url(#mot)"/>
<path d="M598.5 519.9 C602.4 512.6 609.1 512.8 614.7 511.1 C620.3 509.5 626.1 509.3 632.1 509.9 C638.1 510.5 645.0 512.1 650.8 514.9 C656.6 517.7 667.0 526.6 667.0 526.6 C667.0 526.6 657.9 528.7 653.3 529.8 C648.7 531.0 644.4 531.5 639.6 533.6 C634.8 535.6 630.0 538.8 624.6 542.3 C619.2 545.8 612.8 552.7 607.2 554.7 C601.6 556.8 592.5 560.6 591.0 554.7 C589.5 548.9 594.5 527.1 598.5 519.9 Z" fill="none" stroke="#463079" stroke-width="12" filter="url(#b3)" opacity="0.9"/>
<path d="M598.5 519.9 C602.4 512.6 609.1 512.8 614.7 511.1 C620.3 509.5 626.1 509.3 632.1 509.9 C638.1 510.5 645.0 512.1 650.8 514.9 C656.6 517.7 667.0 526.6 667.0 526.6 C667.0 526.6 657.9 528.7 653.3 529.8 C648.7 531.0 644.4 531.5 639.6 533.6 C634.8 535.6 630.0 538.8 624.6 542.3 C619.2 545.8 612.8 552.7 607.2 554.7 C601.6 556.8 592.5 560.6 591.0 554.7 C589.5 548.9 594.5 527.1 598.5 519.9 Z" fill="none" stroke="url(#hat)" stroke-width="9" opacity="0.55" transform="translate(3 3)"/>
<path d="M604.7 524.8 C608.0 520.9 618.4 517.2 624.6 516.1 C630.9 515.1 642.1 516.3 642.1 518.6 C642.1 520.9 630.9 526.3 624.6 529.8 C618.4 533.4 608.0 540.6 604.7 539.8 C601.4 539.0 601.4 528.8 604.7 524.8 Z" fill="#b29ae0" opacity="0.9" filter="url(#b2)"/>
<path d="M639.6 517.4 C640.4 516.1 650.2 518.3 654.5 519.9 C658.9 521.4 666.6 525.6 665.7 526.8 C664.9 528.1 653.9 528.9 649.5 527.3 C645.2 525.8 638.8 518.6 639.6 517.4 Z" fill="#9c8468" opacity="0.7" filter="url(#b2)"/>
</g>
<path d="M598.5 519.9 C602.4 512.6 609.1 512.8 614.7 511.1 C620.3 509.5 626.1 509.3 632.1 509.9 C638.1 510.5 645.0 512.1 650.8 514.9 C656.6 517.7 667.0 526.6 667.0 526.6 C667.0 526.6 657.9 528.7 653.3 529.8 C648.7 531.0 644.4 531.5 639.6 533.6 C634.8 535.6 630.0 538.8 624.6 542.3 C619.2 545.8 612.8 552.7 607.2 554.7 C601.6 556.8 592.5 560.6 591.0 554.7 C589.5 548.9 594.5 527.1 598.5 519.9 Z" fill="none" stroke="#1d0f1c" stroke-width="3" stroke-linejoin="round" stroke-linecap="round"/>
<clipPath id="c23"><path d="M644.6 554.7 C644.6 554.7 634.6 554.7 629.6 556.0 C624.6 557.2 619.7 559.1 614.7 562.2 C609.7 565.3 604.5 569.7 599.7 574.7 C594.9 579.7 591.0 585.5 586.0 592.1 C581.0 598.8 575.0 607.9 569.8 614.5 C564.6 621.2 559.0 626.8 554.9 632.0 C550.7 637.2 546.7 640.9 544.9 645.7 C543.2 650.4 543.4 657.0 544.4 660.6 C545.5 664.2 547.1 666.9 551.1 667.3 C555.2 667.8 563.2 666.3 568.6 663.1 C574.0 659.9 579.0 653.8 583.5 648.2 C588.1 642.6 592.2 634.5 596.0 629.5 C599.7 624.5 602.0 623.2 605.9 618.3 C609.9 613.3 615.7 605.2 619.7 599.6 C623.6 594.0 626.8 589.8 629.6 584.6 C632.4 579.4 634.1 573.4 636.6 568.4 C639.1 563.5 644.6 554.7 644.6 554.7 Z"/></clipPath>
<path d="M644.6 554.7 C644.6 554.7 634.6 554.7 629.6 556.0 C624.6 557.2 619.7 559.1 614.7 562.2 C609.7 565.3 604.5 569.7 599.7 574.7 C594.9 579.7 591.0 585.5 586.0 592.1 C581.0 598.8 575.0 607.9 569.8 614.5 C564.6 621.2 559.0 626.8 554.9 632.0 C550.7 637.2 546.7 640.9 544.9 645.7 C543.2 650.4 543.4 657.0 544.4 660.6 C545.5 664.2 547.1 666.9 551.1 667.3 C555.2 667.8 563.2 666.3 568.6 663.1 C574.0 659.9 579.0 653.8 583.5 648.2 C588.1 642.6 592.2 634.5 596.0 629.5 C599.7 624.5 602.0 623.2 605.9 618.3 C609.9 613.3 615.7 605.2 619.7 599.6 C623.6 594.0 626.8 589.8 629.6 584.6 C632.4 579.4 634.1 573.4 636.6 568.4 C639.1 563.5 644.6 554.7 644.6 554.7 Z" fill="#8360b8"/>
<g clip-path="url(#c23)">
<path d="M644.6 554.7 C644.6 554.7 634.6 554.7 629.6 556.0 C624.6 557.2 619.7 559.1 614.7 562.2 C609.7 565.3 604.5 569.7 599.7 574.7 C594.9 579.7 591.0 585.5 586.0 592.1 C581.0 598.8 575.0 607.9 569.8 614.5 C564.6 621.2 559.0 626.8 554.9 632.0 C550.7 637.2 546.7 640.9 544.9 645.7 C543.2 650.4 543.4 657.0 544.4 660.6 C545.5 664.2 547.1 666.9 551.1 667.3 C555.2 667.8 563.2 666.3 568.6 663.1 C574.0 659.9 579.0 653.8 583.5 648.2 C588.1 642.6 592.2 634.5 596.0 629.5 C599.7 624.5 602.0 623.2 605.9 618.3 C609.9 613.3 615.7 605.2 619.7 599.6 C623.6 594.0 626.8 589.8 629.6 584.6 C632.4 579.4 634.1 573.4 636.6 568.4 C639.1 563.5 644.6 554.7 644.6 554.7 Z" fill="url(#mot)"/>
<path d="M644.6 554.7 C644.6 554.7 634.6 554.7 629.6 556.0 C624.6 557.2 619.7 559.1 614.7 562.2 C609.7 565.3 604.5 569.7 599.7 574.7 C594.9 579.7 591.0 585.5 586.0 592.1 C581.0 598.8 575.0 607.9 569.8 614.5 C564.6 621.2 559.0 626.8 554.9 632.0 C550.7 637.2 546.7 640.9 544.9 645.7 C543.2 650.4 543.4 657.0 544.4 660.6 C545.5 664.2 547.1 666.9 551.1 667.3 C555.2 667.8 563.2 666.3 568.6 663.1 C574.0 659.9 579.0 653.8 583.5 648.2 C588.1 642.6 592.2 634.5 596.0 629.5 C599.7 624.5 602.0 623.2 605.9 618.3 C609.9 613.3 615.7 605.2 619.7 599.6 C623.6 594.0 626.8 589.8 629.6 584.6 C632.4 579.4 634.1 573.4 636.6 568.4 C639.1 563.5 644.6 554.7 644.6 554.7 Z" fill="none" stroke="#463079" stroke-width="12" filter="url(#b3)" opacity="0.9"/>
<path d="M644.6 554.7 C644.6 554.7 634.6 554.7 629.6 556.0 C624.6 557.2 619.7 559.1 614.7 562.2 C609.7 565.3 604.5 569.7 599.7 574.7 C594.9 579.7 591.0 585.5 586.0 592.1 C581.0 598.8 575.0 607.9 569.8 614.5 C564.6 621.2 559.0 626.8 554.9 632.0 C550.7 637.2 546.7 640.9 544.9 645.7 C543.2 650.4 543.4 657.0 544.4 660.6 C545.5 664.2 547.1 666.9 551.1 667.3 C555.2 667.8 563.2 666.3 568.6 663.1 C574.0 659.9 579.0 653.8 583.5 648.2 C588.1 642.6 592.2 634.5 596.0 629.5 C599.7 624.5 602.0 623.2 605.9 618.3 C609.9 613.3 615.7 605.2 619.7 599.6 C623.6 594.0 626.8 589.8 629.6 584.6 C632.4 579.4 634.1 573.4 636.6 568.4 C639.1 563.5 644.6 554.7 644.6 554.7 Z" fill="none" stroke="url(#hat)" stroke-width="9" opacity="0.55" transform="translate(3 3)"/>
<path d="M594.7 587.1 C602.2 577.6 608.0 571.8 612.2 569.7 C616.3 567.6 621.3 570.1 619.7 574.7 C618.0 579.2 609.3 588.8 602.2 597.1 C595.2 605.4 583.1 619.5 577.3 624.5 C571.5 629.5 564.4 633.2 567.3 627.0 C570.2 620.8 587.3 596.7 594.7 587.1 Z" fill="#b29ae0" opacity="0.9" filter="url(#b3)"/>
<path d="M619.7 562.2 C623.4 558.5 640.0 554.3 642.1 557.2 C644.1 560.1 636.7 572.2 632.1 579.7 C627.5 587.1 616.7 602.1 614.7 602.1 C612.6 602.1 618.8 586.3 619.7 579.7 C620.5 573.0 615.9 565.9 619.7 562.2 Z" fill="#9c8468" opacity="0.8" filter="url(#b2)"/>
<path d="M552.4 641.9 C554.0 637.4 564.4 629.1 567.3 629.5 C570.2 629.9 571.5 639.9 569.8 644.4 C568.2 649.0 560.3 657.3 557.4 656.9 C554.5 656.5 550.7 646.5 552.4 641.9 Z" fill="#cbb8ee" opacity="0.8" filter="url(#b2)"/>
</g>
<path d="M644.6 554.7 C644.6 554.7 634.6 554.7 629.6 556.0 C624.6 557.2 619.7 559.1 614.7 562.2 C609.7 565.3 604.5 569.7 599.7 574.7 C594.9 579.7 591.0 585.5 586.0 592.1 C581.0 598.8 575.0 607.9 569.8 614.5 C564.6 621.2 559.0 626.8 554.9 632.0 C550.7 637.2 546.7 640.9 544.9 645.7 C543.2 650.4 543.4 657.0 544.4 660.6 C545.5 664.2 547.1 666.9 551.1 667.3 C555.2 667.8 563.2 666.3 568.6 663.1 C574.0 659.9 579.0 653.8 583.5 648.2 C588.1 642.6 592.2 634.5 596.0 629.5 C599.7 624.5 602.0 623.2 605.9 618.3 C609.9 613.3 615.7 605.2 619.7 599.6 C623.6 594.0 626.8 589.8 629.6 584.6 C632.4 579.4 634.1 573.4 636.6 568.4 C639.1 563.5 644.6 554.7 644.6 554.7 Z" fill="none" stroke="#1d0f1c" stroke-width="3" stroke-linejoin="round" stroke-linecap="round"/>
<g transform="translate(582.2820129546587 609.54658694569) rotate(0) scale(1.35)" stroke="#3a2450" stroke-width="0.8" fill="none"><path d="M-6 -5 L4 6 M-2 -7 L8 4 M-8 -1 L2 8 M-7 4 L6 -6 M-3 8 L9 -3"/></g>
<clipPath id="c24"><path d="M636.6 623.2 C636.6 623.2 628.7 625.1 624.6 627.0 C620.6 628.9 616.7 631.1 612.2 634.5 C607.6 637.8 602.2 642.7 597.2 646.9 C592.2 651.2 587.3 655.2 582.3 659.9 C577.3 664.5 571.3 669.5 567.3 674.8 C563.4 680.1 560.3 686.0 558.6 691.8 C557.0 697.5 556.7 704.0 557.4 709.2 C558.1 714.4 559.4 719.8 562.9 722.9 C566.3 726.0 572.8 728.5 577.8 727.9 C582.8 727.3 587.8 723.1 592.7 719.2 C597.7 715.2 603.1 709.3 607.7 704.2 C612.3 699.1 616.8 694.6 620.1 688.8 C623.5 683.0 625.6 675.9 627.6 669.3 C629.6 662.8 630.9 655.2 632.1 649.4 C633.4 643.6 634.3 638.8 635.1 634.5 C635.8 630.1 636.6 623.2 636.6 623.2 Z"/></clipPath>
<path d="M636.6 623.2 C636.6 623.2 628.7 625.1 624.6 627.0 C620.6 628.9 616.7 631.1 612.2 634.5 C607.6 637.8 602.2 642.7 597.2 646.9 C592.2 651.2 587.3 655.2 582.3 659.9 C577.3 664.5 571.3 669.5 567.3 674.8 C563.4 680.1 560.3 686.0 558.6 691.8 C557.0 697.5 556.7 704.0 557.4 709.2 C558.1 714.4 559.4 719.8 562.9 722.9 C566.3 726.0 572.8 728.5 577.8 727.9 C582.8 727.3 587.8 723.1 592.7 719.2 C597.7 715.2 603.1 709.3 607.7 704.2 C612.3 699.1 616.8 694.6 620.1 688.8 C623.5 683.0 625.6 675.9 627.6 669.3 C629.6 662.8 630.9 655.2 632.1 649.4 C633.4 643.6 634.3 638.8 635.1 634.5 C635.8 630.1 636.6 623.2 636.6 623.2 Z" fill="#8360b8"/>
<g clip-path="url(#c24)">
<path d="M636.6 623.2 C636.6 623.2 628.7 625.1 624.6 627.0 C620.6 628.9 616.7 631.1 612.2 634.5 C607.6 637.8 602.2 642.7 597.2 646.9 C592.2 651.2 587.3 655.2 582.3 659.9 C577.3 664.5 571.3 669.5 567.3 674.8 C563.4 680.1 560.3 686.0 558.6 691.8 C557.0 697.5 556.7 704.0 557.4 709.2 C558.1 714.4 559.4 719.8 562.9 722.9 C566.3 726.0 572.8 728.5 577.8 727.9 C582.8 727.3 587.8 723.1 592.7 719.2 C597.7 715.2 603.1 709.3 607.7 704.2 C612.3 699.1 616.8 694.6 620.1 688.8 C623.5 683.0 625.6 675.9 627.6 669.3 C629.6 662.8 630.9 655.2 632.1 649.4 C633.4 643.6 634.3 638.8 635.1 634.5 C635.8 630.1 636.6 623.2 636.6 623.2 Z" fill="url(#mot)"/>
<path d="M636.6 623.2 C636.6 623.2 628.7 625.1 624.6 627.0 C620.6 628.9 616.7 631.1 612.2 634.5 C607.6 637.8 602.2 642.7 597.2 646.9 C592.2 651.2 587.3 655.2 582.3 659.9 C577.3 664.5 571.3 669.5 567.3 674.8 C563.4 680.1 560.3 686.0 558.6 691.8 C557.0 697.5 556.7 704.0 557.4 709.2 C558.1 714.4 559.4 719.8 562.9 722.9 C566.3 726.0 572.8 728.5 577.8 727.9 C582.8 727.3 587.8 723.1 592.7 719.2 C597.7 715.2 603.1 709.3 607.7 704.2 C612.3 699.1 616.8 694.6 620.1 688.8 C623.5 683.0 625.6 675.9 627.6 669.3 C629.6 662.8 630.9 655.2 632.1 649.4 C633.4 643.6 634.3 638.8 635.1 634.5 C635.8 630.1 636.6 623.2 636.6 623.2 Z" fill="none" stroke="#463079" stroke-width="12" filter="url(#b3)" opacity="0.9"/>
<path d="M636.6 623.2 C636.6 623.2 628.7 625.1 624.6 627.0 C620.6 628.9 616.7 631.1 612.2 634.5 C607.6 637.8 602.2 642.7 597.2 646.9 C592.2 651.2 587.3 655.2 582.3 659.9 C577.3 664.5 571.3 669.5 567.3 674.8 C563.4 680.1 560.3 686.0 558.6 691.8 C557.0 697.5 556.7 704.0 557.4 709.2 C558.1 714.4 559.4 719.8 562.9 722.9 C566.3 726.0 572.8 728.5 577.8 727.9 C582.8 727.3 587.8 723.1 592.7 719.2 C597.7 715.2 603.1 709.3 607.7 704.2 C612.3 699.1 616.8 694.6 620.1 688.8 C623.5 683.0 625.6 675.9 627.6 669.3 C629.6 662.8 630.9 655.2 632.1 649.4 C633.4 643.6 634.3 638.8 635.1 634.5 C635.8 630.1 636.6 623.2 636.6 623.2 Z" fill="none" stroke="url(#hat)" stroke-width="9" opacity="0.55" transform="translate(3 3)"/>
<path d="M589.8 661.9 C596.0 654.0 603.0 646.5 607.2 644.4 C611.3 642.3 615.9 645.3 614.7 649.4 C613.4 653.6 605.5 662.3 599.7 669.3 C593.9 676.4 584.8 688.0 579.8 691.8 C574.8 695.5 568.2 696.7 569.8 691.8 C571.5 686.8 583.5 669.8 589.8 661.9 Z" fill="#b29ae0" opacity="0.9" filter="url(#b3)"/>
<path d="M619.7 632.0 C622.1 627.4 632.7 624.1 634.6 627.0 C636.5 629.9 632.9 641.5 630.9 649.4 C628.8 657.3 624.0 673.5 622.1 674.3 C620.3 675.2 620.1 661.4 619.7 654.4 C619.2 647.3 617.2 636.5 619.7 632.0 Z" fill="#9c8468" opacity="0.8" filter="url(#b2)"/>
<path d="M567.3 694.3 C569.0 688.9 579.4 678.5 582.3 679.3 C585.2 680.1 586.4 693.8 584.8 699.2 C583.1 704.6 575.2 712.5 572.3 711.7 C569.4 710.9 565.7 699.6 567.3 694.3 Z" fill="#cbb8ee" opacity="0.85" filter="url(#b2)"/>
</g>
<path d="M636.6 623.2 C636.6 623.2 628.7 625.1 624.6 627.0 C620.6 628.9 616.7 631.1 612.2 634.5 C607.6 637.8 602.2 642.7 597.2 646.9 C592.2 651.2 587.3 655.2 582.3 659.9 C577.3 664.5 571.3 669.5 567.3 674.8 C563.4 680.1 560.3 686.0 558.6 691.8 C557.0 697.5 556.7 704.0 557.4 709.2 C558.1 714.4 559.4 719.8 562.9 722.9 C566.3 726.0 572.8 728.5 577.8 727.9 C582.8 727.3 587.8 723.1 592.7 719.2 C597.7 715.2 603.1 709.3 607.7 704.2 C612.3 699.1 616.8 694.6 620.1 688.8 C623.5 683.0 625.6 675.9 627.6 669.3 C629.6 662.8 630.9 655.2 632.1 649.4 C633.4 643.6 634.3 638.8 635.1 634.5 C635.8 630.1 636.6 623.2 636.6 623.2 Z" fill="none" stroke="#1d0f1c" stroke-width="3" stroke-linejoin="round" stroke-linecap="round"/>
<g transform="translate(579.7907324364724 669.3373193821624) rotate(0) scale(1.35)" stroke="#3a2450" stroke-width="0.8" fill="none"><path d="M-6 -5 L4 6 M-2 -7 L8 4 M-8 -1 L2 8 M-7 4 L6 -6 M-3 8 L9 -3"/></g>
<g transform="translate(1218,813)"><path d="M3.5 1.2 C4.5 0.4 5.8 1 5.8 2.2 V7 L10.5 8 C12.3 8.5 12.8 9.6 12.5 11.2 L11.6 15.6 H4.6 L1 10.8 C0.3 9.8 1.4 8.8 2.4 9.6 L3.5 10.6 Z" fill="#fff" stroke="#111" stroke-width="1" stroke-linejoin="round"/><path d="M7.6 8.4 V11 M9.6 8.8 V11" stroke="#111" stroke-width="0.8"/></g>
</g>
</g></svg>
<div class="a" style="left:60px;top:123px;width:1500px;height:21px;background:#494949;"></div>
<div class="a" style="left:60px;top:144px;width:1500px;height:1px;background:#808080;"></div>
<div class="a" style="left:60px;top:145px;width:21px;height:886px;background:#494949;"></div>
<div class="a" style="left:81px;top:145px;width:1px;height:886px;background:#808080;"></div>
<div class="a" style="left:60px;top:123px;width:21px;height:21px;background:#494949;"></div>
<svg style="left:60px;top:123px" width="22" height="22"><path d="M15.5 1 V21 M1 15.5 H21" stroke="#7a7a7a" stroke-width="1" stroke-dasharray="1 1.6"/></svg>
<svg style="left:0;top:0" width="1920" height="1044"><g stroke="#7c7c7c" stroke-width="1" shape-rendering="crispEdges"><path d="M88.5 141 V144"/><path d="M102.5 124 V144"/><path d="M116.5 141 V144"/><path d="M130.5 138 V144"/><path d="M144.5 141 V144"/><path d="M157.5 124 V144"/><path d="M171.5 141 V144"/><path d="M185.5 138 V144"/><path d="M199.5 141 V144"/><path d="M213.5 124 V144"/><path d="M226.5 141 V144"/><path d="M240.5 138 V144"/><path d="M254.5 141 V144"/><path d="M268.5 124 V144"/><path d="M282.5 141 V144"/><path d="M295.5 138 V144"/><path d="M309.5 141 V144"/><path d="M323.5 124 V144"/><path d="M337.5 141 V144"/><path d="M351.5 138 V144"/><path d="M364.5 141 V144"/><path d="M378.5 124 V144"/><path d="M392.5 141 V144"/><path d="M406.5 138 V144"/><path d="M420.5 141 V144"/><path d="M434.5 124 V144"/><path d="M447.5 141 V144"/><path d="M461.5 138 V144"/><path d="M475.5 141 V144"/><path d="M489.5 124 V144"/><path d="M503.5 141 V144"/><path d="M516.5 138 V144"/><path d="M530.5 141 V144"/><path d="M544.5 124 V144"/><path d="M558.5 141 V144"/><path d="M572.5 138 V144"/><path d="M585.5 141 V144"/><path d="M599.5 124 V144"/><path d="M613.5 141 V144"/><path d="M627.5 138 V144"/><path d="M641.5 141 V144"/><path d="M654.5 124 V144"/><path d="M668.5 141 V144"/><path d="M682.5 138 V144"/><path d="M696.5 141 V144"/><path d="M710.5 124 V144"/><path d="M723.5 141 V144"/><path d="M737.5 138 V144"/><path d="M751.5 141 V144"/><path d="M765.5 124 V144"/><path d="M779.5 141 V144"/><path d="M793.5 138 V144"/><path d="M806.5 141 V144"/><path d="M820.5 124 V144"/><path d="M834.5 141 V144"/><path d="M848.5 138 V144"/><path d="M862.5 141 V144"/><path d="M875.5 124 V144"/><path d="M889.5 141 V144"/><path d="M903.5 138 V144"/><path d="M917.5 141 V144"/><path d="M931.5 124 V144"/><path d="M944.5 141 V144"/><path d="M958.5 138 V144"/><path d="M972.5 141 V144"/><path d="M986.5 124 V144"/><path d="M1000.5 141 V144"/><path d="M1013.5 138 V144"/><path d="M1027.5 141 V144"/><path d="M1041.5 124 V144"/><path d="M1055.5 141 V144"/><path d="M1069.5 138 V144"/><path d="M1082.5 141 V144"/><path d="M1096.5 124 V144"/><path d="M1110.5 141 V144"/><path d="M1124.5 138 V144"/><path d="M1138.5 141 V144"/><path d="M1152.5 124 V144"/><path d="M1165.5 141 V144"/><path d="M1179.5 138 V144"/><path d="M1193.5 141 V144"/><path d="M1207.5 124 V144"/><path d="M1221.5 141 V144"/><path d="M1234.5 138 V144"/><path d="M1248.5 141 V144"/><path d="M1262.5 124 V144"/><path d="M1276.5 141 V144"/><path d="M1290.5 138 V144"/><path d="M1303.5 141 V144"/><path d="M1317.5 124 V144"/><path d="M1331.5 141 V144"/><path d="M1345.5 138 V144"/><path d="M1359.5 141 V144"/><path d="M1372.5 124 V144"/><path d="M1386.5 141 V144"/><path d="M1400.5 138 V144"/><path d="M1414.5 141 V144"/><path d="M1428.5 124 V144"/><path d="M1441.5 141 V144"/><path d="M1455.5 138 V144"/><path d="M1469.5 141 V144"/><path d="M1483.5 124 V144"/><path d="M1497.5 141 V144"/><path d="M1511.5 138 V144"/><path d="M1524.5 141 V144"/><path d="M1538.5 124 V144"/><path d="M1552.5 141 V144"/><path d="M78 153.5 H81"/><path d="M60 168.5 H81"/><path d="M78 182.5 H81"/><path d="M75 196.5 H81"/><path d="M78 210.5 H81"/><path d="M60 224.5 H81"/><path d="M78 238.5 H81"/><path d="M75 253.5 H81"/><path d="M78 267.5 H81"/><path d="M60 281.5 H81"/><path d="M78 295.5 H81"/><path d="M75 309.5 H81"/><path d="M78 323.5 H81"/><path d="M60 338.5 H81"/><path d="M78 352.5 H81"/><path d="M75 366.5 H81"/><path d="M78 380.5 H81"/><path d="M60 394.5 H81"/><path d="M78 408.5 H81"/><path d="M75 423.5 H81"/><path d="M78 437.5 H81"/><path d="M60 451.5 H81"/><path d="M78 465.5 H81"/><path d="M75 479.5 H81"/><path d="M78 493.5 H81"/><path d="M60 508.5 H81"/><path d="M78 522.5 H81"/><path d="M75 536.5 H81"/><path d="M78 550.5 H81"/><path d="M60 564.5 H81"/><path d="M78 578.5 H81"/><path d="M75 592.5 H81"/><path d="M78 607.5 H81"/><path d="M60 621.5 H81"/><path d="M78 635.5 H81"/><path d="M75 649.5 H81"/><path d="M78 663.5 H81"/><path d="M60 677.5 H81"/><path d="M78 692.5 H81"/><path d="M75 706.5 H81"/><path d="M78 720.5 H81"/><path d="M60 734.5 H81"/><path d="M78 748.5 H81"/><path d="M75 762.5 H81"/><path d="M78 777.5 H81"/><path d="M60 791.5 H81"/><path d="M78 805.5 H81"/><path d="M75 819.5 H81"/><path d="M78 833.5 H81"/><path d="M60 847.5 H81"/><path d="M78 862.5 H81"/><path d="M75 876.5 H81"/><path d="M78 890.5 H81"/><path d="M60 904.5 H81"/><path d="M78 918.5 H81"/><path d="M75 932.5 H81"/><path d="M78 947.5 H81"/><path d="M60 961.5 H81"/><path d="M78 975.5 H81"/><path d="M75 989.5 H81"/><path d="M78 1003.5 H81"/><path d="M60 1017.5 H81"/></g><path d="M1442.5 124 V137" stroke="#e6e6e6" stroke-width="1"/><path d="M61 934.5 H72" stroke="#e6e6e6" stroke-width="1"/></svg>
<div class="t" style="left:103.3px;top:130px;font-size:12.4px;color:#bdbdbd;">400</div>
<div class="t" style="left:158.6px;top:130px;font-size:12.4px;color:#bdbdbd;">200</div>
<div class="t" style="left:213.8px;top:130px;font-size:12.4px;color:#bdbdbd;">0</div>
<div class="t" style="left:269.0px;top:130px;font-size:12.4px;color:#bdbdbd;">200</div>
<div class="t" style="left:324.3px;top:130px;font-size:12.4px;color:#bdbdbd;">400</div>
<div class="t" style="left:379.5px;top:130px;font-size:12.4px;color:#bdbdbd;">600</div>
<div class="t" style="left:434.7px;top:130px;font-size:12.4px;color:#bdbdbd;">800</div>
<div class="t" style="left:489.9px;top:130px;font-size:12.4px;color:#bdbdbd;">1000</div>
<div class="t" style="left:545.2px;top:130px;font-size:12.4px;color:#bdbdbd;">1200</div>
<div class="t" style="left:600.4px;top:130px;font-size:12.4px;color:#bdbdbd;">1400</div>
<div class="t" style="left:655.6px;top:130px;font-size:12.4px;color:#bdbdbd;">1600</div>
<div class="t" style="left:710.9px;top:130px;font-size:12.4px;color:#bdbdbd;">1800</div>
<div class="t" style="left:766.1px;top:130px;font-size:12.4px;color:#bdbdbd;">2000</div>
<div class="t" style="left:821.3px;top:130px;font-size:12.4px;color:#bdbdbd;">2200</div>
<div class="t" style="left:876.6px;top:130px;font-size:12.4px;color:#bdbdbd;">2400</div>
<div class="t" style="left:931.8px;top:130px;font-size:12.4px;color:#bdbdbd;">2600</div>
<div class="t" style="left:987.0px;top:130px;font-size:12.4px;color:#bdbdbd;">2800</div>
<div class="t" style="left:1042.2px;top:130px;font-size:12.4px;color:#bdbdbd;">3000</div>
<div class="t" style="left:1097.5px;top:130px;font-size:12.4px;color:#bdbdbd;">3200</div>
<div class="t" style="left:1152.7px;top:130px;font-size:12.4px;color:#bdbdbd;">3400</div>
<div class="t" style="left:1207.9px;top:130px;font-size:12.4px;color:#bdbdbd;">3600</div>
<div class="t" style="left:1263.2px;top:130px;font-size:12.4px;color:#bdbdbd;">3800</div>
<div class="t" style="left:1318.4px;top:130px;font-size:12.4px;color:#bdbdbd;">4000</div>
<div class="t" style="left:1373.6px;top:130px;font-size:12.4px;color:#bdbdbd;">4200</div>
<div class="t" style="left:1428.9px;top:130px;font-size:12.4px;color:#bdbdbd;">4400</div>
<div class="t" style="left:1484.1px;top:130px;font-size:12.4px;color:#bdbdbd;">4600</div>
<div class="t" style="left:1539.3px;top:130px;font-size:12.4px;color:#bdbdbd;width:19.7px;overflow:hidden">4800</div>
<div class="a" style="left:60px;top:145px;width:21px;height:886px;overflow:hidden">
<div class="t" style="left:2px;top:-30.9px;font-size:12.4px;color:#bdbdbd">2</div>
<div class="t" style="left:2px;top:-18.7px;font-size:12.4px;color:#bdbdbd">0</div>
<div class="t" style="left:2px;top:-6.5px;font-size:12.4px;color:#bdbdbd">0</div>
<div class="t" style="left:2px;top:25.8px;font-size:12.4px;color:#bdbdbd">0</div>
<div class="t" style="left:2px;top:82.4px;font-size:12.4px;color:#bdbdbd">2</div>
<div class="t" style="left:2px;top:94.6px;font-size:12.4px;color:#bdbdbd">0</div>
<div class="t" style="left:2px;top:106.8px;font-size:12.4px;color:#bdbdbd">0</div>
<div class="t" style="left:2px;top:139.1px;font-size:12.4px;color:#bdbdbd">4</div>
<div class="t" style="left:2px;top:151.3px;font-size:12.4px;color:#bdbdbd">0</div>
<div class="t" style="left:2px;top:163.5px;font-size:12.4px;color:#bdbdbd">0</div>
<div class="t" style="left:2px;top:195.7px;font-size:12.4px;color:#bdbdbd">6</div>
<div class="t" style="left:2px;top:207.9px;font-size:12.4px;color:#bdbdbd">0</div>
<div class="t" style="left:2px;top:220.1px;font-size:12.4px;color:#bdbdbd">0</div>
<div class="t" style="left:2px;top:252.4px;font-size:12.4px;color:#bdbdbd">8</div>
<div class="t" style="left:2px;top:264.6px;font-size:12.4px;color:#bdbdbd">0</div>
<div class="t" style="left:2px;top:276.8px;font-size:12.4px;color:#bdbdbd">0</div>
<div class="t" style="left:2px;top:309.1px;font-size:12.4px;color:#bdbdbd">1</div>
<div class="t" style="left:2px;top:321.2px;font-size:12.4px;color:#bdbdbd">0</div>
<div class="t" style="left:2px;top:333.4px;font-size:12.4px;color:#bdbdbd">0</div>
<div class="t" style="left:2px;top:345.6px;font-size:12.4px;color:#bdbdbd">0</div>
<div class="t" style="left:2px;top:365.7px;font-size:12.4px;color:#bdbdbd">1</div>
<div class="t" style="left:2px;top:377.9px;font-size:12.4px;color:#bdbdbd">2</div>
<div class="t" style="left:2px;top:390.1px;font-size:12.4px;color:#bdbdbd">0</div>
<div class="t" style="left:2px;top:402.3px;font-size:12.4px;color:#bdbdbd">0</div>
<div class="t" style="left:2px;top:422.4px;font-size:12.4px;color:#bdbdbd">1</div>
<div class="t" style="left:2px;top:434.6px;font-size:12.4px;color:#bdbdbd">4</div>
<div class="t" style="left:2px;top:446.8px;font-size:12.4px;color:#bdbdbd">0</div>
<div class="t" style="left:2px;top:459.0px;font-size:12.4px;color:#bdbdbd">0</div>
<div class="t" style="left:2px;top:479.0px;font-size:12.4px;color:#bdbdbd">1</div>
<div class="t" style="left:2px;top:491.2px;font-size:12.4px;color:#bdbdbd">6</div>
<div class="t" style="left:2px;top:503.4px;font-size:12.4px;color:#bdbdbd">0</div>
<div class="t" style="left:2px;top:515.6px;font-size:12.4px;color:#bdbdbd">0</div>
<div class="t" style="left:2px;top:535.6px;font-size:12.4px;color:#bdbdbd">1</div>
<div class="t" style="left:2px;top:547.9px;font-size:12.4px;color:#bdbdbd">8</div>
<div class="t" style="left:2px;top:560.0px;font-size:12.4px;color:#bdbdbd">0</div>
<div class="t" style="left:2px;top:572.2px;font-size:12.4px;color:#bdbdbd">0</div>
<div class="t" style="left:2px;top:592.3px;font-size:12.4px;color:#bdbdbd">2</div>
<div class="t" style="left:2px;top:604.5px;font-size:12.4px;color:#bdbdbd">0</div>
<div class="t" style="left:2px;top:616.7px;font-size:12.4px;color:#bdbdbd">0</div>
<div class="t" style="left:2px;top:628.9px;font-size:12.4px;color:#bdbdbd">0</div>
<div class="t" style="left:2px;top:649.0px;font-size:12.4px;color:#bdbdbd">2</div>
<div class="t" style="left:2px;top:661.2px;font-size:12.4px;color:#bdbdbd">2</div>
<div class="t" style="left:2px;top:673.4px;font-size:12.4px;color:#bdbdbd">0</div>
<div class="t" style="left:2px;top:685.6px;font-size:12.4px;color:#bdbdbd">0</div>
<div class="t" style="left:2px;top:705.6px;font-size:12.4px;color:#bdbdbd">2</div>
<div class="t" style="left:2px;top:717.8px;font-size:12.4px;color:#bdbdbd">4</div>
<div class="t" style="left:2px;top:730.0px;font-size:12.4px;color:#bdbdbd">0</div>
<div class="t" style="left:2px;top:742.2px;font-size:12.4px;color:#bdbdbd">0</div>
<div class="t" style="left:2px;top:762.2px;font-size:12.4px;color:#bdbdbd">2</div>
<div class="t" style="left:2px;top:774.5px;font-size:12.4px;color:#bdbdbd">6</div>
<div class="t" style="left:2px;top:786.6px;font-size:12.4px;color:#bdbdbd">0</div>
<div class="t" style="left:2px;top:798.9px;font-size:12.4px;color:#bdbdbd">0</div>
<div class="t" style="left:2px;top:818.9px;font-size:12.4px;color:#bdbdbd">2</div>
<div class="t" style="left:2px;top:831.1px;font-size:12.4px;color:#bdbdbd">8</div>
<div class="t" style="left:2px;top:843.3px;font-size:12.4px;color:#bdbdbd">0</div>
<div class="t" style="left:2px;top:855.5px;font-size:12.4px;color:#bdbdbd">0</div>
<div class="t" style="left:2px;top:875.6px;font-size:12.4px;color:#bdbdbd">3</div>
<div class="t" style="left:2px;top:887.8px;font-size:12.4px;color:#bdbdbd">0</div>
<div class="t" style="left:2px;top:900.0px;font-size:12.4px;color:#bdbdbd">0</div>
<div class="t" style="left:2px;top:912.2px;font-size:12.4px;color:#bdbdbd">0</div>
</div>
<div class="a" style="left:1560px;top:123px;width:20px;height:908px;background:#4a4a4a;"></div>
<div class="a" style="left:1565px;top:413px;width:12px;height:305px;background:#6a6a6a;border-radius:2px"></div>
<svg style="left:1566px;top:134px" width="10" height="6"><path d="M0.5 4.8 L4.5 0.5 L8.5 4.8" fill="none" stroke="#9a9a9a" stroke-width="1.3"/></svg>
<svg style="left:1566px;top:1015px" width="10" height="6"><path d="M0.5 0.5 L4.5 4.8 L8.5 0.5" fill="none" stroke="#9a9a9a" stroke-width="1.3"/></svg>
<div class="a" style="left:60px;top:1031px;width:1520px;height:13px;background:#4a4a4a;"></div>
<div class="a" style="left:60px;top:1031px;width:58px;height:13px;background:#454545;"></div>
<div class="t" style="left:67.5px;top:1034px;font-size:13.5px;color:#e0e0e0;transform-origin:0 0;transform:scaleX(0.9173);">27.06%</div>
<div class="a" style="left:118px;top:1031px;width:232px;height:13px;background:#535353;"></div>
<div class="t" style="left:174.5px;top:1036px;font-size:12px;color:#cfcfcf;transform-origin:0 0;transform:scaleX(0.9788);">Doc: 49.8M/290.4M</div>
<svg style="left:336px;top:1036px" width="8" height="10"><path d="M1.5 0.5 L5.5 6.5 L1.5 12" fill="none" stroke="#b0b0b0" stroke-width="1.2"/></svg>
<svg style="left:359px;top:1037px" width="8" height="10"><path d="M5.5 0.5 L1.5 5 L5.5 9" fill="none" stroke="#8a8a8a" stroke-width="1.2"/></svg>
<svg style="left:1543px;top:1038px" width="8" height="10"><path d="M1.5 0.5 L5.5 4.5 L1.5 9" fill="none" stroke="#8a8a8a" stroke-width="1.2"/></svg>
<div class="a" style="left:722px;top:1035px;width:423px;height:9px;background:#6a6a6a;border-radius:2px 2px 0 0"></div>
<div class="a" style="left:1580px;top:88px;width:2px;height:956px;background:#3a3a3a;"></div>
<div class="a" style="left:1582px;top:88px;width:338px;height:956px;background:#535353;"></div>
<div class="a" style="left:1582px;top:88px;width:49px;height:14px;background:#454545;"></div>
<div class="a" style="left:1582px;top:102px;width:49px;height:1px;background:#383838;"></div>
<div class="a" style="left:1631px;top:88px;width:2px;height:956px;background:#3a3a3a;"></div>
<div class="a" style="left:1582px;top:187px;width:49px;height:2px;background:#3e3e3e;"></div>
<div class="a" style="left:1582px;top:310px;width:49px;height:2px;background:#3e3e3e;"></div>
<svg style="left:0;top:0" width="1920" height="1044">
<path d="M1618.5 91.5 L1616 94.5 L1618.5 97.5 Z M1623 91.5 L1620.5 94.5 L1623 97.5 Z" fill="#d8d8d8" stroke="#d8d8d8" stroke-width="0.8"/>
<rect x="1595.00" y="107.5" width="1" height="5" fill="#404040"/>
<rect x="1597.70" y="107.5" width="1" height="5" fill="#404040"/>
<rect x="1600.40" y="107.5" width="1" height="5" fill="#404040"/>
<rect x="1603.10" y="107.5" width="1" height="5" fill="#404040"/>
<rect x="1605.80" y="107.5" width="1" height="5" fill="#404040"/>
<rect x="1608.50" y="107.5" width="1" height="5" fill="#404040"/>
<rect x="1611.20" y="107.5" width="1" height="5" fill="#404040"/>
<rect x="1613.90" y="107.5" width="1" height="5" fill="#404040"/>
<rect x="1616.60" y="107.5" width="1" height="5" fill="#404040"/>
<rect x="1595.00" y="193.5" width="1" height="5" fill="#404040"/>
<rect x="1597.70" y="193.5" width="1" height="5" fill="#404040"/>
<rect x="1600.40" y="193.5" width="1" height="5" fill="#404040"/>
<rect x="1603.10" y="193.5" width="1" height="5" fill="#404040"/>
<rect x="1605.80" y="193.5" width="1" height="5" fill="#404040"/>
<rect x="1608.50" y="193.5" width="1" height="5" fill="#404040"/>
<rect x="1611.20" y="193.5" width="1" height="5" fill="#404040"/>
<rect x="1613.90" y="193.5" width="1" height="5" fill="#404040"/>
<rect x="1616.60" y="193.5" width="1" height="5" fill="#404040"/>
<g transform="translate(1600.5,125) scale(0.98)"><path d="M19.5 0.8 C20.6 1.4 20.4 2.6 19.8 3.6 L11.6 14.2 L8.6 12.2 L17.2 1.6 C17.9 0.8 18.8 0.4 19.5 0.8 Z M8 13 L10.8 15 C11.4 17 10.2 19.2 7.6 20 C5.4 20.6 2.6 20.2 0.6 20.4 C2.8 18.8 3 16.6 4 14.8 C5 13 6.6 12.6 8 13 Z" fill="#d8d8d8"/></g>
<rect x="1595" y="122.5" width="2" height="2.2" fill="#d8d8d8"/><rect x="1598.5" y="123.0" width="5" height="1.3" fill="#d8d8d8"/>
<rect x="1595" y="126.1" width="2" height="2.2" fill="#d8d8d8"/><rect x="1598.5" y="126.6" width="5" height="1.3" fill="#d8d8d8"/>
<rect x="1595" y="129.7" width="2" height="2.2" fill="#d8d8d8"/><rect x="1598.5" y="130.2" width="5" height="1.3" fill="#d8d8d8"/>
<path d="M1594 162.5 C1597 159.5 1602 159.5 1605.5 162.5 C1602 166.5 1597 166.5 1594 162.5 Z" fill="#d8d8d8"/><rect x="1606" y="161.2" width="14.5" height="2.6" fill="#d8d8d8"/>
<rect x="1596" y="171.5" width="12" height="2.6" fill="#d8d8d8"/><path d="M1610.5 172.8 L1617.5 165.5 C1621.5 169.5 1621.5 176 1617.5 180 Z" fill="#d8d8d8"/>
</svg>
<div class="t" style="left:1598.5px;top:209px;font-size:22px;color:#dcdcdc;font-family:'DejaVu Sans',sans-serif;transform-origin:0 0;transform:scaleX(0.95)">A</div>
<div class="a" style="left:1615px;top:210px;width:1.4px;height:20px;background:#dcdcdc;"></div>
<svg style="left:1600px;top:245px" width="17" height="21"><path d="M8 0.5 H15.5 V20 H13.6 V2.6 H11.4 V20 H9 V11.5 H7.5 C4 11.5 1 9.5 1 6 C1 2.5 4 0.5 8 0.5 Z" fill="#dcdcdc"/></svg>
<div class="t" style="left:1599px;top:276px;font-size:26px;color:#dcdcdc;font-family:'DejaVu Serif','Liberation Serif',serif;font-style:italic;transform-origin:0 0;transform:scaleX(0.93)">A</div>
<div class="a" style="left:1633px;top:88px;width:287px;height:14px;background:#454545;"></div>
<div class="a" style="left:1633px;top:102px;width:287px;height:1px;background:#383838;"></div>
<svg style="left:0;top:0" width="1920" height="110"><path d="M1912.5 91.5 L1915 94.5 L1912.5 97.5 Z M1917 91.5 L1919.5 94.5 L1917 97.5 Z" fill="#d8d8d8" stroke="#d8d8d8" stroke-width="0.8"/></svg>
<div class="a" style="left:1633px;top:103px;width:287px;height:35px;background:#454545;"></div>
<div class="a" style="left:1691px;top:103px;width:79px;height:35px;background:#535353;"></div>
<div class="a" style="left:1690px;top:103px;width:1px;height:35px;background:#3e3e3e;"></div>
<div class="a" style="left:1769px;top:103px;width:1px;height:35px;background:#3e3e3e;"></div>
<div class="t" style="left:1646px;top:114px;font-size:13px;color:#c8c8c8;transform-origin:0 0;transform:scaleX(0.9496);">Color</div>
<div class="t" style="left:1702px;top:114px;font-size:13px;color:#f2f2f2;transform-origin:0 0;transform:scaleX(0.9004);font-weight:bold;">Swatches</div>
<div class="a" style="left:1907px;top:116.0px;width:12px;height:1.3px;background:#c0c0c0;"></div>
<div class="a" style="left:1907px;top:118.8px;width:12px;height:1.3px;background:#c0c0c0;"></div>
<div class="a" style="left:1907px;top:121.6px;width:12px;height:1.3px;background:#c0c0c0;"></div>
<div class="a" style="left:1907px;top:124.4px;width:12px;height:1.3px;background:#c0c0c0;"></div>
<div class="a" style="left:1639px;top:149px;width:279px;height:24px;background:#484848;"></div>
<div class="a" style="left:1641.0px;top:151px;width:19.4px;height:19.6px;background:#fbf866;"></div>
<div class="a" style="left:1662.2px;top:151px;width:19.4px;height:19.6px;background:#fbf866;"></div>
<div class="a" style="left:1683.4px;top:151px;width:19.4px;height:19.6px;background:#8fd13f;"></div>
<div class="a" style="left:1704.7px;top:151px;width:19.4px;height:19.6px;background:#ffffff;"></div>
<div class="a" style="left:1725.9px;top:151px;width:19.4px;height:19.6px;background:#fdfaaa;"></div>
<div class="a" style="left:1747.1px;top:151px;width:19.4px;height:19.6px;background:#fdf98a;"></div>
<div class="a" style="left:1768.3px;top:151px;width:19.4px;height:19.6px;background:#fdf99c;"></div>
<div class="a" style="left:1789.5px;top:151px;width:19.4px;height:19.6px;background:#87963f;"></div>
<div class="a" style="left:1810.8px;top:151px;width:19.4px;height:19.6px;background:#b5c870;"></div>
<div class="a" style="left:1832.0px;top:151px;width:19.4px;height:19.6px;background:#c6da76;"></div>
<div class="a" style="left:1853.2px;top:151px;width:19.4px;height:19.6px;background:#87963f;"></div>
<div class="a" style="left:1874.4px;top:151px;width:19.4px;height:19.6px;background:#b5c870;"></div>
<div class="a" style="left:1895.6px;top:151px;width:19.4px;height:19.6px;background:#c9dc78;"></div>
<div class="a" style="left:1634.3px;top:187.3px;width:20px;height:19.7px;background:#e60000;"></div>
<div class="a" style="left:1656.8px;top:187.3px;width:20px;height:19.7px;background:#fcfc19;"></div>
<div class="a" style="left:1679.3px;top:187.3px;width:20px;height:19.7px;background:#19f519;"></div>
<div class="a" style="left:1701.8px;top:187.3px;width:20px;height:19.7px;background:#19fcfc;"></div>
<div class="a" style="left:1724.3px;top:187.3px;width:20px;height:19.7px;background:#0000e6;"></div>
<div class="a" style="left:1746.8px;top:187.3px;width:20px;height:19.7px;background:#e600e6;"></div>
<div class="a" style="left:1769.3px;top:187.3px;width:20px;height:19.7px;background:#ffffff;"></div>
<div class="a" style="left:1791.8px;top:187.3px;width:20px;height:19.7px;background:#ebebeb;"></div>
<div class="a" style="left:1814.3px;top:187.3px;width:20px;height:19.7px;background:#e0e0e0;"></div>
<div class="a" style="left:1836.8px;top:187.3px;width:20px;height:19.7px;background:#d6d6d6;"></div>
<div class="a" style="left:1859.3px;top:187.3px;width:20px;height:19.7px;background:#cccccc;"></div>
<div class="a" style="left:1881.8px;top:187.3px;width:20px;height:19.7px;background:#c2c2c2;"></div>
<div class="a" style="left:1634.3px;top:210.0px;width:20px;height:19.7px;background:#b8b8b8;"></div>
<div class="a" style="left:1656.8px;top:210.0px;width:20px;height:19.7px;background:#adadad;"></div>
<div class="a" style="left:1679.3px;top:210.0px;width:20px;height:19.7px;background:#a3a3a3;"></div>
<div class="a" style="left:1701.8px;top:210.0px;width:20px;height:19.7px;background:#999999;"></div>
<div class="a" style="left:1724.3px;top:210.0px;width:20px;height:19.7px;background:#da0021;"></div>
<div class="a" style="left:1746.8px;top:210.0px;width:20px;height:19.7px;background:#fcfc14;"></div>
<div class="a" style="left:1769.3px;top:210.0px;width:20px;height:19.7px;background:#0cb755;"></div>
<div class="a" style="left:1791.8px;top:210.0px;width:20px;height:19.7px;background:#0fb5e8;"></div>
<div class="a" style="left:1814.3px;top:210.0px;width:20px;height:19.7px;background:#2e2a8c;"></div>
<div class="a" style="left:1836.8px;top:210.0px;width:20px;height:19.7px;background:#d6008a;"></div>
<div class="a" style="left:1859.3px;top:210.0px;width:20px;height:19.7px;background:#8f8f8f;"></div>
<div class="a" style="left:1881.8px;top:210.0px;width:20px;height:19.7px;background:#858585;"></div>
<div class="a" style="left:1634.3px;top:232.6px;width:20px;height:19.7px;background:#707070;"></div>
<div class="a" style="left:1656.8px;top:232.6px;width:20px;height:19.7px;background:#666666;"></div>
<div class="a" style="left:1679.3px;top:232.6px;width:20px;height:19.7px;background:#5c5c5c;"></div>
<div class="a" style="left:1701.8px;top:232.6px;width:20px;height:19.7px;background:#4d4d4d;"></div>
<div class="a" style="left:1724.3px;top:232.6px;width:20px;height:19.7px;background:#3b3b3b;"></div>
<div class="a" style="left:1746.8px;top:232.6px;width:20px;height:19.7px;background:#262626;"></div>
<div class="a" style="left:1769.3px;top:232.6px;width:20px;height:19.7px;background:#121212;"></div>
<div class="a" style="left:1791.8px;top:232.6px;width:20px;height:19.7px;background:#000000;"></div>
<div class="a" style="left:1814.3px;top:232.6px;width:20px;height:19.7px;background:#ef8f7f;"></div>
<div class="a" style="left:1836.8px;top:232.6px;width:20px;height:19.7px;background:#f3a882;"></div>
<div class="a" style="left:1859.3px;top:232.6px;width:20px;height:19.7px;background:#f8c48e;"></div>
<div class="a" style="left:1881.8px;top:232.6px;width:20px;height:19.7px;background:#fdf99d;"></div>
<div class="a" style="left:1634.3px;top:255.2px;width:20px;height:19.7px;background:#c5e59c;"></div>
<div class="a" style="left:1656.8px;top:255.2px;width:20px;height:19.7px;background:#a3dc9f;"></div>
<div class="a" style="left:1679.3px;top:255.2px;width:20px;height:19.7px;background:#82d3a1;"></div>
<div class="a" style="left:1701.8px;top:255.2px;width:20px;height:19.7px;background:#7cd3c7;"></div>
<div class="a" style="left:1724.3px;top:255.2px;width:20px;height:19.7px;background:#73d3f0;"></div>
<div class="a" style="left:1746.8px;top:255.2px;width:20px;height:19.7px;background:#80a8d8;"></div>
<div class="a" style="left:1769.3px;top:255.2px;width:20px;height:19.7px;background:#8490cb;"></div>
<div class="a" style="left:1791.8px;top:255.2px;width:20px;height:19.7px;background:#8a7ec2;"></div>
<div class="a" style="left:1814.3px;top:255.2px;width:20px;height:19.7px;background:#a181c0;"></div>
<div class="a" style="left:1836.8px;top:255.2px;width:20px;height:19.7px;background:#bd85c0;"></div>
<div class="a" style="left:1859.3px;top:255.2px;width:20px;height:19.7px;background:#ee8fc0;"></div>
<div class="a" style="left:1881.8px;top:255.2px;width:20px;height:19.7px;background:#ef8fa3;"></div>
<div class="a" style="left:1634.3px;top:277.9px;width:20px;height:19.7px;background:#e85d50;"></div>
<div class="a" style="left:1656.8px;top:277.9px;width:20px;height:19.7px;background:#ee8758;"></div>
<div class="a" style="left:1679.3px;top:277.9px;width:20px;height:19.7px;background:#f6ac63;"></div>
<div class="a" style="left:1701.8px;top:277.9px;width:20px;height:19.7px;background:#fcf56c;"></div>
<div class="a" style="left:1724.3px;top:277.9px;width:20px;height:19.7px;background:#afe07a;"></div>
<div class="a" style="left:1746.8px;top:277.9px;width:20px;height:19.7px;background:#80d480;"></div>
<div class="a" style="left:1769.3px;top:277.9px;width:20px;height:19.7px;background:#3ec17e;"></div>
<div class="a" style="left:1791.8px;top:277.9px;width:20px;height:19.7px;background:#1dc0b0;"></div>
<div class="a" style="left:1814.3px;top:277.9px;width:20px;height:19.7px;background:#10cceb;"></div>
<div class="a" style="left:1836.8px;top:277.9px;width:20px;height:19.7px;background:#4b8fcb;"></div>
<div class="a" style="left:1859.3px;top:277.9px;width:20px;height:19.7px;background:#5474bc;"></div>
<div class="a" style="left:1881.8px;top:277.9px;width:20px;height:19.7px;background:#5d50a2;"></div>
<div class="a" style="left:1634.3px;top:300.6px;width:20px;height:19.7px;background:#8552a3;"></div>
<div class="a" style="left:1656.8px;top:300.6px;width:20px;height:19.7px;background:#a555a3;"></div>
<div class="a" style="left:1679.3px;top:300.6px;width:20px;height:19.7px;background:#e55ca5;"></div>
<div class="a" style="left:1701.8px;top:300.6px;width:20px;height:19.7px;background:#e65c81;"></div>
<div class="a" style="left:1724.3px;top:300.6px;width:20px;height:19.7px;background:#da0025;"></div>
<div class="a" style="left:1746.8px;top:300.6px;width:20px;height:19.7px;background:#e95d24;"></div>
<div class="a" style="left:1769.3px;top:300.6px;width:20px;height:19.7px;background:#ee9022;"></div>
<div class="a" style="left:1791.8px;top:300.6px;width:20px;height:19.7px;background:#fcfc1e;"></div>
<div class="a" style="left:1814.3px;top:300.6px;width:20px;height:19.7px;background:#90da44;"></div>
<div class="a" style="left:1836.8px;top:300.6px;width:20px;height:19.7px;background:#3cc751;"></div>
<div class="a" style="left:1859.3px;top:300.6px;width:20px;height:19.7px;background:#0cb755;"></div>
<div class="a" style="left:1881.8px;top:300.6px;width:20px;height:19.7px;background:#13b59a;"></div>
<div class="a" style="left:1907px;top:187px;width:13px;height:135px;background:#4a4a4a;"></div>
<div class="a" style="left:1910px;top:208px;width:10px;height:47px;background:#646464;border-radius:2px"></div>
<svg style="left:1911px;top:194px" width="10" height="6"><path d="M0.5 5 L4.5 0.8 L8.5 5" fill="none" stroke="#9a9a9a" stroke-width="1.2"/></svg>
<svg style="left:1911px;top:304px" width="10" height="6"><path d="M0.5 0.8 L4.5 5 L8.5 0.8" fill="none" stroke="#9a9a9a" stroke-width="1.2"/></svg>
<svg style="left:1841px;top:329px" width="14" height="14"><path d="M1 1 H12.5 V12.5 H6 L1 7.5 Z" fill="none" stroke="#dcdcdc" stroke-width="1.5" stroke-linejoin="round"/><path d="M1 7.5 H6 V12.5 Z" fill="#dcdcdc"/></svg>
<svg style="left:1878px;top:328px" width="14" height="16"><path d="M1 3.5 H13 M5 3.5 V1.2 H9 V3.5 M2.2 3.5 V14.8 H11.8 V3.5 M5 6 V12.5 M7 6 V12.5 M9 6 V12.5" fill="none" stroke="#9a9a9a" stroke-width="1.3"/></svg>
<div class="a" style="left:1633px;top:351px;width:287px;height:4px;background:#3a3a3a;"></div>
<div class="a" style="left:1633px;top:355px;width:287px;height:34px;background:#454545;"></div>
<div class="a" style="left:1633px;top:355px;width:60px;height:34px;background:#535353;"></div>
<div class="a" style="left:1693px;top:355px;width:1px;height:34px;background:#3e3e3e;"></div>
<div class="a" style="left:1750px;top:355px;width:1px;height:34px;background:#3e3e3e;"></div>
<div class="t" style="left:1645px;top:366px;font-size:13px;color:#f2f2f2;transform-origin:0 0;transform:scaleX(0.8826);font-weight:bold;">Layers</div>
<div class="t" style="left:1705px;top:366px;font-size:13px;color:#c8c8c8;transform-origin:0 0;transform:scaleX(0.9024);">Paths</div>
<div class="a" style="left:1907px;top:368.0px;width:12px;height:1.3px;background:#c0c0c0;"></div>
<div class="a" style="left:1907px;top:370.8px;width:12px;height:1.3px;background:#c0c0c0;"></div>
<div class="a" style="left:1907px;top:373.6px;width:12px;height:1.3px;background:#c0c0c0;"></div>
<div class="a" style="left:1907px;top:376.4px;width:12px;height:1.3px;background:#c0c0c0;"></div>
<div class="a" style="left:1637px;top:400px;width:108px;height:23px;background:#454545;border:1px solid #636363;border-radius:3px"></div>
<svg style="left:1646px;top:404px" width="16" height="16"><circle cx="9.8" cy="6.5" r="4" fill="none" stroke="#dcdcdc" stroke-width="1.5"/><path d="M7 9.6 L2.6 13.6" stroke="#dcdcdc" stroke-width="2" stroke-linecap="round"/></svg>
<div class="t" style="left:1665px;top:405px;font-size:13px;color:#e8e8e8;transform-origin:0 0;transform:scaleX(0.9031);">Kind</div>
<svg style="left:1733px;top:411px" width="8" height="5"><path d="M0.5 0.5 L4.0 4 L7.5 0.5" fill="none" stroke="#c8c8c8" stroke-width="1.4"/></svg>
<svg style="left:0;top:0" width="1920" height="1044">
<rect x="1761.2" y="406.5" width="13.6" height="11" fill="none" stroke="#dcdcdc" stroke-width="1.4"/><path d="M1763 415.5 L1766 411 L1768 413.5 L1770.3 410.5 L1773 415.5 Z" fill="#dcdcdc"/>
<circle cx="1797.6" cy="411.6" r="5.8" fill="none" stroke="#dcdcdc" stroke-width="1.4"/><path d="M1802 407.5 A5.8 5.8 0 0 1 1793.5 415.8 Z" fill="#dcdcdc"/>
<path d="M1822 406 H1834 V409 H1832.8 L1832.4 407.5 H1829.2 V416.5 L1831 417 V418 H1825 V417 L1826.8 416.5 V407.5 H1823.6 L1823.2 409 H1822 Z" fill="#dcdcdc"/>
<rect x="1853" y="407" width="10" height="9.6" fill="none" stroke="#dcdcdc" stroke-width="1.3"/>
<rect x="1851.2" y="405.2" width="3.6" height="3.6" fill="#535353" stroke="#dcdcdc" stroke-width="1"/>
<rect x="1861.2" y="405.2" width="3.6" height="3.6" fill="#535353" stroke="#dcdcdc" stroke-width="1"/>
<rect x="1851.2" y="414.8" width="3.6" height="3.6" fill="#535353" stroke="#dcdcdc" stroke-width="1"/>
<rect x="1861.2" y="414.8" width="3.6" height="3.6" fill="#535353" stroke="#dcdcdc" stroke-width="1"/>
<path d="M1886 405.3 H1891.5 L1894.8 408.6 V417.8 H1889" fill="none" stroke="#dcdcdc" stroke-width="1.3"/><path d="M1891.3 405.5 V409 H1894.6" fill="none" stroke="#dcdcdc" stroke-width="1"/><rect x="1882.3" y="411.5" width="7" height="7" fill="#dcdcdc"/>
<rect x="1911" y="400.5" width="12" height="23" rx="5.5" fill="#454545" stroke="#626262" stroke-width="1"/><circle cx="1916.3" cy="405.8" r="4.8" fill="#e4e4e4"/>
<rect x="1682.6" y="475.4" width="13" height="13" fill="none" stroke="#dcdcdc" stroke-width="1.2"/>
<rect x="1683.20" y="476.00" width="3.95" height="3.95" fill="#dcdcdc"/>
<rect x="1683.20" y="483.90" width="3.95" height="3.95" fill="#dcdcdc"/>
<rect x="1687.15" y="479.95" width="3.95" height="3.95" fill="#dcdcdc"/>
<rect x="1691.10" y="476.00" width="3.95" height="3.95" fill="#dcdcdc"/>
<rect x="1691.10" y="483.90" width="3.95" height="3.95" fill="#dcdcdc"/>
<g transform="translate(1709.6,474) scale(0.8)"><path d="M19.5 0.8 C20.6 1.4 20.4 2.6 19.8 3.6 L11.6 14.2 L8.6 12.2 L17.2 1.6 C17.9 0.8 18.8 0.4 19.5 0.8 Z M8 13 L10.8 15 C11.4 17 10.2 19.2 7.6 20 C5.4 20.6 2.6 20.2 0.6 20.4 C2.8 18.8 3 16.6 4 14.8 C5 13 6.6 12.6 8 13 Z" fill="#dcdcdc"/></g>
<g transform="translate(1743.5,482) scale(0.82)"><path d="M0 -9.5 L3.4 -5.3 H1 V-1 H5.3 V-3.4 L9.5 0 L5.3 3.4 V1 H1 V5.3 H3.4 L0 9.5 L-3.4 5.3 H-1 V1 H-5.3 V3.4 L-9.5 0 L-5.3 -3.4 V-1 H-1 V-5.3 H-3.4 Z" fill="#dcdcdc"/></g>
<path d="M1763 478 H1775 L1778 481 V487 M1766 475 V487 H1780 M1775 478 V481 H1778" fill="none" stroke="#dcdcdc" stroke-width="1.3"/><path d="M1765.3 489 H1766.8 M1776.8 489 H1778.3 M1776.5 475.5 H1778.5 M1779.5 477.5 V478.5" stroke="#dcdcdc" stroke-width="1.2"/>
<rect x="1793" y="480.3" width="12" height="8.8" rx="0.8" fill="#dcdcdc"/><path d="M1795.6 480.5 V478.5 C1795.6 473.8 1802.4 473.8 1802.4 478.5 V480.5" fill="none" stroke="#dcdcdc" stroke-width="1.7"/><circle cx="1799" cy="484.7" r="1.3" fill="#535353"/>
</svg>
<div class="a" style="left:1633px;top:428px;width:287px;height:1px;background:#444;"></div>
<div class="a" style="left:1633px;top:463px;width:287px;height:1px;background:#444;"></div>
<div class="a" style="left:1637px;top:435.5px;width:158.5px;height:23px;background:#454545;border:1px solid #636363;border-radius:3px"></div>
<div class="t" style="left:1648px;top:440px;font-size:13px;color:#ececec;transform-origin:0 0;transform:scaleX(0.9428);">Normal</div>
<svg style="left:1783px;top:446px" width="8" height="5"><path d="M0.5 0.5 L4.0 4 L7.5 0.5" fill="none" stroke="#c8c8c8" stroke-width="1.4"/></svg>
<div class="t" style="left:1805px;top:440px;font-size:13px;color:#d4d4d4;transform-origin:0 0;transform:scaleX(0.9542);">Opacity:</div>
<div class="a" style="left:1856.5px;top:437.5px;width:70px;height:20px;background:#454545;border:1px solid #606060;border-radius:3px"></div>
<div class="a" style="left:1902px;top:438.5px;width:1px;height:18px;background:#606060;"></div>
<div class="t" style="left:1861.5px;top:441.0px;font-size:13px;color:#ececec;transform-origin:0 0;transform:scaleX(0.9775);">100%</div>
<svg style="left:1908px;top:446.5px" width="8" height="5"><path d="M0.5 0.5 L4.0 4 L7.5 0.5" fill="none" stroke="#c8c8c8" stroke-width="1.4"/></svg>
<div class="t" style="left:1641px;top:476px;font-size:13px;color:#d4d4d4;transform-origin:0 0;transform:scaleX(0.9011);">Lock:</div>
<div class="t" style="left:1833px;top:474.5px;font-size:13px;color:#d4d4d4;transform-origin:0 0;transform:scaleX(0.9150);">Fill:</div>
<div class="a" style="left:1856.5px;top:472.5px;width:70px;height:20px;background:#454545;border:1px solid #606060;border-radius:3px"></div>
<div class="a" style="left:1902px;top:473.5px;width:1px;height:18px;background:#606060;"></div>
<div class="t" style="left:1861.5px;top:476.0px;font-size:13px;color:#ececec;transform-origin:0 0;transform:scaleX(0.9775);">100%</div>
<svg style="left:1908px;top:481.5px" width="8" height="5"><path d="M0.5 0.5 L4.0 4 L7.5 0.5" fill="none" stroke="#c8c8c8" stroke-width="1.4"/></svg>
<div class="a" style="left:1671px;top:502px;width:236px;height:79px;background:#6b6b6b;"></div>
<div class="a" style="left:1670px;top:502px;width:1px;height:517px;background:#484848;"></div>
<div class="a" style="left:1633px;top:580px;width:274px;height:1px;background:#474747;"></div>
<div class="a" style="left:1633px;top:661px;width:274px;height:1px;background:#474747;"></div>
<div class="a" style="left:1633px;top:694px;width:274px;height:1px;background:#474747;"></div>
<div class="a" style="left:1633px;top:775px;width:274px;height:1px;background:#474747;"></div>
<div class="a" style="left:1633px;top:856px;width:274px;height:1px;background:#474747;"></div>
<div class="a" style="left:1633px;top:937px;width:274px;height:1px;background:#474747;"></div>
<div class="a" style="left:1633px;top:1018px;width:274px;height:1px;background:#474747;"></div>
<svg style="left:1643px;top:537px" width="18" height="12"><path d="M0.8 6 C4 0.2 13.5 0.2 16.8 6 C13.5 11.6 4 11.6 0.8 6 Z" fill="#e2e2e2"/><circle cx="8.8" cy="5.6" r="3.3" fill="#535353"/><circle cx="8.8" cy="5.2" r="1.5" fill="#e2e2e2"/></svg>
<svg style="left:1643px;top:619px" width="18" height="12"><path d="M0.8 6 C4 0.2 13.5 0.2 16.8 6 C13.5 11.6 4 11.6 0.8 6 Z" fill="#e2e2e2"/><circle cx="8.8" cy="5.6" r="3.3" fill="#535353"/><circle cx="8.8" cy="5.2" r="1.5" fill="#e2e2e2"/></svg>
<svg style="left:1643px;top:675px" width="18" height="12"><path d="M0.8 6 C4 0.2 13.5 0.2 16.8 6 C13.5 11.6 4 11.6 0.8 6 Z" fill="#e2e2e2"/><circle cx="8.8" cy="5.6" r="3.3" fill="#535353"/><circle cx="8.8" cy="5.2" r="1.5" fill="#e2e2e2"/></svg>
<svg style="left:1643px;top:731px" width="18" height="12"><path d="M0.8 6 C4 0.2 13.5 0.2 16.8 6 C13.5 11.6 4 11.6 0.8 6 Z" fill="#e2e2e2"/><circle cx="8.8" cy="5.6" r="3.3" fill="#535353"/><circle cx="8.8" cy="5.2" r="1.5" fill="#e2e2e2"/></svg>
<svg style="left:1643px;top:812px" width="18" height="12"><path d="M0.8 6 C4 0.2 13.5 0.2 16.8 6 C13.5 11.6 4 11.6 0.8 6 Z" fill="#e2e2e2"/><circle cx="8.8" cy="5.6" r="3.3" fill="#535353"/><circle cx="8.8" cy="5.2" r="1.5" fill="#e2e2e2"/></svg>
<svg style="left:1643px;top:894px" width="18" height="12"><path d="M0.8 6 C4 0.2 13.5 0.2 16.8 6 C13.5 11.6 4 11.6 0.8 6 Z" fill="#e2e2e2"/><circle cx="8.8" cy="5.6" r="3.3" fill="#535353"/><circle cx="8.8" cy="5.2" r="1.5" fill="#e2e2e2"/></svg>
<svg style="left:1643px;top:976px" width="18" height="12"><path d="M0.8 6 C4 0.2 13.5 0.2 16.8 6 C13.5 11.6 4 11.6 0.8 6 Z" fill="#e2e2e2"/><circle cx="8.8" cy="5.6" r="3.3" fill="#535353"/><circle cx="8.8" cy="5.2" r="1.5" fill="#e2e2e2"/></svg>
<div class="a" style="left:1675.5px;top:516px;width:71.5px;height:52px;border:1px solid #1a1a1a;background-color:#fff;background-image:linear-gradient(45deg,#ccc 25%,transparent 25%,transparent 75%,#ccc 75%),linear-gradient(45deg,#ccc 25%,transparent 25%,transparent 75%,#ccc 75%);background-size:6px 6px;background-position:0 0,3px 3px;overflow:hidden"></div>
<svg style="left:1673px;top:514px" width="76" height="56"><path d="M0.5 19 V0.5 H24 M50 0.5 H74.5 V19 M74.5 37 V55.5 H50 M24 55.5 H0.5 V37" fill="none" stroke="#f0f0f0" stroke-width="1.2"/></svg>
<div class="t" style="left:1758px;top:536.5px;font-size:13px;color:#f0f0f0;transform-origin:0 0;transform:scaleX(0.9389);">Layer 22</div>
<div class="a" style="left:1676px;top:614px;width:69px;height:20px;border:1px solid #1a1a1a;background-color:#fff;background-image:linear-gradient(45deg,#ccc 25%,transparent 25%,transparent 75%,#ccc 75%),linear-gradient(45deg,#ccc 25%,transparent 25%,transparent 75%,#ccc 75%);background-size:6px 6px;background-position:0 0,3px 3px;overflow:hidden"><div class="a" style="left:44px;top:1px;width:22px;height:16px;background:radial-gradient(ellipse,#fff 30%,rgba(255,255,255,0) 75%)"></div></div>
<div class="t" style="left:1758px;top:619px;font-size:13px;color:#e8e8e8;transform-origin:0 0;transform:scaleX(0.9389);">Layer 18</div>
<svg style="left:1677px;top:674px" width="8" height="14"><path d="M1.5 1 L5.5 6.5 L1.5 12" fill="none" stroke="#c8c8c8" stroke-width="1.2"/></svg>
<svg style="left:1689px;top:672px" width="20" height="16"><path d="M0.5 2 C0.5 1 1 0.5 2 0.5 H8 L9.5 2.8 H17.5 C18.5 2.8 19 3.3 19 4.3 V14 C19 15 18.5 15.5 17.5 15.5 H2 C1 15.5 0.5 15 0.5 14 Z" fill="#d8d8d8"/><path d="M0.5 4.2 H19" stroke="#bdbdbd" stroke-width="0.8"/></svg>
<div class="t" style="left:1724px;top:675.5px;font-size:13px;color:#e8e8e8;transform-origin:0 0;transform:scaleX(0.9789);">outline</div>
<div class="a" style="left:1676px;top:703px;width:69px;height:66px;border:1px solid #1a1a1a;background-color:#fff;background-image:linear-gradient(45deg,#ccc 25%,transparent 25%,transparent 75%,#ccc 75%),linear-gradient(45deg,#ccc 25%,transparent 25%,transparent 75%,#ccc 75%);background-size:6px 6px;background-position:0 0,3px 3px;overflow:hidden"><svg style="left:0;top:0" width="68" height="66"><g fill="none" stroke="#f9f58a" stroke-width="1.3" opacity="0.9"><path d="M10 20 C14 12 24 14 26 22 M30 8 C40 2 52 8 56 16 M8 34 C16 30 22 36 30 32 M36 40 C44 36 52 42 60 38 M20 52 C30 56 44 54 54 50 M44 20 C50 24 56 22 60 28 M14 44 L24 48 M40 28 L36 50"/></g></svg></div>
<div class="t" style="left:1758px;top:730.5px;font-size:13px;color:#e8e8e8;transform-origin:0 0;transform:scaleX(0.9290);">Layer 21</div>
<div class="a" style="left:1676px;top:790px;width:69px;height:55.5px;border:1px solid #1a1a1a;background-color:#fff;background-image:linear-gradient(45deg,#ccc 25%,transparent 25%,transparent 75%,#ccc 75%),linear-gradient(45deg,#ccc 25%,transparent 25%,transparent 75%,#ccc 75%);background-size:6px 6px;background-position:0 0,3px 3px;overflow:hidden"><svg style="left:0;top:0" width="68" height="54"><g fill="#faf56a"><circle cx="58" cy="5" r="2.5"/><circle cx="52" cy="18" r="2"/><circle cx="64" cy="14" r="1.8"/><circle cx="66" cy="25" r="2"/><circle cx="55" cy="30" r="1.5"/><circle cx="64" cy="38" r="2"/><circle cx="57" cy="50" r="2.4"/><circle cx="2" cy="18" r="1.5"/><circle cx="6" cy="28" r="1.6"/><circle cx="7" cy="38" r="1.6"/></g></svg></div>
<div class="t" style="left:1758px;top:812px;font-size:13px;color:#e8e8e8;transform-origin:0 0;transform:scaleX(0.9290);">Layer 20</div>
<div class="a" style="left:1676px;top:887px;width:69px;height:24.5px;border:1px solid #1a1a1a;background-color:#fff;background-image:linear-gradient(45deg,#ccc 25%,transparent 25%,transparent 75%,#ccc 75%),linear-gradient(45deg,#ccc 25%,transparent 25%,transparent 75%,#ccc 75%);background-size:6px 6px;background-position:0 0,3px 3px;overflow:hidden"><svg style="left:0;top:0" width="68" height="24"><defs><radialGradient id="l17g"><stop offset="0" stop-color="#f8fb7a"/><stop offset="0.7" stop-color="#e4f060"/><stop offset="1" stop-color="#b9cf4a"/></radialGradient></defs><ellipse cx="48" cy="12" rx="20" ry="8" fill="url(#l17g)" transform="rotate(-22 48 12)"/><ellipse cx="8" cy="13" rx="6" ry="2.2" fill="#f4f570"/></svg></div>
<div class="t" style="left:1758px;top:893.5px;font-size:13px;color:#e8e8e8;transform-origin:0 0;transform:scaleX(0.9290);">Layer 17</div>
<div class="a" style="left:1676px;top:963px;width:69px;height:34.5px;border:1px solid #1a1a1a;background-color:#fff;background-image:linear-gradient(45deg,#ccc 25%,transparent 25%,transparent 75%,#ccc 75%),linear-gradient(45deg,#ccc 25%,transparent 25%,transparent 75%,#ccc 75%);background-size:6px 6px;background-position:0 0,3px 3px;overflow:hidden"><svg style="left:0;top:0" width="68" height="34"><g stroke="#8a55c0" stroke-width="1.2" fill="none"><path d="M5 27 l2 2 M12 24 l1 3 M18 30 l1 2 M23 22 l1 3 M30 18 l1 3 M34 24 l2 3 M38 12 l2 4 M43 10 l3 5 M45 16 l1 3 M54 8 l2 5 M58 6 l3 3 M63 10 l1 4 M28 26 l2 1"/></g></svg></div>
<div class="t" style="left:1758px;top:975.5px;font-size:13px;color:#e8e8e8;transform-origin:0 0;transform:scaleX(0.9551);">Layer 13 copy</div>
<div class="a" style="left:1907px;top:502px;width:13px;height:517px;background:#4a4a4a;"></div>
<div class="a" style="left:1910px;top:523px;width:10px;height:139px;background:#646464;border-radius:2px"></div>
<svg style="left:1911px;top:511px" width="10" height="6"><path d="M0.5 5 L4.5 0.8 L8.5 5" fill="none" stroke="#9a9a9a" stroke-width="1.2"/></svg>
<svg style="left:1911px;top:1003px" width="10" height="6"><path d="M0.5 0.8 L4.5 5 L8.5 0.8" fill="none" stroke="#9a9a9a" stroke-width="1.2"/></svg>
<div class="a" style="left:1633px;top:1019px;width:287px;height:1px;background:#444;"></div>
<svg style="left:0;top:0" width="1920" height="1044">
<rect x="1674" y="1032.5" width="9" height="7" rx="3.5" fill="none" stroke="#8e8e8e" stroke-width="1.5"/><rect x="1681" y="1032.5" width="9" height="7" rx="3.5" fill="none" stroke="#8e8e8e" stroke-width="1.5"/><path d="M1678.5 1036 H1685.5" stroke="#8e8e8e" stroke-width="1.5"/>
<rect x="1741.5" y="1030.5" width="16" height="11.5" fill="#dcdcdc"/><circle cx="1749.5" cy="1036.2" r="3.5" fill="#535353"/>
<circle cx="1783.7" cy="1036" r="5.8" fill="none" stroke="#dcdcdc" stroke-width="1.4"/><path d="M1788 1032 A5.8 5.8 0 0 1 1779.5 1040.2 Z" fill="#dcdcdc"/>
<path d="M1810 1031.5 C1810 1030.5 1810.5 1030 1811.5 1030 H1816 L1817.3 1032 H1823.5 C1824.5 1032 1825 1032.5 1825 1033.5 V1041 C1825 1042 1824.5 1042.5 1823.5 1042.5 H1811.5 C1810.5 1042.5 1810 1042 1810 1041 Z" fill="#dcdcdc"/>
</svg>
<div class="t" style="left:1709.5px;top:1027px;font-size:17px;font-style:italic;color:#dcdcdc;font-family:'Liberation Sans',sans-serif;letter-spacing:-0.5px">fx</div>
<svg style="left:1845px;top:1029.5px" width="14" height="14"><path d="M1 1 H12.5 V12.5 H6 L1 7.5 Z" fill="none" stroke="#dcdcdc" stroke-width="1.5" stroke-linejoin="round"/><path d="M1 7.5 H6 V12.5 Z" fill="#dcdcdc"/></svg>
<svg style="left:1877px;top:1028.5px" width="14" height="16"><path d="M1 3.5 H13 M5 3.5 V1.2 H9 V3.5 M2.2 3.5 V14.8 H11.8 V3.5 M5 6 V12.5 M7 6 V12.5 M9 6 V12.5" fill="none" stroke="#dcdcdc" stroke-width="1.3"/></svg>
</body></html>
